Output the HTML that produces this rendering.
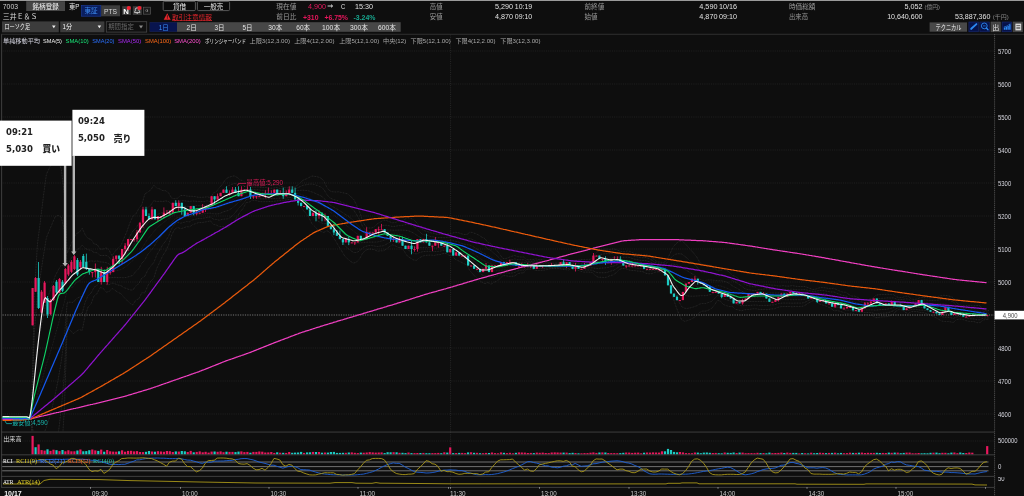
<!DOCTYPE html>
<html lang="ja"><head><meta charset="utf-8"><title>7003 三井E&amp;S チャート</title>
<style>html,body{margin:0;padding:0;background:#0e0e0e;width:1024px;height:496px;overflow:hidden}svg text{white-space:pre}</style>
</head><body>
<svg width="1024" height="496" viewBox="0 0 1024 496" font-family="Liberation Sans, Noto Sans CJK JP, sans-serif" style="display:block;will-change:transform">
<rect width="1024" height="496" fill="#0e0e0e"/>
<rect x="0" y="0" width="1024" height="1" fill="#9a9a9a"/>
<text x="2.8" y="8.7" font-size="7" fill="#cfcfcf" textLength="15.2" lengthAdjust="spacingAndGlyphs" >7003</text>
<rect x="26.2" y="1.2" width="38.8" height="9.8" fill="#454545"/>
<text x="32.5" y="8.6" font-size="6.6" fill="#f0f0f0" textLength="26.3" lengthAdjust="spacingAndGlyphs" >銘柄登録</text>
<text x="69" y="8.5" font-size="6.6" fill="#e8e8e8" textLength="10.4" lengthAdjust="spacingAndGlyphs" >東P</text>
<rect x="81.5" y="5.5" width="19.5" height="10.7" fill="#0a1e5e" stroke="#1c3da0" stroke-width="0.6"/>
<text x="84.5" y="13.4" font-size="6.6" fill="#3d8cf0" textLength="13.2" lengthAdjust="spacingAndGlyphs" >東証</text>
<rect x="101.2" y="5.3" width="18.8" height="11" fill="#3d3d3d"/>
<text x="104" y="13.5" font-size="7" fill="#d8d8d8" textLength="13" lengthAdjust="spacingAndGlyphs" >PTS</text>
<rect x="122.2" y="6.2" width="8.8" height="8.8" fill="#3a3a3a"/>
<text x="123.3" y="14" font-size="8" fill="#ffffff" textLength="5.6" lengthAdjust="spacingAndGlyphs" font-weight="bold" >N</text>
<circle cx="128.8" cy="8" r="2.1" fill="#f02030"/>
<rect x="132.8" y="6.2" width="9" height="8.8" fill="#3a3a3a"/>
<path d="M134.6,12.6 L134.6,11.8 L135.3,10.9 L135.3,9.6 Q135.3,7.8 137.2,7.8 Q139,7.8 139,9.6 L139,10.9 L139.8,11.8 L139.8,12.6 Z M136.5,13.2 L138,13.2" fill="none" stroke="#e8e8e8" stroke-width="0.8"/>
<circle cx="139.4" cy="8" r="2.1" fill="#f02030"/>
<rect x="143.4" y="7.2" width="7" height="7" fill="#1c1c1c" stroke="#555" stroke-width="0.7"/>
<text x="145.4" y="12.3" font-size="3.6" fill="#bbbbbb" >G</text>
<rect x="163.2" y="1.4" width="32.2" height="9.2" rx="1.2" fill="#0a0a0a" stroke="#6a6a6a" stroke-width="0.8"/>
<text x="173" y="8.6" font-size="6.6" fill="#e8e8e8" textLength="13.2" lengthAdjust="spacingAndGlyphs" >貸借</text>
<rect x="197.4" y="1.4" width="32.2" height="9.2" rx="1.2" fill="#0a0a0a" stroke="#6a6a6a" stroke-width="0.8"/>
<text x="203.8" y="8.6" font-size="6.6" fill="#e8e8e8" textLength="19.4" lengthAdjust="spacingAndGlyphs" >一般売</text>
<text x="2.8" y="19.3" font-size="6.9" fill="#d8d8d8" textLength="34.6" lengthAdjust="spacingAndGlyphs" >三井Ｅ＆Ｓ</text>
<path d="M167.2,13.2 L170.7,19.8 L163.7,19.8 Z" fill="#e8262c"/>
<rect x="166.9" y="15.2" width="0.7" height="2.6" fill="#0e0e0e"/><rect x="166.9" y="18.3" width="0.7" height="0.7" fill="#0e0e0e"/>
<text x="172" y="19.6" font-size="6.7" fill="#e8262c" textLength="40" lengthAdjust="spacingAndGlyphs" >取引注意情報</text>
<rect x="172" y="20.4" width="40" height="0.6" fill="#e8262c"/>
<rect x="2" y="21.4" width="56.8" height="10.9" fill="#3c3c3c"/>
<text x="4.4" y="29.4" font-size="6.6" fill="#f4f4f4" textLength="25.8" lengthAdjust="spacingAndGlyphs" >ローソク足</text>
<path d="M52,25.6 L55.6,25.6 L53.8,28.3 Z" fill="#f0f0f0"/>
<rect x="60.2" y="21.4" width="44.2" height="10.9" fill="#3c3c3c"/>
<text x="62.5" y="29.4" font-size="6.8" fill="#f4f4f4" textLength="9.6" lengthAdjust="spacingAndGlyphs" >1分</text>
<path d="M97.6,25.6 L101.2,25.6 L99.4,28.3 Z" fill="#f0f0f0"/>
<rect x="106.3" y="21.7" width="40.4" height="10.4" fill="#101010" stroke="#484848" stroke-width="0.8"/>
<text x="108.2" y="29.4" font-size="6.5" fill="#6a6a6a" textLength="25.6" lengthAdjust="spacingAndGlyphs" >期間指定</text>
<path d="M139,25.6 L143,25.6 L141,28.4 Z" fill="#8a8a8a"/>
<rect x="149.7" y="22.2" width="251" height="9.6" fill="#474747"/>
<rect x="149.7" y="22.2" width="27.3" height="9.6" fill="#08144e"/>
<text x="158.7" y="29.5" font-size="6.8" fill="#3a8df5" textLength="10" lengthAdjust="spacingAndGlyphs" >1日</text>
<text x="186.5" y="29.5" font-size="6.8" fill="#e4e4e4" textLength="10.2" lengthAdjust="spacingAndGlyphs" >2日</text>
<text x="214.5" y="29.5" font-size="6.8" fill="#e4e4e4" textLength="10" lengthAdjust="spacingAndGlyphs" >3日</text>
<text x="242.4" y="29.5" font-size="6.8" fill="#e4e4e4" textLength="10" lengthAdjust="spacingAndGlyphs" >5日</text>
<text x="268.3" y="29.5" font-size="6.8" fill="#e4e4e4" textLength="14" lengthAdjust="spacingAndGlyphs" >30本</text>
<text x="296.3" y="29.5" font-size="6.8" fill="#e4e4e4" textLength="13.8" lengthAdjust="spacingAndGlyphs" >60本</text>
<text x="322.0" y="29.5" font-size="6.8" fill="#e4e4e4" textLength="18.2" lengthAdjust="spacingAndGlyphs" >100本</text>
<text x="350.0" y="29.5" font-size="6.8" fill="#e4e4e4" textLength="18" lengthAdjust="spacingAndGlyphs" >300本</text>
<text x="378.0" y="29.5" font-size="6.8" fill="#e4e4e4" textLength="17.8" lengthAdjust="spacingAndGlyphs" >600本</text>
<text x="276.3" y="8.5" font-size="6.7" fill="#9a9a9a" textLength="20" lengthAdjust="spacingAndGlyphs" >現在値</text>
<text x="308" y="8.6" font-size="7.2" fill="#e8175d" textLength="18" lengthAdjust="spacingAndGlyphs" >4,900</text>
<path d="M327.6,6 L332.4,6 M331,4.6 L332.6,6 L331,7.4" stroke="#e8e8e8" stroke-width="0.9" fill="none"/>
<text x="341" y="8.6" font-size="7" fill="#e2e2e2" textLength="4.2" lengthAdjust="spacingAndGlyphs" >C</text>
<text x="355" y="8.6" font-size="7.2" fill="#e2e2e2" textLength="18" lengthAdjust="spacingAndGlyphs" >15:30</text>
<text x="276.3" y="19.4" font-size="6.7" fill="#9a9a9a" textLength="20" lengthAdjust="spacingAndGlyphs" >前日比</text>
<text x="303" y="19.5" font-size="7.2" fill="#e8175d" textLength="15.5" lengthAdjust="spacingAndGlyphs" font-weight="bold" >+310</text>
<text x="324.4" y="19.5" font-size="7.2" fill="#e8175d" textLength="23.6" lengthAdjust="spacingAndGlyphs" font-weight="bold" >+6.75%</text>
<text x="353.5" y="19.5" font-size="7.2" fill="#18a890" textLength="22" lengthAdjust="spacingAndGlyphs" font-weight="bold" >-3.24%</text>
<text x="429.8" y="8.7" font-size="6.7" fill="#9a9a9a" textLength="12.8" lengthAdjust="spacingAndGlyphs" >高値</text>
<text x="495" y="8.7" font-size="7.2" fill="#e2e2e2" textLength="18" lengthAdjust="spacingAndGlyphs" >5,290</text>
<text x="514.8" y="8.7" font-size="7.2" fill="#e2e2e2" textLength="17.4" lengthAdjust="spacingAndGlyphs" >10:19</text>
<text x="429.8" y="19" font-size="6.7" fill="#9a9a9a" textLength="12.8" lengthAdjust="spacingAndGlyphs" >安値</text>
<text x="495" y="19" font-size="7.2" fill="#e2e2e2" textLength="18" lengthAdjust="spacingAndGlyphs" >4,870</text>
<text x="514.8" y="19" font-size="7.2" fill="#e2e2e2" textLength="17.4" lengthAdjust="spacingAndGlyphs" >09:10</text>
<text x="584.5" y="8.7" font-size="6.7" fill="#9a9a9a" textLength="19.8" lengthAdjust="spacingAndGlyphs" >前終値</text>
<text x="699.3" y="8.7" font-size="7.2" fill="#e2e2e2" textLength="18.2" lengthAdjust="spacingAndGlyphs" >4,590</text>
<text x="719" y="8.7" font-size="7.2" fill="#e2e2e2" textLength="18" lengthAdjust="spacingAndGlyphs" >10/16</text>
<text x="584.5" y="19" font-size="6.7" fill="#9a9a9a" textLength="13" lengthAdjust="spacingAndGlyphs" >始値</text>
<text x="699.3" y="19" font-size="7.2" fill="#e2e2e2" textLength="18.2" lengthAdjust="spacingAndGlyphs" >4,870</text>
<text x="719" y="19" font-size="7.2" fill="#e2e2e2" textLength="18" lengthAdjust="spacingAndGlyphs" >09:10</text>
<text x="789" y="8.5" font-size="6.7" fill="#9a9a9a" textLength="26.3" lengthAdjust="spacingAndGlyphs" >時価総額</text>
<text x="904.4" y="8.5" font-size="7.2" fill="#e2e2e2" textLength="18.1" lengthAdjust="spacingAndGlyphs" >5,052</text>
<text x="924.6" y="8.5" font-size="5.6" fill="#8a8a8a" textLength="15.4" lengthAdjust="spacingAndGlyphs" >(億円)</text>
<text x="789" y="19.2" font-size="6.7" fill="#9a9a9a" textLength="19" lengthAdjust="spacingAndGlyphs" >出来高</text>
<text x="887.2" y="19.2" font-size="7.2" fill="#e2e2e2" textLength="35.3" lengthAdjust="spacingAndGlyphs" >10,640,600</text>
<text x="955" y="19.2" font-size="7.2" fill="#e2e2e2" textLength="35.4" lengthAdjust="spacingAndGlyphs" >53,887,360</text>
<text x="992.8" y="19.2" font-size="5.6" fill="#8a8a8a" textLength="15.9" lengthAdjust="spacingAndGlyphs" >(千円)</text>
<rect x="929.6" y="22.4" width="37.4" height="9.3" fill="#484848"/>
<text x="935.5" y="29.6" font-size="6.6" fill="#f4f4f4" textLength="26" lengthAdjust="spacingAndGlyphs" >テクニカル</text>
<rect x="968.9" y="22" width="9.4" height="9.8" fill="#06124a" stroke="#1a2c74" stroke-width="0.6"/>
<rect x="979.9" y="22" width="9.4" height="9.8" fill="#06124a" stroke="#1a2c74" stroke-width="0.6"/>
<rect x="991" y="22" width="9.4" height="9.8" fill="#424242" stroke="#505050" stroke-width="0.6"/>
<rect x="1002.1" y="22" width="9.4" height="9.8" fill="#06124a" stroke="#1a2c74" stroke-width="0.6"/>
<rect x="1013.1" y="22" width="9.4" height="9.8" fill="#424242" stroke="#505050" stroke-width="0.6"/>
<path d="M971.2,28.8 L976.4,24.1" stroke="#2b88f0" stroke-width="1.9" stroke-linecap="round"/><path d="M970.6,29.8 L971.4,28 L972.4,29 Z" fill="#2b88f0"/>
<circle cx="984.3" cy="25.9" r="2.9" fill="none" stroke="#2b88f0" stroke-width="0.9"/><path d="M986.4,28 L988,29.8" stroke="#2b88f0" stroke-width="1.3" stroke-linecap="round"/><path d="M983,25.9 L985.6,25.9" stroke="#2b88f0" stroke-width="0.7"/>
<text x="992.2" y="29.5" font-size="7" fill="#e4e4e4" textLength="7" lengthAdjust="spacingAndGlyphs" >出</text>
<path d="M1003.8,29.8 V27.4 H1005.2 V29.8 Z M1005.6,29.8 V26.8 H1007 V29.8 Z M1007.4,29.8 V26 H1008.8 V29.8 Z M1009.2,29.8 V24.2 H1010.6 V29.8 Z" fill="#2b88f0"/><path d="M1003.8,27 L1007,26 L1010.4,23.6" stroke="#2b88f0" stroke-width="0.6" fill="none"/>
<rect x="1015.4" y="23.6" width="5.8" height="6.8" fill="#d8d8d8"/><rect x="1016.4" y="25.2" width="3.8" height="0.9" fill="#555"/><rect x="1016.4" y="27.2" width="3.8" height="1.6" fill="#666"/>
<rect x="1.2" y="34" width="0.9" height="453.5" fill="#444444"/>
<rect x="1.2" y="33.8" width="1022.8" height="0.9" fill="#323232"/>
<path d="M2.5,51 H994" stroke="#272727" stroke-width="0.7" stroke-dasharray="1.1,1.1"/>
<path d="M2.5,84 H994" stroke="#272727" stroke-width="0.7" stroke-dasharray="1.1,1.1"/>
<path d="M2.5,117 H994" stroke="#272727" stroke-width="0.7" stroke-dasharray="1.1,1.1"/>
<path d="M2.5,150 H994" stroke="#272727" stroke-width="0.7" stroke-dasharray="1.1,1.1"/>
<path d="M2.5,183 H994" stroke="#272727" stroke-width="0.7" stroke-dasharray="1.1,1.1"/>
<path d="M2.5,216 H994" stroke="#272727" stroke-width="0.7" stroke-dasharray="1.1,1.1"/>
<path d="M2.5,249 H994" stroke="#272727" stroke-width="0.7" stroke-dasharray="1.1,1.1"/>
<path d="M2.5,282 H994" stroke="#272727" stroke-width="0.7" stroke-dasharray="1.1,1.1"/>
<path d="M2.5,348 H994" stroke="#272727" stroke-width="0.7" stroke-dasharray="1.1,1.1"/>
<path d="M2.5,381 H994" stroke="#272727" stroke-width="0.7" stroke-dasharray="1.1,1.1"/>
<path d="M2.5,414 H994" stroke="#272727" stroke-width="0.7" stroke-dasharray="1.1,1.1"/>
<path d="M450.6,34.5 V432" stroke="#303030" stroke-width="0.7" stroke-dasharray="1.1,1.1"/>
<path d="M450.6,432 V487" stroke="#303030" stroke-width="0.7" stroke-dasharray="1.1,1.1"/>
<path d="M994.6,34 V496" stroke="#5a5a5a" stroke-width="0.8" stroke-dasharray="1.2,0.7"/>
<text x="998" y="53.5" font-size="6.7" fill="#d4d4dc" textLength="13.2" lengthAdjust="spacingAndGlyphs" >5700</text>
<text x="998" y="86.5" font-size="6.7" fill="#d4d4dc" textLength="13.2" lengthAdjust="spacingAndGlyphs" >5600</text>
<text x="998" y="119.5" font-size="6.7" fill="#d4d4dc" textLength="13.2" lengthAdjust="spacingAndGlyphs" >5500</text>
<text x="998" y="152.5" font-size="6.7" fill="#d4d4dc" textLength="13.2" lengthAdjust="spacingAndGlyphs" >5400</text>
<text x="998" y="185.5" font-size="6.7" fill="#d4d4dc" textLength="13.2" lengthAdjust="spacingAndGlyphs" >5300</text>
<text x="998" y="218.5" font-size="6.7" fill="#d4d4dc" textLength="13.2" lengthAdjust="spacingAndGlyphs" >5200</text>
<text x="998" y="251.5" font-size="6.7" fill="#d4d4dc" textLength="13.2" lengthAdjust="spacingAndGlyphs" >5100</text>
<text x="998" y="284.5" font-size="6.7" fill="#d4d4dc" textLength="13.2" lengthAdjust="spacingAndGlyphs" >5000</text>
<text x="998" y="350.5" font-size="6.7" fill="#d4d4dc" textLength="13.2" lengthAdjust="spacingAndGlyphs" >4800</text>
<text x="998" y="383.5" font-size="6.7" fill="#d4d4dc" textLength="13.2" lengthAdjust="spacingAndGlyphs" >4700</text>
<text x="998" y="416.5" font-size="6.7" fill="#d4d4dc" textLength="13.2" lengthAdjust="spacingAndGlyphs" >4600</text>
<clipPath id="cm"><rect x="2.2" y="34.6" width="992" height="397"/></clipPath>
<g clip-path="url(#cm)">
<g fill="none" stroke="#3e3e3e" stroke-width="0.55" stroke-dasharray="0.9,0.7">
<path d="M4.6,417.3 L7.6,417.3 L10.6,417.3 L13.5,417.3 L16.5,417.3 L19.5,417.3 L22.5,417.3 L25.5,417.3 L28.5,417.3 L31.4,417.3 L34.4,517.1 L37.4,545.2 L40.4,550.5 L43.4,554.3 L46.4,553.9 L49.3,542.9 L52.3,529.3 L55.3,512.2 L58.3,487.9 L61.3,456.5 L64.3,411.0 L67.2,326.9 L70.2,330.3 L73.2,333.7 L76.2,331.4 L79.2,329.6 L82.2,330.4 L85.1,316.1 L88.1,307.0 L91.1,303.7 L94.1,295.8 L97.1,293.6 L100.1,287.6 L103.0,288.1 L106.0,292.1 L109.0,291.7 L112.0,288.4 L115.0,290.3 L118.0,292.4 L120.9,293.6 L123.9,297.4 L126.9,300.2 L129.9,303.3 L132.9,304.9 L135.9,300.0 L138.8,298.8 L141.8,292.7 L144.8,292.9 L147.8,285.7 L150.8,281.2 L153.8,278.1 L156.7,268.6 L159.7,262.3 L162.7,255.7 L165.7,251.1 L168.7,244.6 L171.6,235.0 L174.6,229.4 L177.6,227.3 L180.6,228.7 L183.6,227.9 L186.6,226.7 L189.5,226.9 L192.5,224.7 L195.5,223.7 L198.5,222.6 L201.5,222.6 L204.5,222.1 L207.4,221.6 L210.4,220.8 L213.4,224.3 L216.4,225.1 L219.4,226.7 L222.4,226.3 L225.3,226.9 L228.3,227.1 L231.3,224.6 L234.3,221.6 L237.3,216.5 L240.3,211.8 L243.2,208.3 L246.2,202.6 L249.2,202.1 L252.2,200.3 L255.2,200.3 L258.2,201.2 L261.1,201.7 L264.1,201.7 L267.1,201.7 L270.1,201.4 L273.1,201.4 L276.1,201.0 L279.0,200.7 L282.0,200.3 L285.0,200.2 L288.0,199.6 L291.0,199.5 L294.0,198.6 L296.9,200.7 L299.9,204.9 L302.9,209.9 L305.9,213.3 L308.9,217.6 L311.8,223.5 L314.8,226.5 L317.8,229.8 L320.8,231.4 L323.8,232.5 L326.8,230.6 L329.7,232.3 L332.7,236.4 L335.7,241.1 L338.7,246.3 L341.7,251.0 L344.7,256.0 L347.6,259.0 L350.6,261.4 L353.6,263.1 L356.6,262.0 L359.6,258.8 L362.6,253.1 L365.5,250.5 L368.5,249.1 L371.5,249.1 L374.5,249.8 L377.5,251.2 L380.5,250.8 L383.4,250.9 L386.4,248.9 L389.4,246.6 L392.4,244.9 L395.4,245.9 L398.4,247.5 L401.3,247.5 L404.3,251.4 L407.3,256.0 L410.3,257.9 L413.3,259.8 L416.3,260.4 L419.2,258.0 L422.2,256.3 L425.2,255.4 L428.2,255.2 L431.2,255.1 L434.2,255.4 L437.1,254.8 L440.1,254.6 L443.1,253.5 L446.1,253.5 L449.1,255.4 L452.1,255.4 L455.0,259.1 L458.0,260.6 L461.0,262.1 L464.0,263.6 L467.0,265.0 L469.9,270.9 L472.9,274.1 L475.9,277.4 L478.9,279.8 L481.9,282.3 L484.9,283.7 L487.8,282.5 L490.8,284.3 L493.8,282.5 L496.8,281.1 L499.8,278.9 L502.8,275.7 L505.7,275.7 L508.7,276.3 L511.7,276.3 L514.7,276.0 L517.7,273.8 L520.7,272.9 L523.6,272.9 L526.6,269.1 L529.6,269.1 L532.6,269.1 L535.6,270.6 L538.6,270.4 L541.5,270.4 L544.5,270.1 L547.5,269.5 L550.5,268.5 L553.5,268.5 L556.5,268.5 L559.4,268.5 L562.4,269.5 L565.4,269.5 L568.4,270.1 L571.4,268.6 L574.4,270.1 L577.3,270.1 L580.3,271.2 L583.3,272.1 L586.3,272.1 L589.3,272.1 L592.3,272.5 L595.2,275.5 L598.2,277.2 L601.2,277.3 L604.2,277.5 L607.2,277.1 L610.1,275.5 L613.1,275.0 L616.1,272.8 L619.1,269.7 L622.1,268.4 L625.1,268.4 L628.0,269.7 L631.0,270.4 L634.0,270.5 L637.0,271.0 L640.0,271.2 L643.0,271.7 L645.9,273.3 L648.9,273.8 L651.9,273.6 L654.9,272.2 L657.9,271.8 L660.9,272.1 L663.8,272.3 L666.8,276.2 L669.8,285.7 L672.8,296.9 L675.8,305.9 L678.8,313.9 L681.7,319.8 L684.7,321.3 L687.7,320.6 L690.7,319.3 L693.7,317.7 L696.7,315.6 L699.6,312.5 L702.6,311.1 L705.6,311.1 L708.6,310.0 L711.6,308.4 L714.6,304.8 L717.5,300.4 L720.5,301.2 L723.5,304.6 L726.5,305.7 L729.5,306.5 L732.5,306.7 L735.4,309.2 L738.4,310.0 L741.4,310.8 L744.4,309.8 L747.4,309.6 L750.4,309.2 L753.3,308.8 L756.3,308.8 L759.3,309.4 L762.3,309.4 L765.3,309.6 L768.2,309.6 L771.2,308.9 L774.2,308.9 L777.2,307.5 L780.2,306.8 L783.2,306.4 L786.1,306.5 L789.1,306.5 L792.1,306.8 L795.1,306.5 L798.1,306.4 L801.1,306.4 L804.0,306.0 L807.0,304.0 L810.0,302.2 L813.0,300.6 L816.0,301.3 L819.0,303.8 L821.9,304.8 L824.9,305.6 L827.9,307.0 L830.9,308.2 L833.9,310.8 L836.9,310.7 L839.8,311.1 L842.8,312.3 L845.8,313.8 L848.8,313.4 L851.8,313.0 L854.8,314.4 L857.7,314.7 L860.7,315.1 L863.7,314.9 L866.7,314.9 L869.7,315.3 L872.7,315.8 L875.6,317.7 L878.6,317.4 L881.6,316.9 L884.6,316.8 L887.6,316.6 L890.6,315.4 L893.5,313.9 L896.5,310.7 L899.5,309.2 L902.5,310.1 L905.5,312.5 L908.4,313.4 L911.4,311.7 L914.4,311.6 L917.4,311.7 L920.4,312.6 L923.4,312.7 L926.3,313.4 L929.3,314.3 L932.3,316.0 L935.3,317.3 L938.3,319.0 L941.3,320.9 L944.2,321.5 L947.2,321.4 L950.2,321.8 L953.2,322.5 L956.2,320.0 L959.2,319.0 L962.1,319.2 L965.1,320.3 L968.1,321.2 L971.1,321.4 L974.1,321.6 L977.1,322.7 L980.0,322.6 L983.0,320.0 L986.0,319.5 L989.0,319.5"/>
<path d="M4.6,417.3 L7.6,417.3 L10.6,417.3 L13.5,417.3 L16.5,417.3 L19.5,417.3 L22.5,417.3 L25.5,417.3 L28.5,417.3 L31.4,417.3 L34.4,479.9 L37.4,495.1 L40.4,495.6 L43.4,494.7 L46.4,490.7 L49.3,480.5 L52.3,468.1 L55.3,453.1 L58.3,433.4 L61.3,408.6 L64.3,374.8 L67.2,314.6 L70.2,316.2 L73.2,318.1 L76.2,315.1 L79.2,313.4 L82.2,313.4 L85.1,302.5 L88.1,295.6 L91.1,293.0 L94.1,287.2 L97.1,285.4 L100.1,281.2 L103.0,281.6 L106.0,284.7 L109.0,284.8 L112.0,283.0 L115.0,283.8 L118.0,285.0 L120.9,285.6 L123.9,287.6 L126.9,288.7 L129.9,289.9 L132.9,290.1 L135.9,285.7 L138.8,283.7 L141.8,278.1 L144.8,276.4 L147.8,270.1 L150.8,265.9 L153.8,262.6 L156.7,255.2 L159.7,250.1 L162.7,244.8 L165.7,241.0 L168.7,236.0 L171.6,228.8 L174.6,224.3 L177.6,222.4 L180.6,223.2 L183.6,222.5 L186.6,221.6 L189.5,221.8 L192.5,220.0 L195.5,219.2 L198.5,218.4 L201.5,218.4 L204.5,218.0 L207.4,217.4 L210.4,217.0 L213.4,219.1 L216.4,219.5 L219.4,220.2 L222.4,219.3 L225.3,219.0 L228.3,218.8 L231.3,216.6 L234.3,213.9 L237.3,210.0 L240.3,206.5 L243.2,203.7 L246.2,199.5 L249.2,198.9 L252.2,197.6 L255.2,197.6 L258.2,198.3 L261.1,198.9 L264.1,198.9 L267.1,198.9 L270.1,198.7 L273.1,198.7 L276.1,198.3 L279.0,198.2 L282.0,198.0 L285.0,198.1 L288.0,197.7 L291.0,197.4 L294.0,196.7 L296.9,198.2 L299.9,201.3 L302.9,204.9 L305.9,207.6 L308.9,210.9 L311.8,215.6 L314.8,218.1 L317.8,221.0 L320.8,222.5 L323.8,223.9 L326.8,223.3 L329.7,225.4 L332.7,228.9 L335.7,232.9 L338.7,237.2 L341.7,241.2 L344.7,245.5 L347.6,248.1 L350.6,250.6 L353.6,252.4 L356.6,252.5 L359.6,250.9 L362.6,247.8 L365.5,246.4 L368.5,245.6 L371.5,245.6 L374.5,246.0 L377.5,246.6 L380.5,246.0 L383.4,245.8 L386.4,244.2 L389.4,242.5 L392.4,241.2 L395.4,242.0 L398.4,243.1 L401.3,243.1 L404.3,246.1 L407.3,249.6 L410.3,251.3 L413.3,253.1 L416.3,254.0 L419.2,252.7 L422.2,251.8 L425.2,251.4 L428.2,251.3 L431.2,251.4 L434.2,251.7 L437.1,251.4 L440.1,251.2 L443.1,250.4 L446.1,250.4 L449.1,251.7 L452.1,251.7 L455.0,254.6 L458.0,255.9 L461.0,257.4 L464.0,258.7 L467.0,260.0 L469.9,264.4 L472.9,267.2 L475.9,270.1 L478.9,272.4 L481.9,274.8 L484.9,276.2 L487.8,275.8 L490.8,277.5 L493.8,276.6 L496.8,276.0 L499.8,274.8 L502.8,272.9 L505.7,272.9 L508.7,273.2 L511.7,273.0 L514.7,272.6 L517.7,270.9 L520.7,270.2 L523.6,270.2 L526.6,267.5 L529.6,267.5 L532.6,267.5 L535.6,268.6 L538.6,268.6 L541.5,268.6 L544.5,268.5 L547.5,268.2 L550.5,267.6 L553.5,267.6 L556.5,267.6 L559.4,267.6 L562.4,268.2 L565.4,268.2 L568.4,268.5 L571.4,267.4 L574.4,268.5 L577.3,268.5 L580.3,269.3 L583.3,270.0 L586.3,270.0 L589.3,270.0 L592.3,270.2 L595.2,271.9 L598.2,272.8 L601.2,272.7 L604.2,272.8 L607.2,272.4 L610.1,271.2 L613.1,270.6 L616.1,268.9 L619.1,266.6 L622.1,265.6 L625.1,265.6 L628.0,266.6 L631.0,267.3 L634.0,267.6 L637.0,268.2 L640.0,268.5 L643.0,268.9 L645.9,270.2 L648.9,270.8 L651.9,270.9 L654.9,270.3 L657.9,270.1 L660.9,270.4 L663.8,270.7 L666.8,273.5 L669.8,280.5 L672.8,288.7 L675.8,295.6 L678.8,301.8 L681.7,306.7 L684.7,308.3 L687.7,308.3 L690.7,307.8 L693.7,306.9 L696.7,305.8 L699.6,304.1 L702.6,303.4 L705.6,303.4 L708.6,302.5 L711.6,301.3 L714.6,298.7 L717.5,295.5 L720.5,296.1 L723.5,298.7 L726.5,299.8 L729.5,300.8 L732.5,301.5 L735.4,303.8 L738.4,304.8 L741.4,305.8 L744.4,305.6 L747.4,305.6 L750.4,305.4 L753.3,305.1 L756.3,305.1 L759.3,305.4 L762.3,305.4 L765.3,305.4 L768.2,305.4 L771.2,304.9 L774.2,304.9 L777.2,303.9 L780.2,303.3 L783.2,303.0 L786.1,303.1 L789.1,303.1 L792.1,303.2 L795.1,303.1 L798.1,303.1 L801.1,303.1 L804.0,302.7 L807.0,301.2 L810.0,299.9 L813.0,298.7 L816.0,299.2 L819.0,301.2 L821.9,302.0 L824.9,302.7 L827.9,303.9 L830.9,305.0 L833.9,307.0 L836.9,307.2 L839.8,307.8 L842.8,309.0 L845.8,310.2 L848.8,310.2 L851.8,310.2 L854.8,311.3 L857.7,311.9 L860.7,312.4 L863.7,312.4 L866.7,312.4 L869.7,312.6 L872.7,312.9 L875.6,314.0 L878.6,313.6 L881.6,313.2 L884.6,313.1 L887.6,312.9 L890.6,311.9 L893.5,310.7 L896.5,308.4 L899.5,307.3 L902.5,307.9 L905.5,309.7 L908.4,310.5 L911.4,309.6 L914.4,309.6 L917.4,309.6 L920.4,310.1 L923.4,310.1 L926.3,310.7 L929.3,311.5 L932.3,312.9 L935.3,313.9 L938.3,315.3 L941.3,316.6 L944.2,317.1 L947.2,317.1 L950.2,317.6 L953.2,318.4 L956.2,317.1 L959.2,316.6 L962.1,316.9 L965.1,317.8 L968.1,318.6 L971.1,318.8 L974.1,319.0 L977.1,319.8 L980.0,319.8 L983.0,318.2 L986.0,318.0 L989.0,318.0"/>
<path d="M4.6,417.3 L7.6,417.3 L10.6,417.3 L13.5,417.3 L16.5,417.3 L19.5,417.3 L22.5,417.3 L25.5,417.3 L28.5,417.3 L31.4,417.3 L34.4,442.7 L37.4,445.0 L40.4,440.7 L43.4,435.0 L46.4,427.4 L49.3,418.0 L52.3,407.0 L55.3,394.0 L58.3,378.9 L61.3,360.8 L64.3,338.6 L67.2,302.3 L70.2,302.2 L73.2,302.4 L76.2,298.8 L79.2,297.2 L82.2,296.3 L85.1,288.9 L88.1,284.2 L91.1,282.3 L94.1,278.5 L97.1,277.2 L100.1,274.7 L103.0,275.1 L106.0,277.3 L109.0,277.8 L112.0,277.6 L115.0,277.3 L118.0,277.7 L120.9,277.6 L123.9,277.8 L126.9,277.2 L129.9,276.4 L132.9,275.3 L135.9,271.3 L138.8,268.7 L141.8,263.4 L144.8,260.0 L147.8,254.4 L150.8,250.7 L153.8,247.2 L156.7,241.8 L159.7,237.9 L162.7,234.0 L165.7,231.0 L168.7,227.4 L171.6,222.7 L174.6,219.2 L177.6,217.6 L180.6,217.7 L183.6,217.0 L186.6,216.4 L189.5,216.7 L192.5,215.2 L195.5,214.7 L198.5,214.2 L201.5,214.2 L204.5,213.8 L207.4,213.3 L210.4,213.2 L213.4,213.8 L216.4,213.9 L219.4,213.7 L222.4,212.3 L225.3,211.2 L228.3,210.5 L231.3,208.6 L234.3,206.3 L237.3,203.5 L240.3,201.2 L243.2,199.1 L246.2,196.3 L249.2,195.8 L252.2,195.0 L255.2,195.0 L258.2,195.5 L261.1,196.0 L264.1,196.0 L267.1,196.0 L270.1,196.1 L273.1,196.1 L276.1,195.6 L279.0,195.7 L282.0,195.7 L285.0,196.1 L288.0,195.7 L291.0,195.3 L294.0,194.8 L296.9,195.7 L299.9,197.6 L302.9,200.0 L305.9,201.9 L308.9,204.2 L311.8,207.7 L314.8,209.8 L317.8,212.2 L320.8,213.6 L323.8,215.3 L326.8,216.1 L329.7,218.5 L332.7,221.5 L335.7,224.7 L338.7,228.1 L341.7,231.5 L344.7,235.0 L347.6,237.3 L350.6,239.7 L353.6,241.8 L356.6,243.1 L359.6,243.1 L362.6,242.5 L365.5,242.3 L368.5,242.1 L371.5,242.1 L374.5,242.1 L377.5,242.0 L380.5,241.2 L383.4,240.6 L386.4,239.4 L389.4,238.3 L392.4,237.6 L395.4,238.1 L398.4,238.8 L401.3,238.8 L404.3,240.8 L407.3,243.3 L410.3,244.6 L413.3,246.4 L416.3,247.7 L419.2,247.4 L422.2,247.4 L425.2,247.3 L428.2,247.4 L431.2,247.7 L434.2,248.0 L437.1,248.0 L440.1,247.7 L443.1,247.2 L446.1,247.2 L449.1,248.0 L452.1,248.0 L455.0,250.2 L458.0,251.2 L461.0,252.6 L464.0,253.9 L467.0,254.9 L469.9,258.0 L472.9,260.3 L475.9,262.9 L478.9,265.0 L481.9,267.2 L484.9,268.6 L487.8,269.1 L490.8,270.7 L493.8,270.8 L496.8,270.9 L499.8,270.7 L502.8,270.0 L505.7,270.0 L508.7,270.0 L511.7,269.7 L514.7,269.2 L517.7,268.1 L520.7,267.6 L523.6,267.6 L526.6,266.0 L529.6,266.0 L532.6,266.0 L535.6,266.6 L538.6,266.8 L541.5,266.8 L544.5,266.9 L547.5,266.8 L550.5,266.7 L553.5,266.7 L556.5,266.7 L559.4,266.7 L562.4,266.8 L565.4,266.8 L568.4,266.9 L571.4,266.2 L574.4,266.9 L577.3,266.9 L580.3,267.4 L583.3,267.9 L586.3,267.9 L589.3,267.9 L592.3,267.8 L595.2,268.3 L598.2,268.5 L601.2,268.1 L604.2,268.0 L607.2,267.7 L610.1,266.8 L613.1,266.3 L616.1,265.0 L619.1,263.4 L622.1,262.8 L625.1,262.8 L628.0,263.4 L631.0,264.2 L634.0,264.8 L637.0,265.3 L640.0,265.8 L643.0,266.1 L645.9,267.0 L648.9,267.7 L651.9,268.2 L654.9,268.3 L657.9,268.5 L660.9,268.8 L663.8,269.1 L666.8,270.9 L669.8,275.2 L672.8,280.4 L675.8,285.2 L678.8,289.8 L681.7,293.5 L684.7,295.3 L687.7,295.9 L690.7,296.2 L693.7,296.2 L696.7,296.0 L699.6,295.8 L702.6,295.7 L705.6,295.7 L708.6,295.0 L711.6,294.2 L714.6,292.5 L717.5,290.6 L720.5,291.0 L723.5,292.8 L726.5,293.8 L729.5,295.1 L732.5,296.3 L735.4,298.3 L738.4,299.6 L741.4,300.9 L744.4,301.3 L747.4,301.5 L750.4,301.5 L753.3,301.5 L756.3,301.5 L759.3,301.4 L762.3,301.4 L765.3,301.3 L768.2,301.3 L771.2,300.9 L774.2,300.9 L777.2,300.3 L780.2,299.9 L783.2,299.5 L786.1,299.7 L789.1,299.7 L792.1,299.7 L795.1,299.7 L798.1,299.7 L801.1,299.7 L804.0,299.4 L807.0,298.4 L810.0,297.6 L813.0,296.9 L816.0,297.2 L819.0,298.5 L821.9,299.1 L824.9,299.7 L827.9,300.8 L830.9,301.7 L833.9,303.2 L836.9,303.8 L839.8,304.4 L842.8,305.6 L845.8,306.6 L848.8,307.0 L851.8,307.4 L854.8,308.3 L857.7,309.0 L860.7,309.7 L863.7,309.9 L866.7,309.9 L869.7,309.9 L872.7,309.9 L875.6,310.2 L878.6,309.8 L881.6,309.5 L884.6,309.4 L887.6,309.1 L890.6,308.4 L893.5,307.5 L896.5,306.0 L899.5,305.4 L902.5,305.8 L905.5,307.0 L908.4,307.7 L911.4,307.5 L914.4,307.5 L917.4,307.5 L920.4,307.5 L923.4,307.6 L926.3,308.1 L929.3,308.8 L932.3,309.7 L935.3,310.5 L938.3,311.5 L941.3,312.4 L944.2,312.8 L947.2,312.8 L950.2,313.3 L953.2,314.2 L956.2,314.1 L959.2,314.2 L962.1,314.7 L965.1,315.4 L968.1,316.0 L971.1,316.2 L974.1,316.4 L977.1,316.9 L980.0,317.0 L983.0,316.5 L986.0,316.5 L989.0,316.5"/>
<path d="M4.6,417.3 L7.6,417.3 L10.6,417.3 L13.5,417.3 L16.5,417.3 L19.5,417.3 L22.5,417.3 L25.5,417.3 L28.5,417.3 L31.4,417.3 L34.4,368.4 L37.4,344.8 L40.4,330.9 L43.4,315.7 L46.4,300.8 L49.3,293.1 L52.3,284.6 L55.3,275.7 L58.3,269.9 L61.3,265.1 L64.3,266.2 L67.2,277.7 L70.2,274.1 L73.2,271.1 L76.2,266.2 L79.2,264.8 L82.2,262.3 L85.1,261.8 L88.1,261.4 L91.1,260.9 L94.1,261.3 L97.1,260.9 L100.1,261.9 L103.0,262.1 L106.0,262.6 L109.0,263.8 L112.0,266.7 L115.0,264.4 L118.0,263.0 L120.9,261.7 L123.9,258.2 L126.9,254.3 L129.9,249.6 L132.9,245.8 L135.9,242.6 L138.8,238.6 L141.8,234.1 L144.8,227.0 L147.8,223.2 L150.8,220.3 L153.8,216.2 L156.7,215.0 L159.7,213.4 L162.7,212.3 L165.7,210.9 L168.7,210.1 L171.6,210.4 L174.6,209.0 L177.6,207.8 L180.6,206.6 L183.6,206.2 L186.6,206.2 L189.5,206.5 L192.5,205.8 L195.5,205.7 L198.5,205.7 L201.5,205.7 L204.5,205.5 L207.4,205.0 L210.4,205.6 L213.4,203.3 L216.4,202.7 L219.4,200.7 L222.4,198.3 L225.3,195.5 L228.3,194.0 L231.3,192.6 L234.3,191.0 L237.3,190.5 L240.3,190.6 L243.2,190.0 L246.2,190.0 L249.2,189.5 L252.2,189.7 L255.2,189.7 L258.2,189.8 L261.1,190.3 L264.1,190.3 L267.1,190.3 L270.1,190.8 L273.1,190.8 L276.1,190.2 L279.0,190.7 L282.0,191.2 L285.0,191.9 L288.0,191.8 L291.0,191.1 L294.0,191.0 L296.9,190.7 L299.9,190.4 L302.9,190.2 L305.9,190.5 L308.9,190.9 L311.8,191.9 L314.8,193.1 L317.8,194.5 L320.8,195.8 L323.8,198.0 L326.8,201.6 L329.7,204.7 L332.7,206.6 L335.7,208.4 L338.7,209.9 L341.7,212.0 L344.7,214.0 L347.6,215.6 L350.6,218.1 L353.6,220.5 L356.6,224.1 L359.6,227.4 L362.6,231.9 L365.5,234.2 L368.5,235.0 L371.5,235.0 L374.5,234.4 L377.5,232.9 L380.5,231.5 L383.4,230.4 L386.4,230.0 L389.4,230.0 L392.4,230.2 L395.4,230.2 L398.4,230.1 L401.3,230.1 L404.3,230.2 L407.3,230.5 L410.3,231.4 L413.3,232.9 L416.3,234.9 L419.2,236.8 L422.2,238.5 L425.2,239.2 L428.2,239.6 L431.2,240.4 L434.2,240.6 L437.1,241.2 L440.1,240.9 L443.1,240.9 L446.1,240.9 L449.1,240.6 L452.1,240.6 L455.0,241.2 L458.0,241.8 L461.0,243.2 L464.0,244.1 L467.0,244.8 L469.9,245.0 L472.9,246.5 L475.9,248.3 L478.9,250.1 L481.9,252.2 L484.9,253.6 L487.8,255.8 L490.8,257.0 L493.8,259.1 L496.8,260.7 L499.8,262.5 L502.8,264.3 L505.7,264.3 L508.7,263.7 L511.7,263.0 L514.7,262.4 L517.7,262.4 L520.7,262.3 L523.6,262.3 L526.6,262.8 L529.6,262.8 L532.6,262.8 L535.6,262.7 L538.6,263.1 L541.5,263.1 L544.5,263.6 L547.5,264.2 L550.5,264.9 L553.5,264.9 L556.5,264.9 L559.4,264.9 L562.4,264.2 L565.4,264.2 L568.4,263.6 L571.4,263.7 L574.4,263.6 L577.3,263.6 L580.3,263.6 L583.3,263.7 L586.3,263.7 L589.3,263.7 L592.3,263.2 L595.2,261.1 L598.2,259.8 L601.2,259.0 L604.2,258.6 L607.2,258.3 L610.1,258.1 L613.1,257.6 L616.1,257.2 L619.1,257.1 L622.1,257.2 L625.1,257.2 L628.0,257.1 L631.0,258.0 L634.0,259.1 L637.0,259.6 L640.0,260.3 L643.0,260.5 L645.9,260.7 L648.9,261.6 L651.9,262.8 L654.9,264.4 L657.9,265.2 L660.9,265.5 L663.8,265.8 L666.8,265.6 L669.8,264.6 L672.8,264.0 L675.8,264.5 L678.8,265.7 L681.7,267.2 L684.7,269.3 L687.7,271.1 L690.7,273.0 L693.7,274.7 L696.7,276.5 L699.6,279.0 L702.6,280.4 L705.6,280.4 L708.6,280.0 L711.6,280.0 L714.6,280.3 L717.5,280.8 L720.5,280.7 L723.5,281.1 L726.5,282.0 L729.5,283.7 L732.5,285.9 L735.4,287.4 L738.4,289.2 L741.4,290.9 L744.4,292.7 L747.4,293.5 L750.4,293.8 L753.3,294.2 L756.3,294.2 L759.3,293.4 L762.3,293.4 L765.3,293.0 L768.2,293.0 L771.2,293.0 L774.2,293.0 L777.2,293.1 L780.2,293.0 L783.2,292.6 L786.1,292.9 L789.1,292.9 L792.1,292.6 L795.1,292.9 L798.1,293.1 L801.1,293.1 L804.0,292.9 L807.0,292.8 L810.0,293.1 L813.0,293.2 L816.0,293.2 L819.0,293.2 L821.9,293.3 L824.9,293.7 L827.9,294.6 L830.9,295.3 L833.9,295.7 L836.9,296.8 L839.8,297.8 L842.8,298.8 L845.8,299.5 L848.8,300.7 L851.8,301.7 L854.8,302.2 L857.7,303.2 L860.7,304.3 L863.7,305.0 L866.7,305.0 L869.7,304.5 L872.7,304.1 L875.6,302.7 L878.6,302.3 L881.6,302.1 L884.6,301.9 L887.6,301.6 L890.6,301.5 L893.5,301.1 L896.5,301.4 L899.5,301.5 L902.5,301.6 L905.5,301.5 L908.4,302.0 L911.4,303.3 L914.4,303.5 L917.4,303.3 L920.4,302.4 L923.4,302.6 L926.3,302.7 L929.3,303.3 L932.3,303.5 L935.3,303.8 L938.3,303.9 L941.3,303.9 L944.2,304.0 L947.2,304.3 L950.2,304.9 L953.2,305.9 L956.2,308.2 L959.2,309.5 L962.1,310.1 L965.1,310.5 L968.1,310.7 L971.1,311.0 L974.1,311.1 L977.1,311.1 L980.0,311.4 L983.0,313.0 L986.0,313.5 L989.0,313.5"/>
<path d="M4.6,417.3 L7.6,417.3 L10.6,417.3 L13.5,417.3 L16.5,417.3 L19.5,417.3 L22.5,417.3 L25.5,417.3 L28.5,417.3 L31.4,417.3 L34.4,331.2 L37.4,294.7 L40.4,276.0 L43.4,256.0 L46.4,237.6 L49.3,230.6 L52.3,223.4 L55.3,216.6 L58.3,215.4 L61.3,217.2 L64.3,229.9 L67.2,265.4 L70.2,260.0 L73.2,255.5 L76.2,249.8 L79.2,248.6 L82.2,245.2 L85.1,248.2 L88.1,249.9 L91.1,250.2 L94.1,252.6 L97.1,252.7 L100.1,255.5 L103.0,255.6 L106.0,255.2 L109.0,256.9 L112.0,261.3 L115.0,257.9 L118.0,255.6 L120.9,253.7 L123.9,248.3 L126.9,242.8 L129.9,236.2 L132.9,231.0 L135.9,228.3 L138.8,223.6 L141.8,219.4 L144.8,210.6 L147.8,207.6 L150.8,205.1 L153.8,200.7 L156.7,201.5 L159.7,201.2 L162.7,201.5 L165.7,200.9 L168.7,201.5 L171.6,204.3 L174.6,203.8 L177.6,203.0 L180.6,201.1 L183.6,200.7 L186.6,201.1 L189.5,201.4 L192.5,201.0 L195.5,201.2 L198.5,201.5 L201.5,201.5 L204.5,201.4 L207.4,200.8 L210.4,201.8 L213.4,198.1 L216.4,197.1 L219.4,194.2 L222.4,191.2 L225.3,187.7 L228.3,185.7 L231.3,184.6 L234.3,183.4 L237.3,184.1 L240.3,185.3 L243.2,185.4 L246.2,186.9 L249.2,186.3 L252.2,187.1 L255.2,187.1 L258.2,186.9 L261.1,187.5 L264.1,187.5 L267.1,187.5 L270.1,188.2 L273.1,188.2 L276.1,187.5 L279.0,188.2 L282.0,188.9 L285.0,189.9 L288.0,189.8 L291.0,189.0 L294.0,189.1 L296.9,188.2 L299.9,186.7 L302.9,185.3 L305.9,184.8 L308.9,184.2 L311.8,184.0 L314.8,184.7 L317.8,185.7 L320.8,187.0 L323.8,189.4 L326.8,194.4 L329.7,197.8 L332.7,199.2 L335.7,200.2 L338.7,200.9 L341.7,202.3 L344.7,203.6 L347.6,204.8 L350.6,207.3 L353.6,209.8 L356.6,214.7 L359.6,219.6 L362.6,226.6 L365.5,230.1 L368.5,231.5 L371.5,231.5 L374.5,230.6 L377.5,228.3 L380.5,226.7 L383.4,225.3 L386.4,225.2 L389.4,225.8 L392.4,226.5 L395.4,226.3 L398.4,225.7 L401.3,225.7 L404.3,224.9 L407.3,224.2 L410.3,224.7 L413.3,226.2 L416.3,228.6 L419.2,231.5 L422.2,234.1 L425.2,235.1 L428.2,235.7 L431.2,236.7 L434.2,237.0 L437.1,237.8 L440.1,237.5 L443.1,237.7 L446.1,237.7 L449.1,237.0 L452.1,237.0 L455.0,236.8 L458.0,237.1 L461.0,238.4 L464.0,239.3 L467.0,239.7 L469.9,238.5 L472.9,239.6 L475.9,241.1 L478.9,242.7 L481.9,244.7 L484.9,246.0 L487.8,249.1 L490.8,250.2 L493.8,253.3 L496.8,255.5 L499.8,258.4 L502.8,261.4 L505.7,261.4 L508.7,260.6 L511.7,259.7 L514.7,258.9 L517.7,259.5 L520.7,259.7 L523.6,259.7 L526.6,261.3 L529.6,261.3 L532.6,261.3 L535.6,260.7 L538.6,261.3 L541.5,261.3 L544.5,262.0 L547.5,262.8 L550.5,264.0 L553.5,264.0 L556.5,264.0 L559.4,264.0 L562.4,262.8 L565.4,262.8 L568.4,262.0 L571.4,262.5 L574.4,262.0 L577.3,262.0 L580.3,261.7 L583.3,261.6 L586.3,261.6 L589.3,261.6 L592.3,260.8 L595.2,257.5 L598.2,255.4 L601.2,254.5 L604.2,253.8 L607.2,253.6 L610.1,253.8 L613.1,253.2 L616.1,253.3 L619.1,254.0 L622.1,254.4 L625.1,254.4 L628.0,254.0 L631.0,254.9 L634.0,256.2 L637.0,256.8 L640.0,257.6 L643.0,257.7 L645.9,257.5 L648.9,258.6 L651.9,260.1 L654.9,262.4 L657.9,263.6 L660.9,263.9 L663.8,264.2 L666.8,263.0 L669.8,259.3 L672.8,255.8 L675.8,254.1 L678.8,253.7 L681.7,254.0 L684.7,256.2 L687.7,258.8 L690.7,261.5 L693.7,263.9 L696.7,266.7 L699.6,270.6 L702.6,272.7 L705.6,272.7 L708.6,272.5 L711.6,272.9 L714.6,274.1 L717.5,275.9 L720.5,275.6 L723.5,275.2 L726.5,276.1 L729.5,278.0 L732.5,280.7 L735.4,282.0 L738.4,284.0 L741.4,285.9 L744.4,288.4 L747.4,289.5 L750.4,290.0 L753.3,290.5 L756.3,290.5 L759.3,289.4 L762.3,289.4 L765.3,288.8 L768.2,288.8 L771.2,289.1 L774.2,289.1 L777.2,289.5 L780.2,289.6 L783.2,289.1 L786.1,289.5 L789.1,289.5 L792.1,289.1 L795.1,289.5 L798.1,289.8 L801.1,289.8 L804.0,289.6 L807.0,290.0 L810.0,290.8 L813.0,291.4 L816.0,291.2 L819.0,290.6 L821.9,290.4 L824.9,290.8 L827.9,291.4 L830.9,292.0 L833.9,291.9 L836.9,293.4 L839.8,294.4 L842.8,295.5 L845.8,295.9 L848.8,297.5 L851.8,298.9 L854.8,299.1 L857.7,300.3 L860.7,301.7 L863.7,302.5 L866.7,302.5 L869.7,301.8 L872.7,301.2 L875.6,299.0 L878.6,298.5 L881.6,298.4 L884.6,298.2 L887.6,297.9 L890.6,298.0 L893.5,297.9 L896.5,299.1 L899.5,299.6 L902.5,299.5 L905.5,298.8 L908.4,299.1 L911.4,301.2 L914.4,301.4 L917.4,301.2 L920.4,299.8 L923.4,300.1 L926.3,300.0 L929.3,300.6 L932.3,300.4 L935.3,300.4 L938.3,300.2 L941.3,299.6 L944.2,299.7 L947.2,300.0 L950.2,300.6 L953.2,301.7 L956.2,305.2 L959.2,307.1 L962.1,307.8 L965.1,308.1 L968.1,308.1 L971.1,308.4 L974.1,308.5 L977.1,308.2 L980.0,308.5 L983.0,311.2 L986.0,312.0 L989.0,312.0"/>
<path d="M4.6,417.3 L7.6,417.3 L10.6,417.3 L13.5,417.3 L16.5,417.3 L19.5,417.3 L22.5,417.3 L25.5,417.3 L28.5,417.3 L31.4,417.3 L34.4,294.0 L37.4,244.6 L40.4,221.1 L43.4,196.3 L46.4,174.3 L49.3,168.2 L52.3,162.2 L55.3,157.4 L58.3,160.9 L61.3,169.3 L64.3,193.7 L67.2,253.2 L70.2,246.0 L73.2,239.8 L76.2,233.5 L79.2,232.5 L82.2,228.2 L85.1,234.6 L88.1,238.5 L91.1,239.5 L94.1,244.0 L97.1,244.5 L100.1,249.1 L103.0,249.1 L106.0,247.8 L109.0,249.9 L112.0,255.8 L115.0,251.4 L118.0,248.2 L120.9,245.7 L123.9,238.5 L126.9,231.4 L129.9,222.8 L132.9,216.2 L135.9,213.9 L138.8,208.6 L141.8,204.7 L144.8,194.1 L147.8,192.0 L150.8,189.9 L153.8,185.2 L156.7,188.1 L159.7,188.9 L162.7,190.6 L165.7,190.8 L168.7,192.9 L171.6,198.1 L174.6,198.7 L177.6,198.1 L180.6,195.6 L183.6,195.3 L186.6,196.0 L189.5,196.3 L192.5,196.3 L195.5,196.7 L198.5,197.3 L201.5,197.3 L204.5,197.2 L207.4,196.7 L210.4,198.0 L213.4,192.9 L216.4,191.5 L219.4,187.7 L222.4,184.2 L225.3,179.8 L228.3,177.4 L231.3,176.6 L234.3,175.8 L237.3,177.6 L240.3,180.0 L243.2,180.8 L246.2,183.7 L249.2,183.2 L252.2,184.4 L255.2,184.4 L258.2,184.1 L261.1,184.6 L264.1,184.6 L267.1,184.6 L270.1,185.5 L273.1,185.5 L276.1,184.8 L279.0,185.7 L282.0,186.6 L285.0,187.8 L288.0,187.8 L291.0,186.8 L294.0,187.2 L296.9,185.7 L299.9,183.1 L302.9,180.3 L305.9,179.1 L308.9,177.6 L311.8,176.0 L314.8,176.4 L317.8,176.9 L320.8,178.1 L323.8,180.8 L326.8,187.1 L329.7,190.9 L332.7,191.8 L335.7,192.0 L338.7,191.8 L341.7,192.6 L344.7,193.1 L347.6,193.9 L350.6,196.5 L353.6,199.2 L356.6,205.2 L359.6,211.7 L362.6,221.3 L365.5,226.1 L368.5,228.0 L371.5,228.0 L374.5,226.8 L377.5,223.7 L380.5,221.9 L383.4,220.2 L386.4,220.5 L389.4,221.7 L392.4,222.8 L395.4,222.4 L398.4,221.4 L401.3,221.4 L404.3,219.6 L407.3,217.8 L410.3,218.1 L413.3,219.5 L416.3,222.2 L419.2,226.2 L422.2,229.6 L425.2,231.0 L428.2,231.8 L431.2,233.0 L434.2,233.3 L437.1,234.4 L440.1,234.1 L443.1,234.6 L446.1,234.6 L449.1,233.3 L452.1,233.3 L455.0,232.3 L458.0,232.5 L461.0,233.7 L464.0,234.4 L467.0,234.6 L469.9,232.0 L472.9,232.7 L475.9,233.8 L478.9,235.2 L481.9,237.2 L484.9,238.5 L487.8,242.5 L490.8,243.4 L493.8,247.4 L496.8,250.4 L499.8,254.3 L502.8,258.6 L505.7,258.6 L508.7,257.4 L511.7,256.3 L514.7,255.5 L517.7,256.7 L520.7,257.0 L523.6,257.0 L526.6,259.7 L529.6,259.7 L532.6,259.7 L535.6,258.8 L538.6,259.5 L541.5,259.5 L544.5,260.3 L547.5,261.5 L550.5,263.0 L553.5,263.0 L556.5,263.0 L559.4,263.0 L562.4,261.5 L565.4,261.5 L568.4,260.3 L571.4,261.3 L574.4,260.3 L577.3,260.3 L580.3,259.8 L583.3,259.4 L586.3,259.4 L589.3,259.4 L592.3,258.5 L595.2,253.9 L598.2,251.1 L601.2,249.9 L604.2,249.1 L607.2,249.0 L610.1,249.4 L613.1,248.9 L616.1,249.4 L619.1,250.8 L622.1,251.6 L625.1,251.6 L628.0,250.8 L631.0,251.8 L634.0,253.4 L637.0,253.9 L640.0,254.8 L643.0,254.9 L645.9,254.4 L648.9,255.5 L651.9,257.4 L654.9,260.4 L657.9,262.0 L660.9,262.2 L663.8,262.5 L666.8,260.3 L669.8,254.1 L672.8,247.6 L675.8,243.8 L678.8,241.6 L681.7,240.9 L684.7,243.2 L687.7,246.4 L690.7,249.9 L693.7,253.2 L696.7,256.9 L699.6,262.2 L702.6,265.0 L705.6,265.0 L708.6,265.0 L711.6,265.8 L714.6,268.0 L717.5,271.0 L720.5,270.5 L723.5,269.3 L726.5,270.1 L729.5,272.3 L732.5,275.5 L735.4,276.5 L738.4,278.8 L741.4,281.0 L744.4,284.1 L747.4,285.5 L750.4,286.2 L753.3,286.8 L756.3,286.8 L759.3,285.4 L762.3,285.4 L765.3,284.7 L768.2,284.7 L771.2,285.1 L774.2,285.1 L777.2,285.9 L780.2,286.1 L783.2,285.6 L786.1,286.1 L789.1,286.1 L792.1,285.6 L795.1,286.1 L798.1,286.5 L801.1,286.5 L804.0,286.4 L807.0,287.2 L810.0,288.5 L813.0,289.5 L816.0,289.1 L819.0,287.9 L821.9,287.5 L824.9,287.8 L827.9,288.3 L830.9,288.8 L833.9,288.1 L836.9,289.9 L839.8,291.1 L842.8,292.1 L845.8,292.3 L848.8,294.4 L851.8,296.1 L854.8,296.1 L857.7,297.4 L860.7,299.0 L863.7,300.0 L866.7,300.0 L869.7,299.0 L872.7,298.3 L875.6,295.3 L878.6,294.7 L881.6,294.6 L884.6,294.5 L887.6,294.2 L890.6,294.6 L893.5,294.7 L896.5,296.8 L899.5,297.7 L902.5,297.4 L905.5,296.1 L908.4,296.3 L911.4,299.0 L914.4,299.4 L917.4,299.0 L920.4,297.3 L923.4,297.5 L926.3,297.3 L929.3,297.9 L932.3,297.3 L935.3,297.0 L938.3,296.4 L941.3,295.4 L944.2,295.3 L947.2,295.7 L950.2,296.4 L953.2,297.6 L956.2,302.3 L959.2,304.7 L962.1,305.5 L965.1,305.6 L968.1,305.5 L971.1,305.8 L974.1,305.9 L977.1,305.4 L980.0,305.7 L983.0,309.4 L986.0,310.5 L989.0,310.5"/>
</g>
<path d="M4.6,417.3 L7.6,417.3 L10.6,417.3 L13.5,417.3 L16.5,417.3 L19.5,417.3 L22.5,417.3 L25.5,417.3 L28.5,417.3 L31.4,417.3 L34.4,405.5 L37.4,394.9 L40.4,385.8 L43.4,375.3 L46.4,364.1 L49.3,355.5 L52.3,345.8 L55.3,334.8 L58.3,324.4 L61.3,312.9 L64.3,302.4 L67.2,290.0 L70.2,288.1 L73.2,286.8 L76.2,282.5 L79.2,281.0 L82.2,279.3 L85.1,275.4 L88.1,272.8 L91.1,271.6 L94.1,269.9 L97.1,269.1 L100.1,268.3 L103.0,268.6 L106.0,270.0 L109.0,270.8 L112.0,272.1 L115.0,270.8 L118.0,270.3 L120.9,269.6 L123.9,268.0 L126.9,265.8 L129.9,263.0 L132.9,260.6 L135.9,257.0 L138.8,253.7 L141.8,248.7 L144.8,243.5 L147.8,238.8 L150.8,235.5 L153.8,231.7 L156.7,228.4 L159.7,225.6 L162.7,223.2 L165.7,220.9 L168.7,218.7 L171.6,216.6 L174.6,214.1 L177.6,212.7 L180.6,212.1 L183.6,211.6 L186.6,211.3 L189.5,211.6 L192.5,210.5 L195.5,210.2 L198.5,210.0 L201.5,210.0 L204.5,209.7 L207.4,209.1 L210.4,209.4 L213.4,208.6 L216.4,208.3 L219.4,207.2 L222.4,205.3 L225.3,203.4 L228.3,202.2 L231.3,200.6 L234.3,198.7 L237.3,197.0 L240.3,195.9 L243.2,194.6 L246.2,193.2 L249.2,192.6 L252.2,192.3 L255.2,192.3 L258.2,192.6 L261.1,193.2 L264.1,193.2 L267.1,193.2 L270.1,193.5 L273.1,193.5 L276.1,192.9 L279.0,193.2 L282.0,193.5 L285.0,194.0 L288.0,193.7 L291.0,193.2 L294.0,192.9 L296.9,193.2 L299.9,194.0 L302.9,195.1 L305.9,196.2 L308.9,197.6 L311.8,199.8 L314.8,201.4 L317.8,203.4 L320.8,204.7 L323.8,206.7 L326.8,208.8 L329.7,211.6 L332.7,214.1 L335.7,216.6 L338.7,219.0 L341.7,221.8 L344.7,224.5 L347.6,226.5 L350.6,228.9 L353.6,231.1 L356.6,233.6 L359.6,235.2 L362.6,237.2 L365.5,238.3 L368.5,238.5 L371.5,238.5 L374.5,238.3 L377.5,237.4 L380.5,236.4 L383.4,235.5 L386.4,234.7 L389.4,234.1 L392.4,233.9 L395.4,234.1 L398.4,234.4 L401.3,234.4 L404.3,235.5 L407.3,236.9 L410.3,238.0 L413.3,239.7 L416.3,241.3 L419.2,242.1 L422.2,243.0 L425.2,243.2 L428.2,243.5 L431.2,244.1 L434.2,244.3 L437.1,244.6 L440.1,244.3 L443.1,244.1 L446.1,244.1 L449.1,244.3 L452.1,244.3 L455.0,245.7 L458.0,246.5 L461.0,247.9 L464.0,249.0 L467.0,249.8 L469.9,251.5 L472.9,253.4 L475.9,255.6 L478.9,257.5 L481.9,259.7 L484.9,261.1 L487.8,262.5 L490.8,263.9 L493.8,264.9 L496.8,265.8 L499.8,266.6 L502.8,267.1 L505.7,267.1 L508.7,266.9 L511.7,266.3 L514.7,265.8 L517.7,265.2 L520.7,264.9 L523.6,264.9 L526.6,264.4 L529.6,264.4 L532.6,264.4 L535.6,264.7 L538.6,264.9 L541.5,264.9 L544.5,265.2 L547.5,265.5 L550.5,265.8 L553.5,265.8 L556.5,265.8 L559.4,265.8 L562.4,265.5 L565.4,265.5 L568.4,265.2 L571.4,264.9 L574.4,265.2 L577.3,265.2 L580.3,265.5 L583.3,265.8 L586.3,265.8 L589.3,265.8 L592.3,265.5 L595.2,264.7 L598.2,264.1 L601.2,263.6 L604.2,263.3 L607.2,263.0 L610.1,262.5 L613.1,261.9 L616.1,261.1 L619.1,260.3 L622.1,260.0 L625.1,260.0 L628.0,260.3 L631.0,261.1 L634.0,261.9 L637.0,262.5 L640.0,263.0 L643.0,263.3 L645.9,263.9 L648.9,264.7 L651.9,265.5 L654.9,266.3 L657.9,266.9 L660.9,267.1 L663.8,267.4 L666.8,268.2 L669.8,269.9 L672.8,272.2 L675.8,274.8 L678.8,277.7 L681.7,280.4 L684.7,282.3 L687.7,283.5 L690.7,284.6 L693.7,285.4 L696.7,286.3 L699.6,287.4 L702.6,288.0 L705.6,288.0 L708.6,287.5 L711.6,287.1 L714.6,286.4 L717.5,285.7 L720.5,285.9 L723.5,286.9 L726.5,287.9 L729.5,289.4 L732.5,291.1 L735.4,292.9 L738.4,294.4 L741.4,295.9 L744.4,297.0 L747.4,297.5 L750.4,297.7 L753.3,297.8 L756.3,297.8 L759.3,297.4 L762.3,297.4 L765.3,297.1 L768.2,297.1 L771.2,297.0 L774.2,297.0 L777.2,296.7 L780.2,296.4 L783.2,296.0 L786.1,296.3 L789.1,296.3 L792.1,296.2 L795.1,296.3 L798.1,296.4 L801.1,296.4 L804.0,296.2 L807.0,295.6 L810.0,295.3 L813.0,295.1 L816.0,295.2 L819.0,295.9 L821.9,296.2 L824.9,296.7 L827.9,297.7 L830.9,298.5 L833.9,299.5 L836.9,300.3 L839.8,301.1 L842.8,302.2 L845.8,303.0 L848.8,303.9 L851.8,304.5 L854.8,305.2 L857.7,306.1 L860.7,307.0 L863.7,307.4 L866.7,307.4 L869.7,307.2 L872.7,307.0 L875.6,306.5 L878.6,306.1 L881.6,305.8 L884.6,305.7 L887.6,305.4 L890.6,305.0 L893.5,304.3 L896.5,303.7 L899.5,303.4 L902.5,303.7 L905.5,304.3 L908.4,304.8 L911.4,305.4 L914.4,305.5 L917.4,305.4 L920.4,305.0 L923.4,305.1 L926.3,305.4 L929.3,306.1 L932.3,306.6 L935.3,307.2 L938.3,307.7 L941.3,308.1 L944.2,308.4 L947.2,308.5 L950.2,309.1 L953.2,310.1 L956.2,311.1 L959.2,311.8 L962.1,312.4 L965.1,312.9 L968.1,313.4 L971.1,313.6 L974.1,313.8 L977.1,314.0 L980.0,314.2 L983.0,314.7 L986.0,315.0 L989.0,315.0" fill="none" stroke="#343434" stroke-width="0.5" stroke-dasharray="0.9,0.7"/>
</g>
<path d="M2.5,315 H994" stroke="#767676" stroke-width="1" stroke-dasharray="1.2,1.2"/>
<g>
<rect x="32.2" y="288.0" width="0.8" height="37.3" fill="#e8175d"/><rect x="31.5" y="288.0" width="2.2" height="37.3" fill="#e8175d"/>
<rect x="35.2" y="277.0" width="0.8" height="15.0" fill="#e8175d"/><rect x="34.5" y="278.0" width="2.2" height="13.7" fill="#e8175d"/>
<rect x="38.2" y="262.0" width="0.8" height="47.0" fill="#1ccbc4"/><rect x="37.5" y="278.0" width="2.2" height="30.0" fill="#1ccbc4"/>
<rect x="41.2" y="290.0" width="0.8" height="23.0" fill="#e8175d"/><rect x="40.5" y="291.7" width="2.2" height="20.9" fill="#e8175d"/>
<rect x="44.2" y="281.0" width="0.8" height="22.0" fill="#e8175d"/><rect x="43.5" y="282.6" width="2.2" height="20.0" fill="#e8175d"/>
<rect x="47.1" y="296.0" width="0.8" height="22.0" fill="#1ccbc4"/><rect x="46.4" y="298.0" width="2.2" height="16.4" fill="#1ccbc4"/>
<rect x="50.1" y="299.0" width="0.8" height="16.0" fill="#e8175d"/><rect x="49.4" y="300.0" width="2.2" height="14.0" fill="#e8175d"/>
<rect x="53.1" y="285.0" width="0.8" height="16.0" fill="#e8175d"/><rect x="52.4" y="286.0" width="2.2" height="14.0" fill="#e8175d"/>
<rect x="56.1" y="280.0" width="0.8" height="14.0" fill="#1ccbc4"/><rect x="55.4" y="281.7" width="2.2" height="10.9" fill="#1ccbc4"/>
<rect x="59.1" y="278.0" width="0.8" height="15.0" fill="#e8175d"/><rect x="58.4" y="279.0" width="2.2" height="13.6" fill="#e8175d"/>
<rect x="62.1" y="280.0" width="0.8" height="12.0" fill="#1ccbc4"/><rect x="61.4" y="281.7" width="2.2" height="9.1" fill="#1ccbc4"/>
<rect x="65.0" y="268.0" width="0.8" height="16.0" fill="#e8175d"/><rect x="64.3" y="269.0" width="2.2" height="14.5" fill="#e8175d"/>
<rect x="68.0" y="264.0" width="0.8" height="12.0" fill="#e8175d"/><rect x="67.3" y="265.4" width="2.2" height="9.1" fill="#e8175d"/>
<rect x="71.0" y="260.0" width="0.8" height="13.0" fill="#e8175d"/><rect x="70.3" y="261.8" width="2.2" height="10.0" fill="#e8175d"/>
<rect x="74.0" y="255.0" width="0.8" height="15.0" fill="#e8175d"/><rect x="73.3" y="256.3" width="2.2" height="12.7" fill="#e8175d"/>
<rect x="77.0" y="258.0" width="0.8" height="18.0" fill="#1ccbc4"/><rect x="76.3" y="260.0" width="2.2" height="14.5" fill="#1ccbc4"/>
<rect x="80.0" y="260.0" width="0.8" height="9.0" fill="#e8175d"/><rect x="79.3" y="261.8" width="2.2" height="5.4" fill="#e8175d"/>
<rect x="82.9" y="254.0" width="0.8" height="14.0" fill="#1ccbc4"/><rect x="82.2" y="256.0" width="2.2" height="11.0" fill="#1ccbc4"/>
<rect x="85.9" y="253.6" width="0.8" height="16.4" fill="#1ccbc4"/><rect x="85.2" y="261.8" width="2.2" height="7.2" fill="#1ccbc4"/>
<rect x="88.9" y="269.0" width="0.8" height="5.7" fill="#1ccbc4"/><rect x="88.2" y="269.0" width="2.2" height="3.1" fill="#1ccbc4"/>
<rect x="91.9" y="272.1" width="0.8" height="5.3" fill="#e8175d"/><rect x="91.2" y="272.1" width="2.2" height="1.0" fill="#e8175d"/>
<rect x="94.9" y="263.5" width="0.8" height="13.9" fill="#e8175d"/><rect x="94.2" y="268.8" width="2.2" height="3.3" fill="#e8175d"/>
<rect x="97.9" y="268.8" width="0.8" height="13.2" fill="#1ccbc4"/><rect x="97.2" y="268.8" width="2.2" height="13.2" fill="#1ccbc4"/>
<rect x="100.8" y="266.8" width="0.8" height="17.8" fill="#e8175d"/><rect x="100.1" y="272.1" width="2.2" height="9.9" fill="#e8175d"/>
<rect x="103.8" y="269.5" width="0.8" height="12.5" fill="#1ccbc4"/><rect x="103.1" y="272.1" width="2.2" height="9.9" fill="#1ccbc4"/>
<rect x="106.8" y="266.8" width="0.8" height="17.8" fill="#e8175d"/><rect x="106.1" y="272.1" width="2.2" height="9.9" fill="#e8175d"/>
<rect x="109.8" y="266.8" width="0.8" height="7.9" fill="#e8175d"/><rect x="109.1" y="272.1" width="2.2" height="1.0" fill="#e8175d"/>
<rect x="112.8" y="256.3" width="0.8" height="15.8" fill="#e8175d"/><rect x="112.1" y="258.9" width="2.2" height="13.2" fill="#e8175d"/>
<rect x="115.8" y="255.6" width="0.8" height="5.9" fill="#e8175d"/><rect x="115.1" y="255.6" width="2.2" height="3.3" fill="#e8175d"/>
<rect x="118.7" y="255.6" width="0.8" height="8.6" fill="#1ccbc4"/><rect x="118.0" y="255.6" width="2.2" height="3.3" fill="#1ccbc4"/>
<rect x="121.7" y="249.0" width="0.8" height="15.2" fill="#e8175d"/><rect x="121.0" y="249.0" width="2.2" height="9.9" fill="#e8175d"/>
<rect x="124.7" y="243.1" width="0.8" height="11.2" fill="#e8175d"/><rect x="124.0" y="245.7" width="2.2" height="3.3" fill="#e8175d"/>
<rect x="127.7" y="239.1" width="0.8" height="11.9" fill="#e8175d"/><rect x="127.0" y="239.1" width="2.2" height="6.6" fill="#e8175d"/>
<rect x="130.7" y="239.1" width="0.8" height="0.5" fill="#e8175d"/><rect x="130.0" y="239.1" width="2.2" height="1.0" fill="#e8175d"/>
<rect x="133.7" y="239.1" width="0.8" height="2.6" fill="#e8175d"/><rect x="133.0" y="239.1" width="2.2" height="1.0" fill="#e8175d"/>
<rect x="136.6" y="229.9" width="0.8" height="11.9" fill="#e8175d"/><rect x="135.9" y="232.5" width="2.2" height="6.6" fill="#e8175d"/>
<rect x="139.6" y="222.6" width="0.8" height="9.9" fill="#e8175d"/><rect x="138.9" y="222.6" width="2.2" height="9.9" fill="#e8175d"/>
<rect x="142.6" y="206.8" width="0.8" height="21.1" fill="#e8175d"/><rect x="141.9" y="209.4" width="2.2" height="13.2" fill="#e8175d"/>
<rect x="145.6" y="206.8" width="0.8" height="9.2" fill="#1ccbc4"/><rect x="144.9" y="209.4" width="2.2" height="6.6" fill="#1ccbc4"/>
<rect x="148.6" y="213.4" width="0.8" height="5.9" fill="#1ccbc4"/><rect x="147.9" y="216.0" width="2.2" height="3.3" fill="#1ccbc4"/>
<rect x="151.6" y="206.8" width="0.8" height="12.5" fill="#e8175d"/><rect x="150.9" y="209.4" width="2.2" height="9.9" fill="#e8175d"/>
<rect x="154.5" y="209.4" width="0.8" height="9.9" fill="#1ccbc4"/><rect x="153.8" y="209.4" width="2.2" height="9.9" fill="#1ccbc4"/>
<rect x="157.5" y="216.0" width="0.8" height="5.9" fill="#e8175d"/><rect x="156.8" y="216.0" width="2.2" height="3.3" fill="#e8175d"/>
<rect x="160.5" y="216.0" width="0.8" height="2.6" fill="#e8175d"/><rect x="159.8" y="216.0" width="2.2" height="1.0" fill="#e8175d"/>
<rect x="163.5" y="207.4" width="0.8" height="11.2" fill="#e8175d"/><rect x="162.8" y="212.7" width="2.2" height="3.3" fill="#e8175d"/>
<rect x="166.5" y="210.1" width="0.8" height="2.6" fill="#e8175d"/><rect x="165.8" y="212.7" width="2.2" height="1.0" fill="#e8175d"/>
<rect x="169.4" y="210.1" width="0.8" height="5.3" fill="#e8175d"/><rect x="168.7" y="212.7" width="2.2" height="1.0" fill="#e8175d"/>
<rect x="172.4" y="202.8" width="0.8" height="9.9" fill="#e8175d"/><rect x="171.7" y="202.8" width="2.2" height="9.9" fill="#e8175d"/>
<rect x="175.4" y="200.2" width="0.8" height="5.9" fill="#1ccbc4"/><rect x="174.7" y="202.8" width="2.2" height="3.3" fill="#1ccbc4"/>
<rect x="178.4" y="200.2" width="0.8" height="11.2" fill="#e8175d"/><rect x="177.7" y="202.8" width="2.2" height="3.3" fill="#e8175d"/>
<rect x="181.4" y="202.8" width="0.8" height="11.9" fill="#1ccbc4"/><rect x="180.7" y="202.8" width="2.2" height="6.6" fill="#1ccbc4"/>
<rect x="184.4" y="206.8" width="0.8" height="9.2" fill="#1ccbc4"/><rect x="183.7" y="209.4" width="2.2" height="6.6" fill="#1ccbc4"/>
<rect x="187.3" y="212.7" width="0.8" height="3.3" fill="#e8175d"/><rect x="186.6" y="212.7" width="2.2" height="3.3" fill="#e8175d"/>
<rect x="190.3" y="206.1" width="0.8" height="6.6" fill="#e8175d"/><rect x="189.6" y="206.1" width="2.2" height="6.6" fill="#e8175d"/>
<rect x="193.3" y="206.1" width="0.8" height="9.2" fill="#1ccbc4"/><rect x="192.6" y="206.1" width="2.2" height="6.6" fill="#1ccbc4"/>
<rect x="196.3" y="210.1" width="0.8" height="5.3" fill="#e8175d"/><rect x="195.6" y="212.7" width="2.2" height="1.0" fill="#e8175d"/>
<rect x="199.3" y="212.7" width="0.8" height="0.5" fill="#e8175d"/><rect x="198.6" y="212.7" width="2.2" height="1.0" fill="#e8175d"/>
<rect x="202.3" y="204.1" width="0.8" height="8.6" fill="#e8175d"/><rect x="201.6" y="209.4" width="2.2" height="3.3" fill="#e8175d"/>
<rect x="205.2" y="206.1" width="0.8" height="5.9" fill="#e8175d"/><rect x="204.5" y="206.1" width="2.2" height="3.3" fill="#e8175d"/>
<rect x="208.2" y="206.1" width="0.8" height="0.5" fill="#e8175d"/><rect x="207.5" y="206.1" width="2.2" height="1.0" fill="#e8175d"/>
<rect x="211.2" y="196.2" width="0.8" height="9.9" fill="#e8175d"/><rect x="210.5" y="196.2" width="2.2" height="9.9" fill="#e8175d"/>
<rect x="214.2" y="196.2" width="0.8" height="8.6" fill="#1ccbc4"/><rect x="213.5" y="196.2" width="2.2" height="3.3" fill="#1ccbc4"/>
<rect x="217.2" y="193.6" width="0.8" height="5.9" fill="#e8175d"/><rect x="216.5" y="196.2" width="2.2" height="3.3" fill="#e8175d"/>
<rect x="220.2" y="192.9" width="0.8" height="3.3" fill="#e8175d"/><rect x="219.5" y="192.9" width="2.2" height="3.3" fill="#e8175d"/>
<rect x="223.1" y="189.6" width="0.8" height="3.3" fill="#e8175d"/><rect x="222.4" y="189.6" width="2.2" height="3.3" fill="#e8175d"/>
<rect x="226.1" y="186.3" width="0.8" height="6.6" fill="#1ccbc4"/><rect x="225.4" y="189.6" width="2.2" height="3.3" fill="#1ccbc4"/>
<rect x="229.1" y="190.3" width="0.8" height="5.3" fill="#e8175d"/><rect x="228.4" y="192.9" width="2.2" height="1.0" fill="#e8175d"/>
<rect x="232.1" y="187.0" width="0.8" height="5.9" fill="#e8175d"/><rect x="231.4" y="189.6" width="2.2" height="3.3" fill="#e8175d"/>
<rect x="235.1" y="187.0" width="0.8" height="5.9" fill="#1ccbc4"/><rect x="234.4" y="189.6" width="2.2" height="3.3" fill="#1ccbc4"/>
<rect x="238.1" y="186.3" width="0.8" height="9.9" fill="#1ccbc4"/><rect x="237.4" y="192.9" width="2.2" height="3.3" fill="#1ccbc4"/>
<rect x="241.0" y="186.3" width="0.8" height="9.9" fill="#e8175d"/><rect x="240.3" y="189.6" width="2.2" height="6.6" fill="#e8175d"/>
<rect x="244.0" y="186.3" width="0.8" height="0.5" fill="#e8175d"/><rect x="243.3" y="189.6" width="2.2" height="1.0" fill="#e8175d"/>
<rect x="247.0" y="186.3" width="0.8" height="3.3" fill="#e8175d"/><rect x="246.3" y="189.6" width="2.2" height="1.0" fill="#e8175d"/>
<rect x="250.0" y="187.0" width="0.8" height="11.9" fill="#1ccbc4"/><rect x="249.3" y="189.6" width="2.2" height="6.6" fill="#1ccbc4"/>
<rect x="253.0" y="196.2" width="0.8" height="2.6" fill="#e8175d"/><rect x="252.3" y="196.2" width="2.2" height="1.0" fill="#e8175d"/>
<rect x="256.0" y="196.2" width="0.8" height="2.6" fill="#e8175d"/><rect x="255.3" y="196.2" width="2.2" height="1.0" fill="#e8175d"/>
<rect x="258.9" y="196.2" width="0.8" height="0.5" fill="#e8175d"/><rect x="258.2" y="196.2" width="2.2" height="1.0" fill="#e8175d"/>
<rect x="261.9" y="192.9" width="0.8" height="3.3" fill="#e8175d"/><rect x="261.2" y="192.9" width="2.2" height="3.3" fill="#e8175d"/>
<rect x="264.9" y="190.3" width="0.8" height="7.9" fill="#e8175d"/><rect x="264.2" y="192.9" width="2.2" height="1.0" fill="#e8175d"/>
<rect x="267.9" y="187.6" width="0.8" height="5.3" fill="#e8175d"/><rect x="267.2" y="192.9" width="2.2" height="1.0" fill="#e8175d"/>
<rect x="270.9" y="190.3" width="0.8" height="5.3" fill="#e8175d"/><rect x="270.2" y="192.9" width="2.2" height="1.0" fill="#e8175d"/>
<rect x="273.9" y="189.6" width="0.8" height="3.3" fill="#e8175d"/><rect x="273.2" y="189.6" width="2.2" height="3.3" fill="#e8175d"/>
<rect x="276.8" y="189.6" width="0.8" height="5.9" fill="#1ccbc4"/><rect x="276.1" y="189.6" width="2.2" height="3.3" fill="#1ccbc4"/>
<rect x="279.8" y="190.3" width="0.8" height="2.6" fill="#e8175d"/><rect x="279.1" y="192.9" width="2.2" height="1.0" fill="#e8175d"/>
<rect x="282.8" y="187.6" width="0.8" height="11.2" fill="#1ccbc4"/><rect x="282.1" y="192.9" width="2.2" height="3.3" fill="#1ccbc4"/>
<rect x="285.8" y="190.3" width="0.8" height="5.9" fill="#e8175d"/><rect x="285.1" y="192.9" width="2.2" height="3.3" fill="#e8175d"/>
<rect x="288.8" y="186.3" width="0.8" height="6.6" fill="#e8175d"/><rect x="288.1" y="189.6" width="2.2" height="3.3" fill="#e8175d"/>
<rect x="291.8" y="186.3" width="0.8" height="6.6" fill="#1ccbc4"/><rect x="291.1" y="189.6" width="2.2" height="3.3" fill="#1ccbc4"/>
<rect x="294.7" y="187.6" width="0.8" height="11.9" fill="#1ccbc4"/><rect x="294.0" y="192.9" width="2.2" height="6.6" fill="#1ccbc4"/>
<rect x="297.7" y="196.9" width="0.8" height="8.6" fill="#1ccbc4"/><rect x="297.0" y="199.5" width="2.2" height="3.3" fill="#1ccbc4"/>
<rect x="300.7" y="202.8" width="0.8" height="3.3" fill="#1ccbc4"/><rect x="300.0" y="202.8" width="2.2" height="3.3" fill="#1ccbc4"/>
<rect x="303.7" y="206.1" width="0.8" height="0.5" fill="#e8175d"/><rect x="303.0" y="206.1" width="2.2" height="1.0" fill="#e8175d"/>
<rect x="306.7" y="206.1" width="0.8" height="3.3" fill="#1ccbc4"/><rect x="306.0" y="206.1" width="2.2" height="3.3" fill="#1ccbc4"/>
<rect x="309.6" y="209.4" width="0.8" height="6.6" fill="#1ccbc4"/><rect x="308.9" y="209.4" width="2.2" height="6.6" fill="#1ccbc4"/>
<rect x="312.6" y="212.7" width="0.8" height="3.3" fill="#e8175d"/><rect x="311.9" y="212.7" width="2.2" height="3.3" fill="#e8175d"/>
<rect x="315.6" y="210.1" width="0.8" height="11.2" fill="#1ccbc4"/><rect x="314.9" y="212.7" width="2.2" height="3.3" fill="#1ccbc4"/>
<rect x="318.6" y="210.1" width="0.8" height="8.6" fill="#e8175d"/><rect x="317.9" y="212.7" width="2.2" height="3.3" fill="#e8175d"/>
<rect x="321.6" y="212.7" width="0.8" height="8.6" fill="#1ccbc4"/><rect x="320.9" y="212.7" width="2.2" height="3.3" fill="#1ccbc4"/>
<rect x="324.6" y="213.4" width="0.8" height="7.9" fill="#e8175d"/><rect x="323.9" y="216.0" width="2.2" height="1.0" fill="#e8175d"/>
<rect x="327.5" y="216.0" width="0.8" height="9.9" fill="#1ccbc4"/><rect x="326.8" y="216.0" width="2.2" height="9.9" fill="#1ccbc4"/>
<rect x="330.5" y="225.9" width="0.8" height="3.3" fill="#1ccbc4"/><rect x="329.8" y="225.9" width="2.2" height="3.3" fill="#1ccbc4"/>
<rect x="333.5" y="223.9" width="0.8" height="11.2" fill="#1ccbc4"/><rect x="332.8" y="229.2" width="2.2" height="3.3" fill="#1ccbc4"/>
<rect x="336.5" y="229.9" width="0.8" height="5.9" fill="#1ccbc4"/><rect x="335.8" y="232.5" width="2.2" height="3.3" fill="#1ccbc4"/>
<rect x="339.5" y="230.5" width="0.8" height="8.6" fill="#1ccbc4"/><rect x="338.8" y="235.8" width="2.2" height="3.3" fill="#1ccbc4"/>
<rect x="342.5" y="239.1" width="0.8" height="5.9" fill="#1ccbc4"/><rect x="341.8" y="239.1" width="2.2" height="3.3" fill="#1ccbc4"/>
<rect x="345.4" y="239.1" width="0.8" height="3.3" fill="#e8175d"/><rect x="344.7" y="239.1" width="2.2" height="3.3" fill="#e8175d"/>
<rect x="348.4" y="236.5" width="0.8" height="8.6" fill="#1ccbc4"/><rect x="347.7" y="239.1" width="2.2" height="3.3" fill="#1ccbc4"/>
<rect x="351.4" y="242.4" width="0.8" height="0.5" fill="#e8175d"/><rect x="350.7" y="242.4" width="2.2" height="1.0" fill="#e8175d"/>
<rect x="354.4" y="242.4" width="0.8" height="2.6" fill="#e8175d"/><rect x="353.7" y="242.4" width="2.2" height="1.0" fill="#e8175d"/>
<rect x="357.4" y="235.8" width="0.8" height="6.6" fill="#e8175d"/><rect x="356.7" y="235.8" width="2.2" height="6.6" fill="#e8175d"/>
<rect x="360.4" y="235.8" width="0.8" height="3.3" fill="#1ccbc4"/><rect x="359.7" y="235.8" width="2.2" height="3.3" fill="#1ccbc4"/>
<rect x="363.3" y="239.1" width="0.8" height="0.5" fill="#e8175d"/><rect x="362.6" y="239.1" width="2.2" height="1.0" fill="#e8175d"/>
<rect x="366.3" y="227.2" width="0.8" height="11.9" fill="#e8175d"/><rect x="365.6" y="232.5" width="2.2" height="6.6" fill="#e8175d"/>
<rect x="369.3" y="232.5" width="0.8" height="2.6" fill="#e8175d"/><rect x="368.6" y="232.5" width="2.2" height="1.0" fill="#e8175d"/>
<rect x="372.3" y="232.5" width="0.8" height="0.5" fill="#e8175d"/><rect x="371.6" y="232.5" width="2.2" height="1.0" fill="#e8175d"/>
<rect x="375.3" y="229.2" width="0.8" height="3.3" fill="#e8175d"/><rect x="374.6" y="229.2" width="2.2" height="3.3" fill="#e8175d"/>
<rect x="378.3" y="226.6" width="0.8" height="7.9" fill="#e8175d"/><rect x="377.6" y="229.2" width="2.2" height="1.0" fill="#e8175d"/>
<rect x="381.2" y="223.9" width="0.8" height="5.3" fill="#e8175d"/><rect x="380.5" y="229.2" width="2.2" height="1.0" fill="#e8175d"/>
<rect x="384.2" y="229.2" width="0.8" height="3.3" fill="#1ccbc4"/><rect x="383.5" y="229.2" width="2.2" height="3.3" fill="#1ccbc4"/>
<rect x="387.2" y="232.5" width="0.8" height="3.3" fill="#1ccbc4"/><rect x="386.5" y="232.5" width="2.2" height="3.3" fill="#1ccbc4"/>
<rect x="390.2" y="235.8" width="0.8" height="5.9" fill="#1ccbc4"/><rect x="389.5" y="235.8" width="2.2" height="3.3" fill="#1ccbc4"/>
<rect x="393.2" y="236.5" width="0.8" height="5.3" fill="#e8175d"/><rect x="392.5" y="239.1" width="2.2" height="1.0" fill="#e8175d"/>
<rect x="396.2" y="239.1" width="0.8" height="3.3" fill="#1ccbc4"/><rect x="395.5" y="239.1" width="2.2" height="3.3" fill="#1ccbc4"/>
<rect x="399.1" y="236.5" width="0.8" height="5.9" fill="#e8175d"/><rect x="398.4" y="239.1" width="2.2" height="3.3" fill="#e8175d"/>
<rect x="402.1" y="236.5" width="0.8" height="9.2" fill="#1ccbc4"/><rect x="401.4" y="239.1" width="2.2" height="6.6" fill="#1ccbc4"/>
<rect x="405.1" y="245.7" width="0.8" height="3.3" fill="#1ccbc4"/><rect x="404.4" y="245.7" width="2.2" height="3.3" fill="#1ccbc4"/>
<rect x="408.1" y="245.7" width="0.8" height="3.3" fill="#e8175d"/><rect x="407.4" y="245.7" width="2.2" height="3.3" fill="#e8175d"/>
<rect x="411.1" y="240.4" width="0.8" height="13.9" fill="#1ccbc4"/><rect x="410.4" y="245.7" width="2.2" height="3.3" fill="#1ccbc4"/>
<rect x="414.1" y="246.4" width="0.8" height="5.3" fill="#e8175d"/><rect x="413.4" y="249.0" width="2.2" height="1.0" fill="#e8175d"/>
<rect x="417.0" y="239.1" width="0.8" height="12.5" fill="#e8175d"/><rect x="416.3" y="239.1" width="2.2" height="9.9" fill="#e8175d"/>
<rect x="420.0" y="239.1" width="0.8" height="3.3" fill="#1ccbc4"/><rect x="419.3" y="239.1" width="2.2" height="3.3" fill="#1ccbc4"/>
<rect x="423.0" y="239.1" width="0.8" height="3.3" fill="#e8175d"/><rect x="422.3" y="239.1" width="2.2" height="3.3" fill="#e8175d"/>
<rect x="426.0" y="233.8" width="0.8" height="8.6" fill="#1ccbc4"/><rect x="425.3" y="239.1" width="2.2" height="3.3" fill="#1ccbc4"/>
<rect x="429.0" y="239.8" width="0.8" height="5.9" fill="#1ccbc4"/><rect x="428.3" y="242.4" width="2.2" height="3.3" fill="#1ccbc4"/>
<rect x="432.0" y="245.7" width="0.8" height="5.3" fill="#e8175d"/><rect x="431.3" y="245.7" width="2.2" height="1.0" fill="#e8175d"/>
<rect x="434.9" y="237.1" width="0.8" height="8.6" fill="#e8175d"/><rect x="434.2" y="242.4" width="2.2" height="3.3" fill="#e8175d"/>
<rect x="437.9" y="242.4" width="0.8" height="5.3" fill="#e8175d"/><rect x="437.2" y="242.4" width="2.2" height="1.0" fill="#e8175d"/>
<rect x="440.9" y="242.4" width="0.8" height="3.3" fill="#1ccbc4"/><rect x="440.2" y="242.4" width="2.2" height="3.3" fill="#1ccbc4"/>
<rect x="443.9" y="245.7" width="0.8" height="0.5" fill="#e8175d"/><rect x="443.2" y="245.7" width="2.2" height="1.0" fill="#e8175d"/>
<rect x="446.9" y="243.1" width="0.8" height="9.2" fill="#1ccbc4"/><rect x="446.2" y="245.7" width="2.2" height="6.6" fill="#1ccbc4"/>
<rect x="449.9" y="249.0" width="0.8" height="3.3" fill="#e8175d"/><rect x="449.1" y="249.0" width="2.2" height="3.3" fill="#e8175d"/>
<rect x="452.8" y="249.0" width="0.8" height="6.6" fill="#1ccbc4"/><rect x="452.1" y="249.0" width="2.2" height="6.6" fill="#1ccbc4"/>
<rect x="455.8" y="252.3" width="0.8" height="3.3" fill="#e8175d"/><rect x="455.1" y="252.3" width="2.2" height="3.3" fill="#e8175d"/>
<rect x="458.8" y="252.3" width="0.8" height="3.3" fill="#1ccbc4"/><rect x="458.1" y="252.3" width="2.2" height="3.3" fill="#1ccbc4"/>
<rect x="461.8" y="255.6" width="0.8" height="0.5" fill="#e8175d"/><rect x="461.1" y="255.6" width="2.2" height="1.0" fill="#e8175d"/>
<rect x="464.8" y="255.6" width="0.8" height="0.5" fill="#e8175d"/><rect x="464.1" y="255.6" width="2.2" height="1.0" fill="#e8175d"/>
<rect x="467.7" y="255.6" width="0.8" height="9.9" fill="#1ccbc4"/><rect x="467.0" y="255.6" width="2.2" height="9.9" fill="#1ccbc4"/>
<rect x="470.7" y="265.5" width="0.8" height="0.5" fill="#e8175d"/><rect x="470.0" y="265.5" width="2.2" height="1.0" fill="#e8175d"/>
<rect x="473.7" y="265.5" width="0.8" height="3.3" fill="#1ccbc4"/><rect x="473.0" y="265.5" width="2.2" height="3.3" fill="#1ccbc4"/>
<rect x="476.7" y="268.8" width="0.8" height="0.5" fill="#e8175d"/><rect x="476.0" y="268.8" width="2.2" height="1.0" fill="#e8175d"/>
<rect x="479.7" y="268.8" width="0.8" height="3.3" fill="#1ccbc4"/><rect x="479.0" y="268.8" width="2.2" height="3.3" fill="#1ccbc4"/>
<rect x="482.7" y="268.8" width="0.8" height="3.3" fill="#e8175d"/><rect x="482.0" y="268.8" width="2.2" height="3.3" fill="#e8175d"/>
<rect x="485.6" y="262.9" width="0.8" height="5.9" fill="#e8175d"/><rect x="484.9" y="265.5" width="2.2" height="3.3" fill="#e8175d"/>
<rect x="488.6" y="265.5" width="0.8" height="6.6" fill="#1ccbc4"/><rect x="487.9" y="265.5" width="2.2" height="6.6" fill="#1ccbc4"/>
<rect x="491.6" y="265.5" width="0.8" height="6.6" fill="#e8175d"/><rect x="490.9" y="265.5" width="2.2" height="6.6" fill="#e8175d"/>
<rect x="494.6" y="265.5" width="0.8" height="0.5" fill="#e8175d"/><rect x="493.9" y="265.5" width="2.2" height="1.0" fill="#e8175d"/>
<rect x="497.6" y="265.5" width="0.8" height="0.5" fill="#e8175d"/><rect x="496.9" y="265.5" width="2.2" height="1.0" fill="#e8175d"/>
<rect x="500.6" y="262.2" width="0.8" height="3.3" fill="#e8175d"/><rect x="499.9" y="262.2" width="2.2" height="3.3" fill="#e8175d"/>
<rect x="503.5" y="262.2" width="0.8" height="3.3" fill="#1ccbc4"/><rect x="502.8" y="262.2" width="2.2" height="3.3" fill="#1ccbc4"/>
<rect x="506.5" y="262.2" width="0.8" height="3.3" fill="#e8175d"/><rect x="505.8" y="262.2" width="2.2" height="3.3" fill="#e8175d"/>
<rect x="509.5" y="259.6" width="0.8" height="2.6" fill="#e8175d"/><rect x="508.8" y="262.2" width="2.2" height="1.0" fill="#e8175d"/>
<rect x="512.5" y="262.2" width="0.8" height="0.5" fill="#e8175d"/><rect x="511.8" y="262.2" width="2.2" height="1.0" fill="#e8175d"/>
<rect x="515.5" y="262.2" width="0.8" height="3.3" fill="#1ccbc4"/><rect x="514.8" y="262.2" width="2.2" height="3.3" fill="#1ccbc4"/>
<rect x="518.5" y="265.5" width="0.8" height="2.6" fill="#e8175d"/><rect x="517.8" y="265.5" width="2.2" height="1.0" fill="#e8175d"/>
<rect x="521.4" y="262.9" width="0.8" height="2.6" fill="#e8175d"/><rect x="520.7" y="265.5" width="2.2" height="1.0" fill="#e8175d"/>
<rect x="524.4" y="265.5" width="0.8" height="2.6" fill="#e8175d"/><rect x="523.7" y="265.5" width="2.2" height="1.0" fill="#e8175d"/>
<rect x="527.4" y="262.9" width="0.8" height="2.6" fill="#e8175d"/><rect x="526.7" y="265.5" width="2.2" height="1.0" fill="#e8175d"/>
<rect x="530.4" y="265.5" width="0.8" height="2.6" fill="#e8175d"/><rect x="529.7" y="265.5" width="2.2" height="1.0" fill="#e8175d"/>
<rect x="533.4" y="265.5" width="0.8" height="3.3" fill="#1ccbc4"/><rect x="532.7" y="265.5" width="2.2" height="3.3" fill="#1ccbc4"/>
<rect x="536.4" y="262.9" width="0.8" height="5.9" fill="#e8175d"/><rect x="535.7" y="265.5" width="2.2" height="3.3" fill="#e8175d"/>
<rect x="539.3" y="265.5" width="0.8" height="0.5" fill="#e8175d"/><rect x="538.6" y="265.5" width="2.2" height="1.0" fill="#e8175d"/>
<rect x="542.3" y="265.5" width="0.8" height="2.6" fill="#e8175d"/><rect x="541.6" y="265.5" width="2.2" height="1.0" fill="#e8175d"/>
<rect x="545.3" y="265.5" width="0.8" height="0.5" fill="#e8175d"/><rect x="544.6" y="265.5" width="2.2" height="1.0" fill="#e8175d"/>
<rect x="548.3" y="265.5" width="0.8" height="0.5" fill="#e8175d"/><rect x="547.6" y="265.5" width="2.2" height="1.0" fill="#e8175d"/>
<rect x="551.3" y="262.9" width="0.8" height="2.6" fill="#e8175d"/><rect x="550.6" y="265.5" width="2.2" height="1.0" fill="#e8175d"/>
<rect x="554.3" y="265.5" width="0.8" height="0.5" fill="#e8175d"/><rect x="553.6" y="265.5" width="2.2" height="1.0" fill="#e8175d"/>
<rect x="557.2" y="265.5" width="0.8" height="0.5" fill="#e8175d"/><rect x="556.5" y="265.5" width="2.2" height="1.0" fill="#e8175d"/>
<rect x="560.2" y="262.2" width="0.8" height="3.3" fill="#e8175d"/><rect x="559.5" y="262.2" width="2.2" height="3.3" fill="#e8175d"/>
<rect x="563.2" y="259.6" width="0.8" height="5.9" fill="#1ccbc4"/><rect x="562.5" y="262.2" width="2.2" height="3.3" fill="#1ccbc4"/>
<rect x="566.2" y="262.2" width="0.8" height="5.9" fill="#e8175d"/><rect x="565.5" y="262.2" width="2.2" height="3.3" fill="#e8175d"/>
<rect x="569.2" y="262.2" width="0.8" height="3.3" fill="#1ccbc4"/><rect x="568.5" y="262.2" width="2.2" height="3.3" fill="#1ccbc4"/>
<rect x="572.2" y="265.5" width="0.8" height="3.3" fill="#1ccbc4"/><rect x="571.5" y="265.5" width="2.2" height="3.3" fill="#1ccbc4"/>
<rect x="575.1" y="262.9" width="0.8" height="8.6" fill="#e8175d"/><rect x="574.4" y="265.5" width="2.2" height="3.3" fill="#e8175d"/>
<rect x="578.1" y="265.5" width="0.8" height="3.3" fill="#1ccbc4"/><rect x="577.4" y="265.5" width="2.2" height="3.3" fill="#1ccbc4"/>
<rect x="581.1" y="268.8" width="0.8" height="0.5" fill="#e8175d"/><rect x="580.4" y="268.8" width="2.2" height="1.0" fill="#e8175d"/>
<rect x="584.1" y="262.9" width="0.8" height="5.9" fill="#e8175d"/><rect x="583.4" y="265.5" width="2.2" height="3.3" fill="#e8175d"/>
<rect x="587.1" y="265.5" width="0.8" height="0.5" fill="#e8175d"/><rect x="586.4" y="265.5" width="2.2" height="1.0" fill="#e8175d"/>
<rect x="590.1" y="262.2" width="0.8" height="3.3" fill="#e8175d"/><rect x="589.4" y="262.2" width="2.2" height="3.3" fill="#e8175d"/>
<rect x="593.0" y="253.0" width="0.8" height="9.2" fill="#e8175d"/><rect x="592.3" y="255.6" width="2.2" height="6.6" fill="#e8175d"/>
<rect x="596.0" y="255.6" width="0.8" height="0.5" fill="#e8175d"/><rect x="595.3" y="255.6" width="2.2" height="1.0" fill="#e8175d"/>
<rect x="599.0" y="255.6" width="0.8" height="3.3" fill="#1ccbc4"/><rect x="598.3" y="255.6" width="2.2" height="3.3" fill="#1ccbc4"/>
<rect x="602.0" y="258.9" width="0.8" height="2.6" fill="#e8175d"/><rect x="601.3" y="258.9" width="2.2" height="1.0" fill="#e8175d"/>
<rect x="605.0" y="256.3" width="0.8" height="8.6" fill="#1ccbc4"/><rect x="604.3" y="258.9" width="2.2" height="3.3" fill="#1ccbc4"/>
<rect x="607.9" y="259.6" width="0.8" height="2.6" fill="#e8175d"/><rect x="607.2" y="262.2" width="2.2" height="1.0" fill="#e8175d"/>
<rect x="610.9" y="258.9" width="0.8" height="5.9" fill="#e8175d"/><rect x="610.2" y="258.9" width="2.2" height="3.3" fill="#e8175d"/>
<rect x="613.9" y="256.3" width="0.8" height="2.6" fill="#e8175d"/><rect x="613.2" y="258.9" width="2.2" height="1.0" fill="#e8175d"/>
<rect x="616.9" y="256.3" width="0.8" height="5.3" fill="#e8175d"/><rect x="616.2" y="258.9" width="2.2" height="1.0" fill="#e8175d"/>
<rect x="619.9" y="256.3" width="0.8" height="5.9" fill="#1ccbc4"/><rect x="619.2" y="258.9" width="2.2" height="3.3" fill="#1ccbc4"/>
<rect x="622.9" y="262.2" width="0.8" height="3.3" fill="#1ccbc4"/><rect x="622.2" y="262.2" width="2.2" height="3.3" fill="#1ccbc4"/>
<rect x="625.8" y="265.5" width="0.8" height="2.6" fill="#e8175d"/><rect x="625.1" y="265.5" width="2.2" height="1.0" fill="#e8175d"/>
<rect x="628.8" y="265.5" width="0.8" height="0.5" fill="#e8175d"/><rect x="628.1" y="265.5" width="2.2" height="1.0" fill="#e8175d"/>
<rect x="631.8" y="262.9" width="0.8" height="2.6" fill="#e8175d"/><rect x="631.1" y="265.5" width="2.2" height="1.0" fill="#e8175d"/>
<rect x="634.8" y="265.5" width="0.8" height="0.5" fill="#e8175d"/><rect x="634.1" y="265.5" width="2.2" height="1.0" fill="#e8175d"/>
<rect x="637.8" y="265.5" width="0.8" height="0.5" fill="#e8175d"/><rect x="637.1" y="265.5" width="2.2" height="1.0" fill="#e8175d"/>
<rect x="640.8" y="262.9" width="0.8" height="2.6" fill="#e8175d"/><rect x="640.1" y="265.5" width="2.2" height="1.0" fill="#e8175d"/>
<rect x="643.7" y="265.5" width="0.8" height="3.3" fill="#1ccbc4"/><rect x="643.0" y="265.5" width="2.2" height="3.3" fill="#1ccbc4"/>
<rect x="646.7" y="268.8" width="0.8" height="0.5" fill="#e8175d"/><rect x="646.0" y="268.8" width="2.2" height="1.0" fill="#e8175d"/>
<rect x="649.7" y="268.8" width="0.8" height="0.5" fill="#e8175d"/><rect x="649.0" y="268.8" width="2.2" height="1.0" fill="#e8175d"/>
<rect x="652.7" y="268.8" width="0.8" height="0.5" fill="#e8175d"/><rect x="652.0" y="268.8" width="2.2" height="1.0" fill="#e8175d"/>
<rect x="655.7" y="268.8" width="0.8" height="0.5" fill="#e8175d"/><rect x="655.0" y="268.8" width="2.2" height="1.0" fill="#e8175d"/>
<rect x="658.7" y="268.8" width="0.8" height="2.6" fill="#e8175d"/><rect x="658.0" y="268.8" width="2.2" height="1.0" fill="#e8175d"/>
<rect x="661.6" y="268.8" width="0.8" height="2.6" fill="#e8175d"/><rect x="660.9" y="268.8" width="2.2" height="1.0" fill="#e8175d"/>
<rect x="664.6" y="268.8" width="0.8" height="6.6" fill="#1ccbc4"/><rect x="663.9" y="268.8" width="2.2" height="6.6" fill="#1ccbc4"/>
<rect x="667.6" y="275.4" width="0.8" height="9.9" fill="#1ccbc4"/><rect x="666.9" y="275.4" width="2.2" height="9.9" fill="#1ccbc4"/>
<rect x="670.6" y="285.3" width="0.8" height="8.2" fill="#1ccbc4"/><rect x="669.9" y="285.3" width="2.2" height="8.2" fill="#1ccbc4"/>
<rect x="673.6" y="293.6" width="0.8" height="3.3" fill="#1ccbc4"/><rect x="672.9" y="293.6" width="2.2" height="3.3" fill="#1ccbc4"/>
<rect x="676.6" y="295.5" width="0.8" height="4.6" fill="#1ccbc4"/><rect x="675.9" y="296.9" width="2.2" height="3.3" fill="#1ccbc4"/>
<rect x="679.5" y="300.1" width="0.8" height="0.5" fill="#e8175d"/><rect x="678.8" y="300.1" width="2.2" height="1.0" fill="#e8175d"/>
<rect x="682.5" y="291.9" width="0.8" height="8.2" fill="#e8175d"/><rect x="681.8" y="291.9" width="2.2" height="8.2" fill="#e8175d"/>
<rect x="685.5" y="283.6" width="0.8" height="8.2" fill="#e8175d"/><rect x="684.8" y="283.6" width="2.2" height="8.2" fill="#e8175d"/>
<rect x="688.5" y="282.0" width="0.8" height="1.6" fill="#e8175d"/><rect x="687.8" y="282.0" width="2.2" height="1.6" fill="#e8175d"/>
<rect x="691.5" y="278.7" width="0.8" height="3.3" fill="#e8175d"/><rect x="690.8" y="278.7" width="2.2" height="3.3" fill="#e8175d"/>
<rect x="694.5" y="276.1" width="0.8" height="5.3" fill="#e8175d"/><rect x="693.8" y="278.7" width="2.2" height="1.0" fill="#e8175d"/>
<rect x="697.4" y="278.7" width="0.8" height="5.9" fill="#1ccbc4"/><rect x="696.7" y="278.7" width="2.2" height="3.3" fill="#1ccbc4"/>
<rect x="700.4" y="282.0" width="0.8" height="1.6" fill="#1ccbc4"/><rect x="699.7" y="282.0" width="2.2" height="1.6" fill="#1ccbc4"/>
<rect x="703.4" y="283.6" width="0.8" height="1.7" fill="#1ccbc4"/><rect x="702.7" y="283.6" width="2.2" height="1.7" fill="#1ccbc4"/>
<rect x="706.4" y="285.3" width="0.8" height="1.6" fill="#1ccbc4"/><rect x="705.7" y="285.3" width="2.2" height="1.6" fill="#1ccbc4"/>
<rect x="709.4" y="285.6" width="0.8" height="6.3" fill="#1ccbc4"/><rect x="708.7" y="286.9" width="2.2" height="4.9" fill="#1ccbc4"/>
<rect x="712.4" y="291.9" width="0.8" height="0.5" fill="#e8175d"/><rect x="711.7" y="291.9" width="2.2" height="1.0" fill="#e8175d"/>
<rect x="715.3" y="291.9" width="0.8" height="0.5" fill="#e8175d"/><rect x="714.6" y="291.9" width="2.2" height="1.0" fill="#e8175d"/>
<rect x="718.3" y="291.9" width="0.8" height="1.7" fill="#1ccbc4"/><rect x="717.6" y="291.9" width="2.2" height="1.7" fill="#1ccbc4"/>
<rect x="721.3" y="293.6" width="0.8" height="4.6" fill="#1ccbc4"/><rect x="720.6" y="293.6" width="2.2" height="3.3" fill="#1ccbc4"/>
<rect x="724.3" y="293.6" width="0.8" height="3.3" fill="#e8175d"/><rect x="723.6" y="293.6" width="2.2" height="3.3" fill="#e8175d"/>
<rect x="727.3" y="293.6" width="0.8" height="3.3" fill="#1ccbc4"/><rect x="726.6" y="293.6" width="2.2" height="3.3" fill="#1ccbc4"/>
<rect x="730.3" y="295.5" width="0.8" height="3.0" fill="#1ccbc4"/><rect x="729.6" y="296.9" width="2.2" height="1.6" fill="#1ccbc4"/>
<rect x="733.2" y="298.5" width="0.8" height="4.9" fill="#1ccbc4"/><rect x="732.5" y="298.5" width="2.2" height="4.9" fill="#1ccbc4"/>
<rect x="736.2" y="301.8" width="0.8" height="1.6" fill="#e8175d"/><rect x="735.5" y="301.8" width="2.2" height="1.6" fill="#e8175d"/>
<rect x="739.2" y="301.8" width="0.8" height="1.6" fill="#1ccbc4"/><rect x="738.5" y="301.8" width="2.2" height="1.6" fill="#1ccbc4"/>
<rect x="742.2" y="298.8" width="0.8" height="5.9" fill="#e8175d"/><rect x="741.5" y="300.1" width="2.2" height="3.3" fill="#e8175d"/>
<rect x="745.2" y="298.5" width="0.8" height="1.6" fill="#e8175d"/><rect x="744.5" y="298.5" width="2.2" height="1.6" fill="#e8175d"/>
<rect x="748.1" y="293.6" width="0.8" height="4.9" fill="#e8175d"/><rect x="747.4" y="293.6" width="2.2" height="4.9" fill="#e8175d"/>
<rect x="751.1" y="293.6" width="0.8" height="0.5" fill="#e8175d"/><rect x="750.4" y="293.6" width="2.2" height="1.0" fill="#e8175d"/>
<rect x="754.1" y="293.6" width="0.8" height="0.5" fill="#e8175d"/><rect x="753.4" y="293.6" width="2.2" height="1.0" fill="#e8175d"/>
<rect x="757.1" y="291.9" width="0.8" height="1.7" fill="#e8175d"/><rect x="756.4" y="291.9" width="2.2" height="1.7" fill="#e8175d"/>
<rect x="760.1" y="291.9" width="0.8" height="1.7" fill="#1ccbc4"/><rect x="759.4" y="291.9" width="2.2" height="1.7" fill="#1ccbc4"/>
<rect x="763.1" y="292.2" width="0.8" height="1.3" fill="#e8175d"/><rect x="762.4" y="293.6" width="2.2" height="1.0" fill="#e8175d"/>
<rect x="766.0" y="293.6" width="0.8" height="4.9" fill="#1ccbc4"/><rect x="765.3" y="293.6" width="2.2" height="4.9" fill="#1ccbc4"/>
<rect x="769.0" y="298.5" width="0.8" height="3.3" fill="#1ccbc4"/><rect x="768.3" y="298.5" width="2.2" height="3.3" fill="#1ccbc4"/>
<rect x="772.0" y="301.8" width="0.8" height="0.5" fill="#e8175d"/><rect x="771.3" y="301.8" width="2.2" height="1.0" fill="#e8175d"/>
<rect x="775.0" y="298.8" width="0.8" height="3.0" fill="#e8175d"/><rect x="774.3" y="300.1" width="2.2" height="1.7" fill="#e8175d"/>
<rect x="778.0" y="296.9" width="0.8" height="4.6" fill="#e8175d"/><rect x="777.3" y="296.9" width="2.2" height="3.3" fill="#e8175d"/>
<rect x="781.0" y="293.6" width="0.8" height="3.3" fill="#e8175d"/><rect x="780.3" y="293.6" width="2.2" height="3.3" fill="#e8175d"/>
<rect x="783.9" y="293.6" width="0.8" height="3.3" fill="#1ccbc4"/><rect x="783.2" y="293.6" width="2.2" height="3.3" fill="#1ccbc4"/>
<rect x="786.9" y="293.6" width="0.8" height="3.3" fill="#e8175d"/><rect x="786.2" y="293.6" width="2.2" height="3.3" fill="#e8175d"/>
<rect x="789.9" y="291.9" width="0.8" height="1.7" fill="#e8175d"/><rect x="789.2" y="291.9" width="2.2" height="1.7" fill="#e8175d"/>
<rect x="792.9" y="291.9" width="0.8" height="1.7" fill="#1ccbc4"/><rect x="792.2" y="291.9" width="2.2" height="1.7" fill="#1ccbc4"/>
<rect x="795.9" y="292.2" width="0.8" height="3.0" fill="#1ccbc4"/><rect x="795.2" y="293.6" width="2.2" height="1.6" fill="#1ccbc4"/>
<rect x="798.9" y="292.2" width="0.8" height="3.0" fill="#e8175d"/><rect x="798.2" y="293.6" width="2.2" height="1.6" fill="#e8175d"/>
<rect x="801.8" y="293.6" width="0.8" height="1.6" fill="#1ccbc4"/><rect x="801.1" y="293.6" width="2.2" height="1.6" fill="#1ccbc4"/>
<rect x="804.8" y="295.2" width="0.8" height="0.5" fill="#e8175d"/><rect x="804.1" y="295.2" width="2.2" height="1.0" fill="#e8175d"/>
<rect x="807.8" y="295.2" width="0.8" height="3.3" fill="#1ccbc4"/><rect x="807.1" y="295.2" width="2.2" height="3.3" fill="#1ccbc4"/>
<rect x="810.8" y="296.9" width="0.8" height="1.6" fill="#e8175d"/><rect x="810.1" y="296.9" width="2.2" height="1.6" fill="#e8175d"/>
<rect x="813.8" y="296.9" width="0.8" height="1.6" fill="#1ccbc4"/><rect x="813.1" y="296.9" width="2.2" height="1.6" fill="#1ccbc4"/>
<rect x="816.8" y="297.2" width="0.8" height="5.9" fill="#1ccbc4"/><rect x="816.1" y="298.5" width="2.2" height="3.3" fill="#1ccbc4"/>
<rect x="819.7" y="300.1" width="0.8" height="1.7" fill="#e8175d"/><rect x="819.0" y="300.1" width="2.2" height="1.7" fill="#e8175d"/>
<rect x="822.7" y="300.1" width="0.8" height="0.5" fill="#e8175d"/><rect x="822.0" y="300.1" width="2.2" height="1.0" fill="#e8175d"/>
<rect x="825.7" y="300.1" width="0.8" height="3.3" fill="#1ccbc4"/><rect x="825.0" y="300.1" width="2.2" height="3.3" fill="#1ccbc4"/>
<rect x="828.7" y="303.4" width="0.8" height="0.5" fill="#e8175d"/><rect x="828.0" y="303.4" width="2.2" height="1.0" fill="#e8175d"/>
<rect x="831.7" y="303.4" width="0.8" height="3.3" fill="#1ccbc4"/><rect x="831.0" y="303.4" width="2.2" height="3.3" fill="#1ccbc4"/>
<rect x="834.7" y="303.4" width="0.8" height="4.6" fill="#e8175d"/><rect x="834.0" y="303.4" width="2.2" height="3.3" fill="#e8175d"/>
<rect x="837.6" y="303.4" width="0.8" height="1.7" fill="#1ccbc4"/><rect x="836.9" y="303.4" width="2.2" height="1.7" fill="#1ccbc4"/>
<rect x="840.6" y="303.8" width="0.8" height="4.6" fill="#1ccbc4"/><rect x="839.9" y="305.1" width="2.2" height="3.3" fill="#1ccbc4"/>
<rect x="843.6" y="307.1" width="0.8" height="1.3" fill="#e8175d"/><rect x="842.9" y="308.4" width="2.2" height="1.0" fill="#e8175d"/>
<rect x="846.6" y="306.8" width="0.8" height="1.6" fill="#e8175d"/><rect x="845.9" y="306.8" width="2.2" height="1.6" fill="#e8175d"/>
<rect x="849.6" y="305.4" width="0.8" height="2.6" fill="#e8175d"/><rect x="848.9" y="306.8" width="2.2" height="1.0" fill="#e8175d"/>
<rect x="852.6" y="306.8" width="0.8" height="4.6" fill="#1ccbc4"/><rect x="851.9" y="306.8" width="2.2" height="3.3" fill="#1ccbc4"/>
<rect x="855.5" y="310.1" width="0.8" height="0.5" fill="#e8175d"/><rect x="854.8" y="310.1" width="2.2" height="1.0" fill="#e8175d"/>
<rect x="858.5" y="310.1" width="0.8" height="1.6" fill="#1ccbc4"/><rect x="857.8" y="310.1" width="2.2" height="1.6" fill="#1ccbc4"/>
<rect x="861.5" y="308.4" width="0.8" height="3.3" fill="#e8175d"/><rect x="860.8" y="308.4" width="2.2" height="3.3" fill="#e8175d"/>
<rect x="864.5" y="302.1" width="0.8" height="6.3" fill="#e8175d"/><rect x="863.8" y="303.4" width="2.2" height="4.9" fill="#e8175d"/>
<rect x="867.5" y="302.1" width="0.8" height="2.6" fill="#e8175d"/><rect x="866.8" y="303.4" width="2.2" height="1.0" fill="#e8175d"/>
<rect x="870.5" y="300.5" width="0.8" height="4.3" fill="#e8175d"/><rect x="869.8" y="301.8" width="2.2" height="1.6" fill="#e8175d"/>
<rect x="873.4" y="298.5" width="0.8" height="3.3" fill="#e8175d"/><rect x="872.7" y="298.5" width="2.2" height="3.3" fill="#e8175d"/>
<rect x="876.4" y="298.5" width="0.8" height="4.9" fill="#1ccbc4"/><rect x="875.7" y="298.5" width="2.2" height="4.9" fill="#1ccbc4"/>
<rect x="879.4" y="303.4" width="0.8" height="1.7" fill="#1ccbc4"/><rect x="878.7" y="303.4" width="2.2" height="1.7" fill="#1ccbc4"/>
<rect x="882.4" y="305.1" width="0.8" height="0.5" fill="#e8175d"/><rect x="881.7" y="305.1" width="2.2" height="1.0" fill="#e8175d"/>
<rect x="885.4" y="303.4" width="0.8" height="1.7" fill="#e8175d"/><rect x="884.7" y="303.4" width="2.2" height="1.7" fill="#e8175d"/>
<rect x="888.4" y="303.4" width="0.8" height="1.7" fill="#1ccbc4"/><rect x="887.7" y="303.4" width="2.2" height="1.7" fill="#1ccbc4"/>
<rect x="891.3" y="300.5" width="0.8" height="4.6" fill="#e8175d"/><rect x="890.6" y="301.8" width="2.2" height="3.3" fill="#e8175d"/>
<rect x="894.3" y="301.8" width="0.8" height="3.3" fill="#1ccbc4"/><rect x="893.6" y="301.8" width="2.2" height="3.3" fill="#1ccbc4"/>
<rect x="897.3" y="305.1" width="0.8" height="0.5" fill="#e8175d"/><rect x="896.6" y="305.1" width="2.2" height="1.0" fill="#e8175d"/>
<rect x="900.3" y="303.8" width="0.8" height="3.0" fill="#1ccbc4"/><rect x="899.6" y="305.1" width="2.2" height="1.6" fill="#1ccbc4"/>
<rect x="903.3" y="306.8" width="0.8" height="3.3" fill="#1ccbc4"/><rect x="902.6" y="306.8" width="2.2" height="3.3" fill="#1ccbc4"/>
<rect x="906.2" y="308.4" width="0.8" height="1.7" fill="#e8175d"/><rect x="905.5" y="308.4" width="2.2" height="1.7" fill="#e8175d"/>
<rect x="909.2" y="305.1" width="0.8" height="3.3" fill="#e8175d"/><rect x="908.5" y="305.1" width="2.2" height="3.3" fill="#e8175d"/>
<rect x="912.2" y="305.1" width="0.8" height="1.3" fill="#e8175d"/><rect x="911.5" y="305.1" width="2.2" height="1.0" fill="#e8175d"/>
<rect x="915.2" y="303.4" width="0.8" height="1.7" fill="#e8175d"/><rect x="914.5" y="303.4" width="2.2" height="1.7" fill="#e8175d"/>
<rect x="918.2" y="300.1" width="0.8" height="4.6" fill="#e8175d"/><rect x="917.5" y="300.1" width="2.2" height="3.3" fill="#e8175d"/>
<rect x="921.2" y="300.1" width="0.8" height="5.0" fill="#1ccbc4"/><rect x="920.5" y="300.1" width="2.2" height="5.0" fill="#1ccbc4"/>
<rect x="924.1" y="305.1" width="0.8" height="3.3" fill="#1ccbc4"/><rect x="923.4" y="305.1" width="2.2" height="3.3" fill="#1ccbc4"/>
<rect x="927.1" y="308.4" width="0.8" height="1.7" fill="#1ccbc4"/><rect x="926.4" y="308.4" width="2.2" height="1.7" fill="#1ccbc4"/>
<rect x="930.1" y="310.1" width="0.8" height="1.6" fill="#1ccbc4"/><rect x="929.4" y="310.1" width="2.2" height="1.6" fill="#1ccbc4"/>
<rect x="933.1" y="311.7" width="0.8" height="1.3" fill="#e8175d"/><rect x="932.4" y="311.7" width="2.2" height="1.0" fill="#e8175d"/>
<rect x="936.1" y="311.7" width="0.8" height="1.7" fill="#1ccbc4"/><rect x="935.4" y="311.7" width="2.2" height="1.7" fill="#1ccbc4"/>
<rect x="939.1" y="313.4" width="0.8" height="1.6" fill="#1ccbc4"/><rect x="938.4" y="313.4" width="2.2" height="1.6" fill="#1ccbc4"/>
<rect x="942.0" y="311.7" width="0.8" height="3.3" fill="#e8175d"/><rect x="941.3" y="311.7" width="2.2" height="3.3" fill="#e8175d"/>
<rect x="945.0" y="306.8" width="0.8" height="4.9" fill="#e8175d"/><rect x="944.3" y="306.8" width="2.2" height="4.9" fill="#e8175d"/>
<rect x="948.0" y="306.8" width="0.8" height="4.9" fill="#1ccbc4"/><rect x="947.3" y="306.8" width="2.2" height="4.9" fill="#1ccbc4"/>
<rect x="951.0" y="311.7" width="0.8" height="3.3" fill="#1ccbc4"/><rect x="950.3" y="311.7" width="2.2" height="3.3" fill="#1ccbc4"/>
<rect x="954.0" y="313.4" width="0.8" height="1.6" fill="#e8175d"/><rect x="953.3" y="313.4" width="2.2" height="1.6" fill="#e8175d"/>
<rect x="957.0" y="313.4" width="0.8" height="0.5" fill="#e8175d"/><rect x="956.3" y="313.4" width="2.2" height="1.0" fill="#e8175d"/>
<rect x="959.9" y="313.4" width="0.8" height="1.6" fill="#1ccbc4"/><rect x="959.2" y="313.4" width="2.2" height="1.6" fill="#1ccbc4"/>
<rect x="962.9" y="313.7" width="0.8" height="3.0" fill="#1ccbc4"/><rect x="962.2" y="315.0" width="2.2" height="1.6" fill="#1ccbc4"/>
<rect x="965.9" y="315.3" width="0.8" height="1.3" fill="#e8175d"/><rect x="965.2" y="316.6" width="2.2" height="1.0" fill="#e8175d"/>
<rect x="968.9" y="315.0" width="0.8" height="1.6" fill="#e8175d"/><rect x="968.2" y="315.0" width="2.2" height="1.6" fill="#e8175d"/>
<rect x="971.9" y="315.0" width="0.8" height="1.3" fill="#e8175d"/><rect x="971.2" y="315.0" width="2.2" height="1.0" fill="#e8175d"/>
<rect x="986.8" y="315.0" width="0.8" height="1.3" fill="#e8175d"/><rect x="986.1" y="315.0" width="2.2" height="1.0" fill="#e8175d"/>
</g>
<rect x="2.4" y="417.4" width="27.4" height="1.2" fill="#1ccbc4"/>
<path d="M2.5,419.4 L3.5,419.4 L4.5,419.4 L5.5,419.4 L6.5,419.3 L7.5,419.3 L8.5,419.3 L9.5,419.3 L10.5,419.3 L11.5,419.3 L12.5,419.3 L13.5,419.2 L14.5,419.2 L15.5,419.2 L16.5,419.2 L17.5,419.2 L18.5,419.2 L19.5,419.2 L20.5,419.1 L21.5,419.1 L22.5,419.1 L23.5,419.1 L24.5,419.1 L25.5,419.1 L26.5,419.0 L27.5,419.0 L28.5,419.0 L29.5,419.0 L30.5,418.8 L31.5,418.6 L32.5,418.4 L33.5,418.1 L34.5,417.9 L35.5,417.7 L36.5,417.4 L37.5,417.2 L38.5,417.0 L39.5,416.7 L40.5,416.5 L41.5,416.2 L42.5,416.0 L43.5,415.8 L44.5,415.5 L45.5,415.3 L46.5,415.1 L47.5,414.8 L48.5,414.6 L49.5,414.4 L50.5,414.1 L51.5,413.9 L52.5,413.7 L53.5,413.4 L54.5,413.2 L55.5,413.0 L56.5,412.7 L57.5,412.5 L58.5,412.3 L59.5,412.0 L60.5,411.8 L61.5,411.5 L62.5,411.3 L63.5,411.1 L64.5,410.8 L65.5,410.6 L66.5,410.4 L67.5,410.1 L68.5,409.9 L69.5,409.7 L70.5,409.4 L71.5,409.2 L72.5,409.0 L73.5,408.7 L74.5,408.5 L75.5,408.3 L76.5,408.0 L77.5,407.8 L78.5,407.6 L79.5,407.3 L80.5,407.1 L81.5,406.8 L82.5,406.6 L83.5,406.4 L84.5,406.1 L85.5,405.9 L86.5,405.7 L87.5,405.4 L88.5,405.2 L89.5,405.0 L90.5,404.7 L91.5,404.5 L92.5,404.3 L93.5,404.0 L94.5,403.8 L95.5,403.6 L96.5,403.3 L97.5,403.1 L98.5,402.9 L99.5,402.6 L100.5,402.4 L101.5,402.1 L102.5,401.9 L103.5,401.6 L104.5,401.4 L105.5,401.1 L106.5,400.9 L107.5,400.6 L108.5,400.4 L109.5,400.1 L110.5,399.9 L111.5,399.6 L112.5,399.4 L113.5,399.1 L114.5,398.9 L115.5,398.6 L116.5,398.4 L117.5,398.1 L118.5,397.9 L119.5,397.6 L120.5,397.4 L121.5,397.1 L122.5,396.9 L123.5,396.6 L124.5,396.4 L125.5,396.1 L126.5,395.8 L127.5,395.5 L128.5,395.2 L129.5,394.9 L130.5,394.6 L131.5,394.3 L132.5,394.0 L133.5,393.7 L134.5,393.4 L135.5,393.1 L136.5,392.8 L137.5,392.5 L138.5,392.2 L139.5,391.9 L140.5,391.6 L141.5,391.3 L142.5,391.0 L143.5,390.7 L144.5,390.4 L145.5,390.1 L146.5,389.8 L147.5,389.5 L148.5,389.2 L149.5,388.9 L150.5,388.6 L151.5,388.2 L152.5,387.9 L153.5,387.5 L154.5,387.2 L155.5,386.8 L156.5,386.5 L157.5,386.1 L158.5,385.8 L159.5,385.4 L160.5,385.1 L161.5,384.7 L162.5,384.4 L163.5,384.0 L164.5,383.7 L165.5,383.3 L166.5,383.0 L167.5,382.6 L168.5,382.3 L169.5,381.9 L170.5,381.6 L171.5,381.2 L172.5,380.9 L173.5,380.5 L174.5,380.2 L175.5,379.8 L176.5,379.5 L177.5,379.1 L178.5,378.8 L179.5,378.4 L180.5,378.1 L181.5,377.7 L182.5,377.4 L183.5,377.0 L184.5,376.7 L185.5,376.3 L186.5,376.0 L187.5,375.6 L188.5,375.3 L189.5,374.9 L190.5,374.6 L191.5,374.2 L192.5,373.9 L193.5,373.5 L194.5,373.2 L195.5,372.8 L196.5,372.5 L197.5,372.1 L198.5,371.8 L199.5,371.4 L200.5,371.0 L201.5,370.6 L202.5,370.2 L203.5,369.9 L204.5,369.5 L205.5,369.1 L206.5,368.7 L207.5,368.3 L208.5,367.9 L209.5,367.5 L210.5,367.1 L211.5,366.7 L212.5,366.2 L213.5,365.9 L214.5,365.5 L215.5,365.1 L216.5,364.7 L217.5,364.3 L218.5,363.9 L219.5,363.5 L220.5,363.1 L221.5,362.7 L222.5,362.2 L223.5,361.9 L224.5,361.5 L225.5,361.1 L226.5,360.7 L227.5,360.4 L228.5,360.0 L229.5,359.7 L230.5,359.3 L231.5,359.0 L232.5,358.6 L233.5,358.3 L234.5,357.9 L235.5,357.6 L236.5,357.2 L237.5,356.9 L238.5,356.5 L239.5,356.2 L240.5,355.8 L241.5,355.5 L242.5,355.1 L243.5,354.8 L244.5,354.4 L245.5,354.1 L246.5,353.7 L247.5,353.4 L248.5,353.0 L249.5,352.7 L250.5,352.3 L251.5,351.9 L252.5,351.5 L253.5,351.1 L254.5,350.7 L255.5,350.3 L256.5,349.9 L257.5,349.5 L258.5,349.1 L259.5,348.7 L260.5,348.3 L261.5,347.9 L262.5,347.5 L263.5,347.1 L264.5,346.7 L265.5,346.3 L266.5,345.9 L267.5,345.5 L268.5,345.1 L269.5,344.7 L270.5,344.3 L271.5,343.9 L272.5,343.5 L273.5,343.1 L274.5,342.7 L275.5,342.3 L276.5,341.9 L277.5,341.6 L278.5,341.2 L279.5,340.8 L280.5,340.4 L281.5,340.0 L282.5,339.7 L283.5,339.3 L284.5,338.9 L285.5,338.5 L286.5,338.1 L287.5,337.8 L288.5,337.4 L289.5,337.0 L290.5,336.6 L291.5,336.2 L292.5,335.9 L293.5,335.5 L294.5,335.1 L295.5,334.7 L296.5,334.3 L297.5,334.0 L298.5,333.6 L299.5,333.2 L300.5,332.9 L301.5,332.5 L302.5,332.2 L303.5,331.9 L304.5,331.6 L305.5,331.2 L306.5,330.9 L307.5,330.6 L308.5,330.3 L309.5,330.0 L310.5,329.6 L311.5,329.3 L312.5,329.0 L313.5,328.7 L314.5,328.4 L315.5,328.0 L316.5,327.7 L317.5,327.4 L318.5,327.1 L319.5,326.8 L320.5,326.4 L321.5,326.1 L322.5,325.8 L323.5,325.5 L324.5,325.2 L325.5,324.9 L326.5,324.6 L327.5,324.3 L328.5,324.0 L329.5,323.7 L330.5,323.4 L331.5,323.1 L332.5,322.8 L333.5,322.4 L334.5,322.1 L335.5,321.9 L336.5,321.6 L337.5,321.2 L338.5,320.9 L339.5,320.6 L340.5,320.3 L341.5,320.0 L342.5,319.8 L343.5,319.5 L344.5,319.2 L345.5,318.9 L346.5,318.6 L347.5,318.2 L348.5,318.0 L349.5,317.7 L350.5,317.4 L351.5,317.1 L352.5,316.8 L353.5,316.4 L354.5,316.2 L355.5,315.9 L356.5,315.6 L357.5,315.2 L358.5,315.0 L359.5,314.6 L360.5,314.4 L361.5,314.1 L362.5,313.8 L363.5,313.4 L364.5,313.1 L365.5,312.8 L366.5,312.6 L367.5,312.2 L368.5,312.0 L369.5,311.7 L370.5,311.4 L371.5,311.1 L372.5,310.8 L373.5,310.5 L374.5,310.2 L375.5,309.9 L376.5,309.6 L377.5,309.2 L378.5,308.9 L379.5,308.7 L380.5,308.4 L381.5,308.1 L382.5,307.8 L383.5,307.5 L384.5,307.1 L385.5,306.9 L386.5,306.6 L387.5,306.2 L388.5,305.9 L389.5,305.6 L390.5,305.3 L391.5,305.1 L392.5,304.8 L393.5,304.5 L394.5,304.2 L395.5,303.9 L396.5,303.6 L397.5,303.2 L398.5,302.9 L399.5,302.6 L400.5,302.3 L401.5,302.0 L402.5,301.7 L403.5,301.4 L404.5,301.1 L405.5,300.7 L406.5,300.4 L407.5,300.1 L408.5,299.8 L409.5,299.5 L410.5,299.1 L411.5,298.8 L412.5,298.5 L413.5,298.2 L414.5,297.9 L415.5,297.5 L416.5,297.2 L417.5,296.9 L418.5,296.6 L419.5,296.3 L420.5,295.9 L421.5,295.6 L422.5,295.3 L423.5,295.0 L424.5,294.7 L425.5,294.4 L426.5,294.1 L427.5,293.8 L428.5,293.5 L429.5,293.2 L430.5,293.0 L431.5,292.7 L432.5,292.4 L433.5,292.1 L434.5,291.8 L435.5,291.6 L436.5,291.3 L437.5,291.0 L438.5,290.7 L439.5,290.4 L440.5,290.2 L441.5,289.9 L442.5,289.6 L443.5,289.3 L444.5,289.0 L445.5,288.8 L446.5,288.5 L447.5,288.2 L448.5,287.9 L449.5,287.6 L450.5,287.3 L451.5,287.0 L452.5,286.8 L453.5,286.4 L454.5,286.2 L455.5,285.9 L456.5,285.6 L457.5,285.2 L458.5,285.0 L459.5,284.6 L460.5,284.4 L461.5,284.1 L462.5,283.8 L463.5,283.4 L464.5,283.1 L465.5,282.8 L466.5,282.6 L467.5,282.2 L468.5,282.0 L469.5,281.7 L470.5,281.4 L471.5,281.1 L472.5,280.8 L473.5,280.5 L474.5,280.2 L475.5,279.9 L476.5,279.6 L477.5,279.3 L478.5,279.0 L479.5,278.7 L480.5,278.5 L481.5,278.2 L482.5,277.9 L483.5,277.6 L484.5,277.3 L485.5,277.1 L486.5,276.8 L487.5,276.5 L488.5,276.2 L489.5,275.9 L490.5,275.7 L491.5,275.4 L492.5,275.1 L493.5,274.8 L494.5,274.5 L495.5,274.3 L496.5,274.0 L497.5,273.7 L498.5,273.4 L499.5,273.1 L500.5,272.9 L501.5,272.6 L502.5,272.3 L503.5,272.1 L504.5,271.8 L505.5,271.5 L506.5,271.2 L507.5,271.0 L508.5,270.7 L509.5,270.4 L510.5,270.2 L511.5,269.9 L512.5,269.6 L513.5,269.4 L514.5,269.1 L515.5,268.8 L516.5,268.5 L517.5,268.3 L518.5,268.0 L519.5,267.7 L520.5,267.5 L521.5,267.2 L522.5,266.9 L523.5,266.7 L524.5,266.4 L525.5,266.1 L526.5,265.9 L527.5,265.6 L528.5,265.4 L529.5,265.1 L530.5,264.9 L531.5,264.6 L532.5,264.3 L533.5,264.1 L534.5,263.8 L535.5,263.6 L536.5,263.3 L537.5,263.1 L538.5,262.8 L539.5,262.6 L540.5,262.3 L541.5,262.1 L542.5,261.8 L543.5,261.5 L544.5,261.3 L545.5,261.0 L546.5,260.8 L547.5,260.5 L548.5,260.3 L549.5,260.0 L550.5,259.7 L551.5,259.4 L552.5,259.2 L553.5,258.9 L554.5,258.6 L555.5,258.3 L556.5,258.1 L557.5,257.8 L558.5,257.5 L559.5,257.2 L560.5,256.9 L561.5,256.7 L562.5,256.4 L563.5,256.1 L564.5,255.8 L565.5,255.6 L566.5,255.3 L567.5,255.0 L568.5,254.7 L569.5,254.5 L570.5,254.2 L571.5,253.9 L572.5,253.6 L573.5,253.4 L574.5,253.1 L575.5,252.9 L576.5,252.6 L577.5,252.4 L578.5,252.1 L579.5,251.8 L580.5,251.6 L581.5,251.3 L582.5,251.1 L583.5,250.8 L584.5,250.6 L585.5,250.3 L586.5,250.1 L587.5,249.8 L588.5,249.5 L589.5,249.3 L590.5,249.0 L591.5,248.7 L592.5,248.5 L593.5,248.2 L594.5,247.9 L595.5,247.7 L596.5,247.4 L597.5,247.1 L598.5,246.9 L599.5,246.6 L600.5,246.4 L601.5,246.1 L602.5,245.9 L603.5,245.6 L604.5,245.4 L605.5,245.1 L606.5,244.9 L607.5,244.6 L608.5,244.4 L609.5,244.1 L610.5,243.9 L611.5,243.7 L612.5,243.4 L613.5,243.2 L614.5,242.9 L615.5,242.7 L616.5,242.4 L617.5,242.2 L618.5,241.9 L619.5,241.7 L620.5,241.4 L621.5,241.2 L622.5,241.0 L623.5,240.8 L624.5,240.7 L625.5,240.6 L626.5,240.6 L627.5,240.5 L628.5,240.4 L629.5,240.4 L630.5,240.3 L631.5,240.2 L632.5,240.2 L633.5,240.1 L634.5,240.1 L635.5,240.0 L636.5,239.9 L637.5,239.9 L638.5,239.8 L639.5,239.7 L640.5,239.7 L641.5,239.6 L642.5,239.6 L643.5,239.5 L644.5,239.5 L645.5,239.5 L646.5,239.5 L647.5,239.5 L648.5,239.5 L649.5,239.5 L650.5,239.5 L651.5,239.5 L652.5,239.5 L653.5,239.5 L654.5,239.5 L655.5,239.5 L656.5,239.5 L657.5,239.5 L658.5,239.5 L659.5,239.5 L660.5,239.5 L661.5,239.5 L662.5,239.5 L663.5,239.5 L664.5,239.5 L665.5,239.5 L666.5,239.5 L667.5,239.5 L668.5,239.5 L669.5,239.5 L670.5,239.5 L671.5,239.5 L672.5,239.5 L673.5,239.5 L674.5,239.6 L675.5,239.6 L676.5,239.6 L677.5,239.7 L678.5,239.7 L679.5,239.8 L680.5,239.8 L681.5,239.9 L682.5,239.9 L683.5,239.9 L684.5,240.0 L685.5,240.0 L686.5,240.1 L687.5,240.1 L688.5,240.1 L689.5,240.2 L690.5,240.2 L691.5,240.3 L692.5,240.3 L693.5,240.4 L694.5,240.4 L695.5,240.4 L696.5,240.5 L697.5,240.5 L698.5,240.6 L699.5,240.6 L700.5,240.6 L701.5,240.7 L702.5,240.7 L703.5,240.8 L704.5,240.9 L705.5,240.9 L706.5,241.0 L707.5,241.1 L708.5,241.2 L709.5,241.3 L710.5,241.3 L711.5,241.4 L712.5,241.5 L713.5,241.6 L714.5,241.7 L715.5,241.7 L716.5,241.8 L717.5,241.9 L718.5,242.0 L719.5,242.1 L720.5,242.1 L721.5,242.2 L722.5,242.3 L723.5,242.4 L724.5,242.5 L725.5,242.6 L726.5,242.7 L727.5,242.9 L728.5,243.0 L729.5,243.1 L730.5,243.3 L731.5,243.4 L732.5,243.6 L733.5,243.7 L734.5,243.8 L735.5,244.0 L736.5,244.1 L737.5,244.2 L738.5,244.4 L739.5,244.5 L740.5,244.7 L741.5,244.8 L742.5,244.9 L743.5,245.1 L744.5,245.2 L745.5,245.4 L746.5,245.5 L747.5,245.7 L748.5,245.8 L749.5,245.9 L750.5,246.1 L751.5,246.2 L752.5,246.4 L753.5,246.6 L754.5,246.7 L755.5,246.9 L756.5,247.0 L757.5,247.2 L758.5,247.4 L759.5,247.5 L760.5,247.7 L761.5,247.8 L762.5,248.0 L763.5,248.2 L764.5,248.3 L765.5,248.5 L766.5,248.6 L767.5,248.8 L768.5,249.0 L769.5,249.1 L770.5,249.3 L771.5,249.4 L772.5,249.6 L773.5,249.8 L774.5,249.9 L775.5,250.1 L776.5,250.2 L777.5,250.4 L778.5,250.5 L779.5,250.7 L780.5,250.8 L781.5,251.0 L782.5,251.1 L783.5,251.3 L784.5,251.4 L785.5,251.6 L786.5,251.7 L787.5,251.9 L788.5,252.0 L789.5,252.2 L790.5,252.3 L791.5,252.5 L792.5,252.6 L793.5,252.8 L794.5,252.9 L795.5,253.1 L796.5,253.2 L797.5,253.4 L798.5,253.5 L799.5,253.7 L800.5,253.8 L801.5,254.0 L802.5,254.2 L803.5,254.3 L804.5,254.5 L805.5,254.7 L806.5,254.9 L807.5,255.0 L808.5,255.2 L809.5,255.4 L810.5,255.5 L811.5,255.7 L812.5,255.9 L813.5,256.0 L814.5,256.2 L815.5,256.4 L816.5,256.6 L817.5,256.7 L818.5,256.9 L819.5,257.1 L820.5,257.2 L821.5,257.4 L822.5,257.6 L823.5,257.7 L824.5,257.9 L825.5,258.1 L826.5,258.3 L827.5,258.4 L828.5,258.6 L829.5,258.8 L830.5,259.0 L831.5,259.2 L832.5,259.4 L833.5,259.5 L834.5,259.7 L835.5,259.9 L836.5,260.1 L837.5,260.2 L838.5,260.4 L839.5,260.6 L840.5,260.8 L841.5,261.0 L842.5,261.2 L843.5,261.3 L844.5,261.5 L845.5,261.7 L846.5,261.9 L847.5,262.1 L848.5,262.2 L849.5,262.4 L850.5,262.6 L851.5,262.8 L852.5,263.0 L853.5,263.1 L854.5,263.3 L855.5,263.5 L856.5,263.7 L857.5,263.9 L858.5,264.0 L859.5,264.2 L860.5,264.4 L861.5,264.6 L862.5,264.8 L863.5,264.9 L864.5,265.1 L865.5,265.3 L866.5,265.5 L867.5,265.6 L868.5,265.8 L869.5,266.0 L870.5,266.2 L871.5,266.4 L872.5,266.6 L873.5,266.7 L874.5,266.9 L875.5,267.1 L876.5,267.2 L877.5,267.4 L878.5,267.6 L879.5,267.7 L880.5,267.9 L881.5,268.0 L882.5,268.2 L883.5,268.4 L884.5,268.5 L885.5,268.7 L886.5,268.8 L887.5,269.0 L888.5,269.2 L889.5,269.3 L890.5,269.5 L891.5,269.6 L892.5,269.8 L893.5,270.0 L894.5,270.1 L895.5,270.3 L896.5,270.4 L897.5,270.6 L898.5,270.8 L899.5,270.9 L900.5,271.1 L901.5,271.2 L902.5,271.4 L903.5,271.6 L904.5,271.7 L905.5,271.9 L906.5,272.0 L907.5,272.2 L908.5,272.4 L909.5,272.5 L910.5,272.7 L911.5,272.8 L912.5,273.0 L913.5,273.2 L914.5,273.3 L915.5,273.5 L916.5,273.6 L917.5,273.8 L918.5,274.0 L919.5,274.1 L920.5,274.3 L921.5,274.4 L922.5,274.6 L923.5,274.8 L924.5,274.9 L925.5,275.1 L926.5,275.2 L927.5,275.4 L928.5,275.5 L929.5,275.7 L930.5,275.8 L931.5,276.0 L932.5,276.1 L933.5,276.3 L934.5,276.4 L935.5,276.6 L936.5,276.7 L937.5,276.9 L938.5,277.0 L939.5,277.2 L940.5,277.3 L941.5,277.5 L942.5,277.6 L943.5,277.8 L944.5,277.9 L945.5,278.1 L946.5,278.2 L947.5,278.4 L948.5,278.5 L949.5,278.7 L950.5,278.8 L951.5,279.0 L952.5,279.1 L953.5,279.3 L954.5,279.4 L955.5,279.5 L956.5,279.6 L957.5,279.8 L958.5,279.9 L959.5,280.0 L960.5,280.1 L961.5,280.2 L962.5,280.3 L963.5,280.4 L964.5,280.5 L965.5,280.6 L966.5,280.7 L967.5,280.8 L968.5,280.9 L969.5,281.0 L970.5,281.1 L971.5,281.2 L972.5,281.3 L973.5,281.4 L974.5,281.5 L975.5,281.6 L976.5,281.7 L977.5,281.8 L978.5,281.9 L979.5,282.0 L980.5,282.1 L981.5,282.2 L982.5,282.3 L983.5,282.4 L984.5,282.5 L985.5,282.6 L986.5,282.6" fill="none" stroke="#ee3fc0" stroke-width="1.25" stroke-linejoin="round"/>
<path d="M2.5,420.3 L3.5,420.3 L4.5,420.3 L5.5,420.3 L6.5,420.3 L7.5,420.3 L8.5,420.3 L9.5,420.3 L10.5,420.3 L11.5,420.2 L12.5,420.2 L13.5,420.2 L14.5,420.2 L15.5,420.2 L16.5,420.2 L17.5,420.2 L18.5,420.2 L19.5,420.2 L20.5,420.2 L21.5,420.1 L22.5,420.0 L23.5,419.9 L24.5,419.8 L25.5,419.7 L26.5,419.6 L27.5,419.5 L28.5,419.4 L29.5,419.3 L30.5,419.0 L31.5,418.6 L32.5,418.2 L33.5,417.7 L34.5,417.3 L35.5,416.9 L36.5,416.5 L37.5,416.0 L38.5,415.6 L39.5,415.2 L40.5,414.8 L41.5,414.3 L42.5,413.9 L43.5,413.5 L44.5,413.1 L45.5,412.6 L46.5,412.2 L47.5,411.8 L48.5,411.4 L49.5,410.9 L50.5,410.5 L51.5,410.1 L52.5,409.7 L53.5,409.2 L54.5,408.8 L55.5,408.4 L56.5,408.0 L57.5,407.5 L58.5,407.1 L59.5,406.7 L60.5,406.3 L61.5,405.8 L62.5,405.4 L63.5,405.0 L64.5,404.6 L65.5,404.2 L66.5,403.7 L67.5,403.3 L68.5,402.9 L69.5,402.5 L70.5,402.0 L71.5,401.6 L72.5,401.2 L73.5,400.8 L74.5,400.3 L75.5,399.9 L76.5,399.5 L77.5,399.1 L78.5,398.6 L79.5,398.2 L80.5,397.7 L81.5,397.2 L82.5,396.6 L83.5,396.1 L84.5,395.5 L85.5,395.0 L86.5,394.4 L87.5,393.9 L88.5,393.3 L89.5,392.8 L90.5,392.2 L91.5,391.7 L92.5,391.1 L93.5,390.6 L94.5,390.0 L95.5,389.5 L96.5,388.9 L97.5,388.4 L98.5,387.8 L99.5,387.3 L100.5,386.7 L101.5,386.1 L102.5,385.6 L103.5,385.0 L104.5,384.4 L105.5,383.8 L106.5,383.2 L107.5,382.7 L108.5,382.1 L109.5,381.5 L110.5,380.9 L111.5,380.3 L112.5,379.8 L113.5,379.2 L114.5,378.6 L115.5,378.0 L116.5,377.4 L117.5,376.9 L118.5,376.3 L119.5,375.7 L120.5,375.1 L121.5,374.5 L122.5,374.0 L123.5,373.4 L124.5,372.8 L125.5,372.1 L126.5,371.5 L127.5,370.9 L128.5,370.2 L129.5,369.6 L130.5,368.9 L131.5,368.3 L132.5,367.6 L133.5,367.0 L134.5,366.3 L135.5,365.7 L136.5,365.0 L137.5,364.4 L138.5,363.7 L139.5,363.1 L140.5,362.4 L141.5,361.8 L142.5,361.1 L143.5,360.5 L144.5,359.8 L145.5,359.2 L146.5,358.5 L147.5,357.9 L148.5,357.2 L149.5,356.6 L150.5,355.9 L151.5,355.2 L152.5,354.5 L153.5,353.8 L154.5,353.1 L155.5,352.4 L156.5,351.7 L157.5,351.0 L158.5,350.3 L159.5,349.6 L160.5,348.9 L161.5,348.2 L162.5,347.5 L163.5,346.8 L164.5,346.1 L165.5,345.4 L166.5,344.7 L167.5,344.0 L168.5,343.3 L169.5,342.6 L170.5,341.9 L171.5,341.2 L172.5,340.5 L173.5,339.8 L174.5,339.1 L175.5,338.4 L176.5,337.7 L177.5,337.0 L178.5,336.3 L179.5,335.6 L180.5,334.9 L181.5,334.2 L182.5,333.5 L183.5,332.8 L184.5,332.1 L185.5,331.4 L186.5,330.7 L187.5,330.0 L188.5,329.3 L189.5,328.6 L190.5,327.9 L191.5,327.2 L192.5,326.5 L193.5,325.8 L194.5,325.1 L195.5,324.4 L196.5,323.7 L197.5,323.0 L198.5,322.3 L199.5,321.6 L200.5,320.9 L201.5,320.1 L202.5,319.4 L203.5,318.6 L204.5,317.9 L205.5,317.1 L206.5,316.4 L207.5,315.6 L208.5,314.9 L209.5,314.1 L210.5,313.4 L211.5,312.6 L212.5,311.9 L213.5,311.1 L214.5,310.4 L215.5,309.6 L216.5,308.9 L217.5,308.1 L218.5,307.4 L219.5,306.6 L220.5,305.9 L221.5,305.1 L222.5,304.4 L223.5,303.6 L224.5,302.9 L225.5,302.1 L226.5,301.3 L227.5,300.5 L228.5,299.8 L229.5,299.0 L230.5,298.2 L231.5,297.4 L232.5,296.6 L233.5,295.8 L234.5,295.1 L235.5,294.3 L236.5,293.5 L237.5,292.7 L238.5,291.9 L239.5,291.1 L240.5,290.4 L241.5,289.6 L242.5,288.8 L243.5,288.0 L244.5,287.2 L245.5,286.4 L246.5,285.7 L247.5,284.9 L248.5,284.1 L249.5,283.3 L250.5,282.5 L251.5,281.7 L252.5,281.0 L253.5,280.2 L254.5,279.4 L255.5,278.5 L256.5,277.7 L257.5,276.8 L258.5,276.0 L259.5,275.1 L260.5,274.2 L261.5,273.4 L262.5,272.5 L263.5,271.6 L264.5,270.8 L265.5,269.9 L266.5,269.0 L267.5,268.1 L268.5,267.3 L269.5,266.4 L270.5,265.5 L271.5,264.7 L272.5,263.8 L273.5,263.0 L274.5,262.1 L275.5,261.3 L276.5,260.5 L277.5,259.7 L278.5,258.9 L279.5,258.1 L280.5,257.3 L281.5,256.5 L282.5,255.7 L283.5,254.9 L284.5,254.1 L285.5,253.3 L286.5,252.5 L287.5,251.7 L288.5,250.9 L289.5,250.1 L290.5,249.3 L291.5,248.5 L292.5,247.7 L293.5,246.9 L294.5,246.1 L295.5,245.3 L296.5,244.5 L297.5,243.7 L298.5,243.0 L299.5,242.2 L300.5,241.5 L301.5,240.8 L302.5,240.2 L303.5,239.5 L304.5,238.8 L305.5,238.2 L306.5,237.5 L307.5,236.8 L308.5,236.2 L309.5,235.5 L310.5,234.8 L311.5,234.2 L312.5,233.5 L313.5,232.9 L314.5,232.4 L315.5,231.9 L316.5,231.4 L317.5,231.0 L318.5,230.6 L319.5,230.1 L320.5,229.7 L321.5,229.2 L322.5,228.8 L323.5,228.4 L324.5,227.9 L325.5,227.5 L326.5,227.1 L327.5,226.7 L328.5,226.3 L329.5,226.0 L330.5,225.8 L331.5,225.6 L332.5,225.4 L333.5,225.2 L334.5,225.0 L335.5,224.9 L336.5,224.7 L337.5,224.5 L338.5,224.3 L339.5,224.2 L340.5,224.0 L341.5,223.8 L342.5,223.6 L343.5,223.5 L344.5,223.3 L345.5,223.1 L346.5,222.9 L347.5,222.8 L348.5,222.6 L349.5,222.4 L350.5,222.3 L351.5,222.1 L352.5,222.0 L353.5,221.8 L354.5,221.7 L355.5,221.5 L356.5,221.4 L357.5,221.2 L358.5,221.1 L359.5,220.9 L360.5,220.8 L361.5,220.6 L362.5,220.5 L363.5,220.3 L364.5,220.2 L365.5,220.0 L366.5,219.9 L367.5,219.7 L368.5,219.6 L369.5,219.4 L370.5,219.3 L371.5,219.1 L372.5,219.0 L373.5,218.9 L374.5,218.7 L375.5,218.7 L376.5,218.6 L377.5,218.5 L378.5,218.4 L379.5,218.4 L380.5,218.3 L381.5,218.2 L382.5,218.2 L383.5,218.1 L384.5,218.0 L385.5,217.9 L386.5,217.9 L387.5,217.8 L388.5,217.7 L389.5,217.7 L390.5,217.6 L391.5,217.5 L392.5,217.5 L393.5,217.4 L394.5,217.3 L395.5,217.2 L396.5,217.2 L397.5,217.1 L398.5,217.0 L399.5,217.0 L400.5,216.9 L401.5,216.9 L402.5,216.8 L403.5,216.8 L404.5,216.7 L405.5,216.7 L406.5,216.6 L407.5,216.6 L408.5,216.5 L409.5,216.5 L410.5,216.4 L411.5,216.4 L412.5,216.3 L413.5,216.3 L414.5,216.2 L415.5,216.2 L416.5,216.1 L417.5,216.1 L418.5,216.1 L419.5,216.1 L420.5,216.1 L421.5,216.1 L422.5,216.2 L423.5,216.2 L424.5,216.3 L425.5,216.3 L426.5,216.4 L427.5,216.4 L428.5,216.5 L429.5,216.5 L430.5,216.6 L431.5,216.6 L432.5,216.7 L433.5,216.7 L434.5,216.8 L435.5,216.8 L436.5,216.9 L437.5,216.9 L438.5,217.0 L439.5,217.0 L440.5,217.1 L441.5,217.1 L442.5,217.2 L443.5,217.2 L444.5,217.3 L445.5,217.4 L446.5,217.4 L447.5,217.5 L448.5,217.7 L449.5,217.8 L450.5,218.0 L451.5,218.2 L452.5,218.4 L453.5,218.6 L454.5,218.8 L455.5,219.0 L456.5,219.2 L457.5,219.4 L458.5,219.6 L459.5,219.8 L460.5,220.0 L461.5,220.2 L462.5,220.4 L463.5,220.6 L464.5,220.8 L465.5,221.0 L466.5,221.2 L467.5,221.4 L468.5,221.6 L469.5,221.8 L470.5,222.0 L471.5,222.2 L472.5,222.4 L473.5,222.6 L474.5,222.8 L475.5,223.1 L476.5,223.3 L477.5,223.5 L478.5,223.7 L479.5,223.9 L480.5,224.2 L481.5,224.4 L482.5,224.6 L483.5,224.8 L484.5,225.0 L485.5,225.2 L486.5,225.5 L487.5,225.7 L488.5,225.9 L489.5,226.1 L490.5,226.3 L491.5,226.6 L492.5,226.8 L493.5,227.0 L494.5,227.2 L495.5,227.4 L496.5,227.7 L497.5,227.9 L498.5,228.1 L499.5,228.3 L500.5,228.6 L501.5,228.8 L502.5,229.0 L503.5,229.3 L504.5,229.5 L505.5,229.7 L506.5,229.9 L507.5,230.2 L508.5,230.4 L509.5,230.6 L510.5,230.8 L511.5,231.1 L512.5,231.3 L513.5,231.5 L514.5,231.8 L515.5,232.0 L516.5,232.2 L517.5,232.4 L518.5,232.7 L519.5,232.9 L520.5,233.1 L521.5,233.4 L522.5,233.6 L523.5,233.8 L524.5,234.0 L525.5,234.3 L526.5,234.5 L527.5,234.7 L528.5,235.0 L529.5,235.2 L530.5,235.4 L531.5,235.6 L532.5,235.9 L533.5,236.1 L534.5,236.3 L535.5,236.6 L536.5,236.8 L537.5,237.0 L538.5,237.2 L539.5,237.5 L540.5,237.7 L541.5,237.9 L542.5,238.1 L543.5,238.4 L544.5,238.6 L545.5,238.8 L546.5,239.1 L547.5,239.3 L548.5,239.5 L549.5,239.7 L550.5,240.0 L551.5,240.2 L552.5,240.4 L553.5,240.6 L554.5,240.9 L555.5,241.1 L556.5,241.3 L557.5,241.5 L558.5,241.8 L559.5,242.0 L560.5,242.2 L561.5,242.4 L562.5,242.6 L563.5,242.9 L564.5,243.1 L565.5,243.3 L566.5,243.5 L567.5,243.8 L568.5,244.0 L569.5,244.2 L570.5,244.4 L571.5,244.7 L572.5,244.9 L573.5,245.1 L574.5,245.3 L575.5,245.5 L576.5,245.7 L577.5,245.9 L578.5,246.1 L579.5,246.3 L580.5,246.5 L581.5,246.7 L582.5,246.9 L583.5,247.1 L584.5,247.3 L585.5,247.5 L586.5,247.7 L587.5,247.9 L588.5,248.1 L589.5,248.3 L590.5,248.5 L591.5,248.7 L592.5,248.9 L593.5,249.1 L594.5,249.3 L595.5,249.5 L596.5,249.7 L597.5,249.9 L598.5,250.1 L599.5,250.2 L600.5,250.4 L601.5,250.5 L602.5,250.7 L603.5,250.8 L604.5,251.0 L605.5,251.1 L606.5,251.3 L607.5,251.4 L608.5,251.6 L609.5,251.7 L610.5,251.9 L611.5,252.0 L612.5,252.2 L613.5,252.3 L614.5,252.5 L615.5,252.6 L616.5,252.8 L617.5,252.9 L618.5,253.1 L619.5,253.2 L620.5,253.4 L621.5,253.5 L622.5,253.7 L623.5,253.8 L624.5,253.9 L625.5,254.0 L626.5,254.1 L627.5,254.2 L628.5,254.2 L629.5,254.3 L630.5,254.4 L631.5,254.5 L632.5,254.6 L633.5,254.7 L634.5,254.8 L635.5,254.9 L636.5,255.0 L637.5,255.1 L638.5,255.1 L639.5,255.2 L640.5,255.3 L641.5,255.4 L642.5,255.5 L643.5,255.6 L644.5,255.7 L645.5,255.8 L646.5,255.9 L647.5,256.0 L648.5,256.1 L649.5,256.2 L650.5,256.4 L651.5,256.6 L652.5,256.7 L653.5,256.9 L654.5,257.0 L655.5,257.2 L656.5,257.4 L657.5,257.5 L658.5,257.7 L659.5,257.8 L660.5,258.0 L661.5,258.2 L662.5,258.3 L663.5,258.5 L664.5,258.6 L665.5,258.8 L666.5,259.0 L667.5,259.1 L668.5,259.3 L669.5,259.4 L670.5,259.6 L671.5,259.8 L672.5,259.9 L673.5,260.1 L674.5,260.3 L675.5,260.4 L676.5,260.6 L677.5,260.8 L678.5,260.9 L679.5,261.1 L680.5,261.2 L681.5,261.4 L682.5,261.6 L683.5,261.8 L684.5,261.9 L685.5,262.1 L686.5,262.2 L687.5,262.4 L688.5,262.6 L689.5,262.8 L690.5,262.9 L691.5,263.1 L692.5,263.2 L693.5,263.4 L694.5,263.6 L695.5,263.8 L696.5,263.9 L697.5,264.1 L698.5,264.2 L699.5,264.4 L700.5,264.6 L701.5,264.8 L702.5,264.9 L703.5,265.1 L704.5,265.3 L705.5,265.4 L706.5,265.6 L707.5,265.8 L708.5,265.9 L709.5,266.1 L710.5,266.3 L711.5,266.4 L712.5,266.6 L713.5,266.8 L714.5,267.0 L715.5,267.1 L716.5,267.3 L717.5,267.5 L718.5,267.6 L719.5,267.8 L720.5,268.0 L721.5,268.2 L722.5,268.3 L723.5,268.5 L724.5,268.7 L725.5,268.8 L726.5,269.0 L727.5,269.2 L728.5,269.3 L729.5,269.5 L730.5,269.7 L731.5,269.9 L732.5,270.0 L733.5,270.2 L734.5,270.4 L735.5,270.5 L736.5,270.7 L737.5,270.9 L738.5,271.0 L739.5,271.2 L740.5,271.4 L741.5,271.6 L742.5,271.7 L743.5,271.9 L744.5,272.1 L745.5,272.2 L746.5,272.4 L747.5,272.6 L748.5,272.7 L749.5,272.9 L750.5,273.0 L751.5,273.2 L752.5,273.3 L753.5,273.4 L754.5,273.5 L755.5,273.7 L756.5,273.8 L757.5,273.9 L758.5,274.0 L759.5,274.1 L760.5,274.3 L761.5,274.4 L762.5,274.5 L763.5,274.6 L764.5,274.7 L765.5,274.9 L766.5,275.0 L767.5,275.1 L768.5,275.2 L769.5,275.3 L770.5,275.5 L771.5,275.6 L772.5,275.7 L773.5,275.8 L774.5,275.9 L775.5,276.1 L776.5,276.2 L777.5,276.4 L778.5,276.5 L779.5,276.6 L780.5,276.8 L781.5,276.9 L782.5,277.1 L783.5,277.2 L784.5,277.3 L785.5,277.5 L786.5,277.6 L787.5,277.8 L788.5,277.9 L789.5,278.0 L790.5,278.2 L791.5,278.3 L792.5,278.5 L793.5,278.6 L794.5,278.7 L795.5,278.9 L796.5,279.0 L797.5,279.2 L798.5,279.3 L799.5,279.4 L800.5,279.6 L801.5,279.7 L802.5,279.8 L803.5,279.9 L804.5,280.0 L805.5,280.2 L806.5,280.3 L807.5,280.4 L808.5,280.5 L809.5,280.6 L810.5,280.8 L811.5,280.9 L812.5,281.0 L813.5,281.1 L814.5,281.2 L815.5,281.4 L816.5,281.5 L817.5,281.6 L818.5,281.7 L819.5,281.8 L820.5,282.0 L821.5,282.1 L822.5,282.2 L823.5,282.3 L824.5,282.4 L825.5,282.6 L826.5,282.7 L827.5,282.9 L828.5,283.0 L829.5,283.1 L830.5,283.3 L831.5,283.4 L832.5,283.6 L833.5,283.7 L834.5,283.8 L835.5,284.0 L836.5,284.1 L837.5,284.2 L838.5,284.4 L839.5,284.5 L840.5,284.7 L841.5,284.8 L842.5,285.0 L843.5,285.1 L844.5,285.2 L845.5,285.4 L846.5,285.5 L847.5,285.7 L848.5,285.8 L849.5,285.9 L850.5,286.0 L851.5,286.2 L852.5,286.3 L853.5,286.4 L854.5,286.5 L855.5,286.6 L856.5,286.7 L857.5,286.8 L858.5,286.9 L859.5,287.0 L860.5,287.2 L861.5,287.3 L862.5,287.4 L863.5,287.5 L864.5,287.6 L865.5,287.7 L866.5,287.8 L867.5,287.9 L868.5,288.0 L869.5,288.1 L870.5,288.3 L871.5,288.4 L872.5,288.5 L873.5,288.6 L874.5,288.7 L875.5,288.8 L876.5,289.0 L877.5,289.1 L878.5,289.3 L879.5,289.4 L880.5,289.6 L881.5,289.7 L882.5,289.9 L883.5,290.0 L884.5,290.2 L885.5,290.3 L886.5,290.5 L887.5,290.6 L888.5,290.8 L889.5,290.9 L890.5,291.1 L891.5,291.2 L892.5,291.4 L893.5,291.5 L894.5,291.7 L895.5,291.8 L896.5,292.0 L897.5,292.1 L898.5,292.3 L899.5,292.4 L900.5,292.6 L901.5,292.7 L902.5,292.9 L903.5,293.0 L904.5,293.1 L905.5,293.3 L906.5,293.4 L907.5,293.6 L908.5,293.7 L909.5,293.8 L910.5,294.0 L911.5,294.1 L912.5,294.2 L913.5,294.4 L914.5,294.5 L915.5,294.7 L916.5,294.8 L917.5,295.0 L918.5,295.1 L919.5,295.2 L920.5,295.4 L921.5,295.5 L922.5,295.7 L923.5,295.8 L924.5,295.9 L925.5,296.1 L926.5,296.2 L927.5,296.3 L928.5,296.5 L929.5,296.6 L930.5,296.7 L931.5,296.9 L932.5,297.0 L933.5,297.1 L934.5,297.3 L935.5,297.4 L936.5,297.5 L937.5,297.7 L938.5,297.8 L939.5,297.9 L940.5,298.1 L941.5,298.2 L942.5,298.3 L943.5,298.5 L944.5,298.6 L945.5,298.7 L946.5,298.9 L947.5,299.0 L948.5,299.1 L949.5,299.3 L950.5,299.4 L951.5,299.5 L952.5,299.7 L953.5,299.8 L954.5,299.9 L955.5,300.0 L956.5,300.1 L957.5,300.2 L958.5,300.3 L959.5,300.4 L960.5,300.5 L961.5,300.6 L962.5,300.7 L963.5,300.8 L964.5,300.9 L965.5,301.0 L966.5,301.1 L967.5,301.2 L968.5,301.3 L969.5,301.4 L970.5,301.5 L971.5,301.5 L972.5,301.6 L973.5,301.7 L974.5,301.8 L975.5,301.9 L976.5,302.0 L977.5,302.1 L978.5,302.2 L979.5,302.3 L980.5,302.4 L981.5,302.5 L982.5,302.6 L983.5,302.7 L984.5,302.8 L985.5,302.8 L986.5,302.9" fill="none" stroke="#ea5a0c" stroke-width="1.25" stroke-linejoin="round"/>
<path d="M2.5,418.7 L3.5,418.7 L4.5,418.7 L5.5,418.7 L6.5,418.7 L7.5,418.7 L8.5,418.7 L9.5,418.7 L10.5,418.7 L11.5,418.7 L12.5,418.7 L13.5,418.7 L14.5,418.7 L15.5,418.7 L16.5,418.7 L17.5,418.7 L18.5,418.7 L19.5,418.7 L20.5,418.7 L21.5,418.7 L22.5,418.7 L23.5,418.7 L24.5,418.7 L25.5,418.7 L26.5,418.7 L27.5,418.7 L28.5,418.7 L29.5,418.7 L30.5,418.1 L31.5,417.3 L32.5,416.5 L33.5,415.7 L34.5,414.8 L35.5,414.0 L36.5,413.2 L37.5,412.4 L38.5,411.6 L39.5,410.7 L40.5,409.9 L41.5,409.1 L42.5,408.3 L43.5,407.4 L44.5,406.6 L45.5,405.8 L46.5,405.0 L47.5,404.2 L48.5,403.3 L49.5,402.5 L50.5,401.7 L51.5,400.9 L52.5,400.1 L53.5,399.2 L54.5,398.4 L55.5,397.5 L56.5,396.7 L57.5,395.8 L58.5,394.9 L59.5,394.1 L60.5,393.2 L61.5,392.3 L62.5,391.5 L63.5,390.6 L64.5,389.7 L65.5,388.8 L66.5,388.0 L67.5,387.1 L68.5,386.2 L69.5,385.3 L70.5,384.5 L71.5,383.6 L72.5,382.7 L73.5,381.9 L74.5,381.0 L75.5,380.1 L76.5,379.2 L77.5,378.4 L78.5,377.5 L79.5,376.6 L80.5,375.7 L81.5,374.8 L82.5,373.8 L83.5,372.8 L84.5,371.6 L85.5,370.4 L86.5,369.3 L87.5,368.1 L88.5,366.9 L89.5,365.7 L90.5,364.5 L91.5,363.3 L92.5,362.1 L93.5,361.0 L94.5,359.8 L95.5,358.6 L96.5,357.4 L97.5,356.2 L98.5,355.0 L99.5,353.9 L100.5,352.7 L101.5,351.6 L102.5,350.4 L103.5,349.3 L104.5,348.2 L105.5,347.0 L106.5,345.9 L107.5,344.8 L108.5,343.6 L109.5,342.5 L110.5,341.4 L111.5,340.3 L112.5,339.1 L113.5,338.0 L114.5,336.9 L115.5,335.7 L116.5,334.6 L117.5,333.5 L118.5,332.3 L119.5,331.2 L120.5,330.1 L121.5,329.0 L122.5,327.8 L123.5,326.7 L124.5,325.5 L125.5,324.3 L126.5,323.1 L127.5,321.9 L128.5,320.6 L129.5,319.4 L130.5,318.1 L131.5,316.9 L132.5,315.6 L133.5,314.4 L134.5,313.1 L135.5,311.9 L136.5,310.6 L137.5,309.4 L138.5,308.1 L139.5,306.9 L140.5,305.6 L141.5,304.4 L142.5,303.1 L143.5,301.9 L144.5,300.6 L145.5,299.3 L146.5,297.9 L147.5,296.6 L148.5,295.2 L149.5,293.8 L150.5,292.5 L151.5,291.1 L152.5,289.7 L153.5,288.4 L154.5,287.0 L155.5,285.6 L156.5,284.2 L157.5,282.9 L158.5,281.5 L159.5,280.1 L160.5,278.8 L161.5,277.4 L162.5,276.0 L163.5,274.6 L164.5,273.3 L165.5,271.9 L166.5,270.4 L167.5,269.0 L168.5,267.6 L169.5,266.2 L170.5,264.7 L171.5,263.3 L172.5,261.9 L173.5,260.4 L174.5,259.0 L175.5,257.6 L176.5,256.3 L177.5,255.3 L178.5,254.4 L179.5,253.8 L180.5,253.4 L181.5,253.1 L182.5,252.6 L183.5,252.1 L184.5,251.5 L185.5,250.9 L186.5,250.2 L187.5,249.5 L188.5,248.8 L189.5,248.1 L190.5,247.4 L191.5,246.7 L192.5,246.0 L193.5,245.3 L194.5,244.7 L195.5,244.0 L196.5,243.4 L197.5,242.8 L198.5,242.3 L199.5,241.7 L200.5,241.2 L201.5,240.6 L202.5,240.1 L203.5,239.6 L204.5,239.0 L205.5,238.5 L206.5,237.9 L207.5,237.3 L208.5,236.8 L209.5,236.2 L210.5,235.7 L211.5,235.1 L212.5,234.5 L213.5,234.0 L214.5,233.4 L215.5,232.8 L216.5,232.3 L217.5,231.7 L218.5,231.2 L219.5,230.6 L220.5,230.0 L221.5,229.5 L222.5,228.9 L223.5,228.3 L224.5,227.8 L225.5,227.2 L226.5,226.6 L227.5,225.9 L228.5,225.3 L229.5,224.7 L230.5,224.1 L231.5,223.4 L232.5,222.8 L233.5,222.2 L234.5,221.6 L235.5,220.9 L236.5,220.3 L237.5,219.7 L238.5,219.1 L239.5,218.5 L240.5,218.0 L241.5,217.5 L242.5,216.9 L243.5,216.4 L244.5,215.9 L245.5,215.4 L246.5,214.9 L247.5,214.4 L248.5,213.8 L249.5,213.3 L250.5,212.8 L251.5,212.3 L252.5,211.8 L253.5,211.3 L254.5,210.9 L255.5,210.5 L256.5,210.2 L257.5,209.8 L258.5,209.5 L259.5,209.2 L260.5,208.8 L261.5,208.5 L262.5,208.2 L263.5,207.8 L264.5,207.5 L265.5,207.2 L266.5,206.8 L267.5,206.5 L268.5,206.2 L269.5,205.9 L270.5,205.7 L271.5,205.4 L272.5,205.2 L273.5,205.0 L274.5,204.7 L275.5,204.5 L276.5,204.2 L277.5,204.0 L278.5,203.8 L279.5,203.6 L280.5,203.3 L281.5,203.1 L282.5,202.9 L283.5,202.6 L284.5,202.4 L285.5,202.3 L286.5,202.1 L287.5,201.9 L288.5,201.8 L289.5,201.6 L290.5,201.4 L291.5,201.2 L292.5,201.1 L293.5,200.9 L294.5,200.8 L295.5,200.6 L296.5,200.4 L297.5,200.3 L298.5,200.2 L299.5,200.1 L300.5,200.1 L301.5,200.1 L302.5,200.1 L303.5,200.2 L304.5,200.2 L305.5,200.2 L306.5,200.3 L307.5,200.3 L308.5,200.4 L309.5,200.4 L310.5,200.4 L311.5,200.5 L312.5,200.5 L313.5,200.5 L314.5,200.6 L315.5,200.6 L316.5,200.7 L317.5,200.7 L318.5,200.8 L319.5,200.8 L320.5,200.9 L321.5,201.0 L322.5,201.2 L323.5,201.3 L324.5,201.4 L325.5,201.5 L326.5,201.6 L327.5,201.7 L328.5,201.9 L329.5,202.0 L330.5,202.1 L331.5,202.2 L332.5,202.3 L333.5,202.5 L334.5,202.7 L335.5,202.9 L336.5,203.1 L337.5,203.4 L338.5,203.6 L339.5,203.9 L340.5,204.1 L341.5,204.4 L342.5,204.6 L343.5,204.9 L344.5,205.1 L345.5,205.4 L346.5,205.6 L347.5,205.9 L348.5,206.1 L349.5,206.4 L350.5,206.6 L351.5,206.9 L352.5,207.1 L353.5,207.4 L354.5,207.6 L355.5,207.9 L356.5,208.1 L357.5,208.4 L358.5,208.6 L359.5,208.9 L360.5,209.1 L361.5,209.4 L362.5,209.6 L363.5,209.9 L364.5,210.1 L365.5,210.4 L366.5,210.6 L367.5,210.9 L368.5,211.1 L369.5,211.4 L370.5,211.6 L371.5,211.9 L372.5,212.1 L373.5,212.4 L374.5,212.7 L375.5,213.0 L376.5,213.3 L377.5,213.6 L378.5,213.9 L379.5,214.2 L380.5,214.5 L381.5,214.8 L382.5,215.2 L383.5,215.5 L384.5,215.8 L385.5,216.1 L386.5,216.4 L387.5,216.7 L388.5,217.0 L389.5,217.3 L390.5,217.7 L391.5,218.0 L392.5,218.3 L393.5,218.6 L394.5,218.9 L395.5,219.2 L396.5,219.5 L397.5,219.8 L398.5,220.2 L399.5,220.5 L400.5,220.8 L401.5,221.1 L402.5,221.4 L403.5,221.7 L404.5,222.0 L405.5,222.3 L406.5,222.7 L407.5,223.0 L408.5,223.3 L409.5,223.6 L410.5,223.9 L411.5,224.2 L412.5,224.5 L413.5,224.8 L414.5,225.1 L415.5,225.4 L416.5,225.8 L417.5,226.1 L418.5,226.4 L419.5,226.7 L420.5,226.9 L421.5,227.2 L422.5,227.6 L423.5,227.8 L424.5,228.2 L425.5,228.4 L426.5,228.8 L427.5,229.1 L428.5,229.4 L429.5,229.7 L430.5,230.0 L431.5,230.3 L432.5,230.5 L433.5,230.8 L434.5,231.1 L435.5,231.4 L436.5,231.7 L437.5,232.0 L438.5,232.3 L439.5,232.6 L440.5,232.9 L441.5,233.2 L442.5,233.5 L443.5,233.8 L444.5,234.0 L445.5,234.3 L446.5,234.6 L447.5,234.9 L448.5,235.2 L449.5,235.5 L450.5,235.8 L451.5,236.1 L452.5,236.4 L453.5,236.6 L454.5,236.9 L455.5,237.2 L456.5,237.5 L457.5,237.8 L458.5,238.0 L459.5,238.3 L460.5,238.6 L461.5,238.9 L462.5,239.1 L463.5,239.4 L464.5,239.7 L465.5,239.9 L466.5,240.2 L467.5,240.5 L468.5,240.8 L469.5,241.0 L470.5,241.3 L471.5,241.6 L472.5,241.8 L473.5,242.1 L474.5,242.3 L475.5,242.6 L476.5,242.8 L477.5,243.0 L478.5,243.2 L479.5,243.4 L480.5,243.7 L481.5,243.9 L482.5,244.1 L483.5,244.3 L484.5,244.5 L485.5,244.8 L486.5,245.0 L487.5,245.2 L488.5,245.4 L489.5,245.6 L490.5,245.8 L491.5,246.1 L492.5,246.3 L493.5,246.5 L494.5,246.7 L495.5,247.0 L496.5,247.2 L497.5,247.4 L498.5,247.6 L499.5,247.8 L500.5,248.0 L501.5,248.2 L502.5,248.4 L503.5,248.6 L504.5,248.8 L505.5,249.0 L506.5,249.2 L507.5,249.4 L508.5,249.6 L509.5,249.8 L510.5,250.0 L511.5,250.2 L512.5,250.4 L513.5,250.6 L514.5,250.8 L515.5,251.0 L516.5,251.2 L517.5,251.4 L518.5,251.6 L519.5,251.8 L520.5,252.0 L521.5,252.2 L522.5,252.4 L523.5,252.6 L524.5,252.8 L525.5,253.0 L526.5,253.2 L527.5,253.4 L528.5,253.6 L529.5,253.8 L530.5,254.0 L531.5,254.2 L532.5,254.4 L533.5,254.6 L534.5,254.8 L535.5,255.0 L536.5,255.2 L537.5,255.4 L538.5,255.6 L539.5,255.8 L540.5,256.0 L541.5,256.2 L542.5,256.4 L543.5,256.6 L544.5,256.8 L545.5,257.0 L546.5,257.2 L547.5,257.4 L548.5,257.5 L549.5,257.7 L550.5,257.9 L551.5,258.0 L552.5,258.1 L553.5,258.3 L554.5,258.4 L555.5,258.6 L556.5,258.7 L557.5,258.8 L558.5,259.0 L559.5,259.1 L560.5,259.2 L561.5,259.4 L562.5,259.5 L563.5,259.7 L564.5,259.8 L565.5,260.0 L566.5,260.1 L567.5,260.2 L568.5,260.4 L569.5,260.5 L570.5,260.7 L571.5,260.8 L572.5,260.9 L573.5,261.0 L574.5,261.1 L575.5,261.1 L576.5,261.2 L577.5,261.3 L578.5,261.3 L579.5,261.4 L580.5,261.4 L581.5,261.5 L582.5,261.6 L583.5,261.6 L584.5,261.7 L585.5,261.8 L586.5,261.8 L587.5,261.9 L588.5,261.9 L589.5,262.0 L590.5,262.1 L591.5,262.1 L592.5,262.2 L593.5,262.2 L594.5,262.3 L595.5,262.4 L596.5,262.4 L597.5,262.4 L598.5,262.5 L599.5,262.5 L600.5,262.5 L601.5,262.5 L602.5,262.5 L603.5,262.5 L604.5,262.5 L605.5,262.5 L606.5,262.5 L607.5,262.5 L608.5,262.5 L609.5,262.5 L610.5,262.5 L611.5,262.5 L612.5,262.5 L613.5,262.5 L614.5,262.5 L615.5,262.5 L616.5,262.5 L617.5,262.5 L618.5,262.5 L619.5,262.5 L620.5,262.5 L621.5,262.5 L622.5,262.5 L623.5,262.5 L624.5,262.6 L625.5,262.6 L626.5,262.7 L627.5,262.7 L628.5,262.8 L629.5,262.8 L630.5,262.9 L631.5,262.9 L632.5,263.0 L633.5,263.0 L634.5,263.1 L635.5,263.1 L636.5,263.2 L637.5,263.2 L638.5,263.3 L639.5,263.3 L640.5,263.4 L641.5,263.4 L642.5,263.5 L643.5,263.5 L644.5,263.6 L645.5,263.6 L646.5,263.7 L647.5,263.7 L648.5,263.8 L649.5,263.9 L650.5,264.0 L651.5,264.1 L652.5,264.2 L653.5,264.2 L654.5,264.3 L655.5,264.4 L656.5,264.5 L657.5,264.6 L658.5,264.7 L659.5,264.8 L660.5,264.9 L661.5,265.0 L662.5,265.1 L663.5,265.1 L664.5,265.2 L665.5,265.3 L666.5,265.4 L667.5,265.5 L668.5,265.6 L669.5,265.7 L670.5,265.8 L671.5,265.9 L672.5,266.0 L673.5,266.1 L674.5,266.3 L675.5,266.4 L676.5,266.6 L677.5,266.8 L678.5,266.9 L679.5,267.1 L680.5,267.2 L681.5,267.4 L682.5,267.6 L683.5,267.8 L684.5,267.9 L685.5,268.1 L686.5,268.2 L687.5,268.4 L688.5,268.6 L689.5,268.8 L690.5,268.9 L691.5,269.1 L692.5,269.2 L693.5,269.4 L694.5,269.6 L695.5,269.8 L696.5,269.9 L697.5,270.1 L698.5,270.2 L699.5,270.4 L700.5,270.6 L701.5,270.8 L702.5,270.9 L703.5,271.1 L704.5,271.3 L705.5,271.6 L706.5,271.8 L707.5,272.0 L708.5,272.3 L709.5,272.5 L710.5,272.7 L711.5,272.9 L712.5,273.2 L713.5,273.4 L714.5,273.6 L715.5,273.8 L716.5,274.1 L717.5,274.3 L718.5,274.5 L719.5,274.8 L720.5,275.0 L721.5,275.2 L722.5,275.4 L723.5,275.7 L724.5,275.9 L725.5,276.2 L726.5,276.5 L727.5,276.8 L728.5,277.1 L729.5,277.4 L730.5,277.7 L731.5,278.0 L732.5,278.3 L733.5,278.6 L734.5,278.9 L735.5,279.3 L736.5,279.6 L737.5,279.9 L738.5,280.2 L739.5,280.5 L740.5,280.8 L741.5,281.1 L742.5,281.4 L743.5,281.7 L744.5,282.0 L745.5,282.4 L746.5,282.7 L747.5,283.0 L748.5,283.3 L749.5,283.6 L750.5,283.8 L751.5,284.0 L752.5,284.2 L753.5,284.5 L754.5,284.7 L755.5,284.9 L756.5,285.1 L757.5,285.2 L758.5,285.4 L759.5,285.7 L760.5,285.9 L761.5,286.1 L762.5,286.2 L763.5,286.4 L764.5,286.7 L765.5,286.9 L766.5,287.1 L767.5,287.2 L768.5,287.5 L769.5,287.7 L770.5,287.9 L771.5,288.1 L772.5,288.2 L773.5,288.4 L774.5,288.6 L775.5,288.8 L776.5,289.0 L777.5,289.1 L778.5,289.3 L779.5,289.4 L780.5,289.6 L781.5,289.7 L782.5,289.9 L783.5,290.0 L784.5,290.2 L785.5,290.3 L786.5,290.5 L787.5,290.6 L788.5,290.8 L789.5,290.9 L790.5,291.1 L791.5,291.2 L792.5,291.4 L793.5,291.5 L794.5,291.7 L795.5,291.8 L796.5,292.0 L797.5,292.1 L798.5,292.3 L799.5,292.4 L800.5,292.5 L801.5,292.6 L802.5,292.8 L803.5,292.9 L804.5,293.0 L805.5,293.1 L806.5,293.2 L807.5,293.2 L808.5,293.4 L809.5,293.5 L810.5,293.6 L811.5,293.6 L812.5,293.8 L813.5,293.9 L814.5,293.9 L815.5,294.1 L816.5,294.1 L817.5,294.2 L818.5,294.4 L819.5,294.4 L820.5,294.6 L821.5,294.7 L822.5,294.8 L823.5,294.9 L824.5,295.0 L825.5,295.1 L826.5,295.2 L827.5,295.4 L828.5,295.5 L829.5,295.7 L830.5,295.8 L831.5,296.0 L832.5,296.1 L833.5,296.3 L834.5,296.4 L835.5,296.6 L836.5,296.7 L837.5,296.9 L838.5,297.0 L839.5,297.2 L840.5,297.3 L841.5,297.5 L842.5,297.6 L843.5,297.8 L844.5,297.9 L845.5,298.1 L846.5,298.2 L847.5,298.4 L848.5,298.5 L849.5,298.6 L850.5,298.8 L851.5,298.8 L852.5,298.9 L853.5,299.0 L854.5,299.1 L855.5,299.1 L856.5,299.2 L857.5,299.3 L858.5,299.3 L859.5,299.4 L860.5,299.5 L861.5,299.6 L862.5,299.6 L863.5,299.7 L864.5,299.8 L865.5,299.8 L866.5,299.9 L867.5,300.0 L868.5,300.0 L869.5,300.1 L870.5,300.2 L871.5,300.3 L872.5,300.3 L873.5,300.4 L874.5,300.5 L875.5,300.5 L876.5,300.6 L877.5,300.6 L878.5,300.7 L879.5,300.8 L880.5,300.8 L881.5,300.9 L882.5,300.9 L883.5,301.0 L884.5,301.1 L885.5,301.1 L886.5,301.2 L887.5,301.2 L888.5,301.3 L889.5,301.4 L890.5,301.4 L891.5,301.5 L892.5,301.6 L893.5,301.6 L894.5,301.7 L895.5,301.7 L896.5,301.8 L897.5,301.9 L898.5,301.9 L899.5,302.0 L900.5,302.0 L901.5,302.1 L902.5,302.2 L903.5,302.2 L904.5,302.3 L905.5,302.4 L906.5,302.5 L907.5,302.5 L908.5,302.6 L909.5,302.7 L910.5,302.7 L911.5,302.8 L912.5,302.9 L913.5,302.9 L914.5,303.0 L915.5,303.1 L916.5,303.2 L917.5,303.2 L918.5,303.3 L919.5,303.4 L920.5,303.4 L921.5,303.5 L922.5,303.6 L923.5,303.6 L924.5,303.7 L925.5,303.8 L926.5,303.9 L927.5,303.9 L928.5,304.0 L929.5,304.1 L930.5,304.2 L931.5,304.2 L932.5,304.3 L933.5,304.4 L934.5,304.5 L935.5,304.5 L936.5,304.6 L937.5,304.7 L938.5,304.8 L939.5,304.8 L940.5,304.9 L941.5,305.0 L942.5,305.1 L943.5,305.1 L944.5,305.2 L945.5,305.3 L946.5,305.4 L947.5,305.4 L948.5,305.5 L949.5,305.6 L950.5,305.7 L951.5,305.7 L952.5,305.8 L953.5,305.9 L954.5,306.0 L955.5,306.1 L956.5,306.1 L957.5,306.2 L958.5,306.3 L959.5,306.4 L960.5,306.5 L961.5,306.6 L962.5,306.7 L963.5,306.8 L964.5,306.9 L965.5,307.0 L966.5,307.1 L967.5,307.2 L968.5,307.3 L969.5,307.4 L970.5,307.5 L971.5,307.5 L972.5,307.6 L973.5,307.7 L974.5,307.8 L975.5,307.9 L976.5,308.0 L977.5,308.1 L978.5,308.2 L979.5,308.3 L980.5,308.4 L981.5,308.5 L982.5,308.6 L983.5,308.7 L984.5,308.8 L985.5,308.8 L986.5,308.9" fill="none" stroke="#8f12cf" stroke-width="1.25" stroke-linejoin="round"/>
<path d="M2.5,418.1 L3.5,418.1 L4.5,418.1 L5.5,418.1 L6.5,418.2 L7.5,418.2 L8.5,418.2 L9.5,418.2 L10.5,418.2 L11.5,418.2 L12.5,418.2 L13.5,418.3 L14.5,418.3 L15.5,418.3 L16.5,418.3 L17.5,418.3 L18.5,418.3 L19.5,418.3 L20.5,418.4 L21.5,418.4 L22.5,418.4 L23.5,418.4 L24.5,418.4 L25.5,418.4 L26.5,418.5 L27.5,418.5 L28.5,418.5 L29.5,418.5 L30.5,416.9 L31.5,414.6 L32.5,412.3 L33.5,410.0 L34.5,407.7 L35.5,405.4 L36.5,403.2 L37.5,400.9 L38.5,398.5 L39.5,396.2 L40.5,393.9 L41.5,391.6 L42.5,389.2 L43.5,386.9 L44.5,384.5 L45.5,382.2 L46.5,379.8 L47.5,377.5 L48.5,375.2 L49.5,372.8 L50.5,370.5 L51.5,368.1 L52.5,365.8 L53.5,363.4 L54.5,361.1 L55.5,358.8 L56.5,356.4 L57.5,354.1 L58.5,351.7 L59.5,349.4 L60.5,347.0 L61.5,344.7 L62.5,342.4 L63.5,340.0 L64.5,337.6 L65.5,335.3 L66.5,332.9 L67.5,330.5 L68.5,328.1 L69.5,325.7 L70.5,323.3 L71.5,320.9 L72.5,318.5 L73.5,316.1 L74.5,313.7 L75.5,311.3 L76.5,309.0 L77.5,306.7 L78.5,304.4 L79.5,302.3 L80.5,300.2 L81.5,298.1 L82.5,295.9 L83.5,293.8 L84.5,291.7 L85.5,289.6 L86.5,287.5 L87.5,285.6 L88.5,284.1 L89.5,283.0 L90.5,282.2 L91.5,281.7 L92.5,281.3 L93.5,280.9 L94.5,280.5 L95.5,280.1 L96.5,279.6 L97.5,279.1 L98.5,278.5 L99.5,277.9 L100.5,277.3 L101.5,276.6 L102.5,276.0 L103.5,275.4 L104.5,274.8 L105.5,274.2 L106.5,273.6 L107.5,273.0 L108.5,272.4 L109.5,271.8 L110.5,271.1 L111.5,270.5 L112.5,269.9 L113.5,269.3 L114.5,268.7 L115.5,268.1 L116.5,267.5 L117.5,266.9 L118.5,266.2 L119.5,265.6 L120.5,265.0 L121.5,264.4 L122.5,263.8 L123.5,263.2 L124.5,262.6 L125.5,262.0 L126.5,261.4 L127.5,260.8 L128.5,260.1 L129.5,259.5 L130.5,258.9 L131.5,258.3 L132.5,257.6 L133.5,257.0 L134.5,256.3 L135.5,255.7 L136.5,255.0 L137.5,254.3 L138.5,253.6 L139.5,253.0 L140.5,252.3 L141.5,251.5 L142.5,250.8 L143.5,250.0 L144.5,249.2 L145.5,248.4 L146.5,247.6 L147.5,246.8 L148.5,246.0 L149.5,245.2 L150.5,244.4 L151.5,243.5 L152.5,242.6 L153.5,241.7 L154.5,240.8 L155.5,239.9 L156.5,239.0 L157.5,238.1 L158.5,237.2 L159.5,236.2 L160.5,235.3 L161.5,234.3 L162.5,233.3 L163.5,232.3 L164.5,231.3 L165.5,230.3 L166.5,229.3 L167.5,228.3 L168.5,227.4 L169.5,226.5 L170.5,225.7 L171.5,224.9 L172.5,224.1 L173.5,223.3 L174.5,222.5 L175.5,221.7 L176.5,221.0 L177.5,220.3 L178.5,219.7 L179.5,219.1 L180.5,218.6 L181.5,218.1 L182.5,217.5 L183.5,217.0 L184.5,216.5 L185.5,216.0 L186.5,215.6 L187.5,215.2 L188.5,214.9 L189.5,214.6 L190.5,214.3 L191.5,214.0 L192.5,213.7 L193.5,213.4 L194.5,213.1 L195.5,212.8 L196.5,212.4 L197.5,212.0 L198.5,211.6 L199.5,211.1 L200.5,210.6 L201.5,210.2 L202.5,209.8 L203.5,209.5 L204.5,209.3 L205.5,209.1 L206.5,208.9 L207.5,208.8 L208.5,208.6 L209.5,208.4 L210.5,208.3 L211.5,208.1 L212.5,207.9 L213.5,207.7 L214.5,207.5 L215.5,207.3 L216.5,207.0 L217.5,206.7 L218.5,206.3 L219.5,206.0 L220.5,205.7 L221.5,205.3 L222.5,205.0 L223.5,204.7 L224.5,204.3 L225.5,204.0 L226.5,203.7 L227.5,203.3 L228.5,203.0 L229.5,202.7 L230.5,202.4 L231.5,202.1 L232.5,201.8 L233.5,201.5 L234.5,201.2 L235.5,201.0 L236.5,200.7 L237.5,200.4 L238.5,200.1 L239.5,199.8 L240.5,199.5 L241.5,199.2 L242.5,198.8 L243.5,198.5 L244.5,198.2 L245.5,197.8 L246.5,197.5 L247.5,197.2 L248.5,196.8 L249.5,196.5 L250.5,196.2 L251.5,195.8 L252.5,195.5 L253.5,195.3 L254.5,195.1 L255.5,194.9 L256.5,194.8 L257.5,194.7 L258.5,194.6 L259.5,194.5 L260.5,194.5 L261.5,194.4 L262.5,194.3 L263.5,194.2 L264.5,194.1 L265.5,194.0 L266.5,194.0 L267.5,193.9 L268.5,193.8 L269.5,193.8 L270.5,193.8 L271.5,193.8 L272.5,193.8 L273.5,193.8 L274.5,193.8 L275.5,193.8 L276.5,193.8 L277.5,193.8 L278.5,193.8 L279.5,193.8 L280.5,193.8 L281.5,193.8 L282.5,193.8 L283.5,193.8 L284.5,193.8 L285.5,193.8 L286.5,193.8 L287.5,193.8 L288.5,193.9 L289.5,194.0 L290.5,194.2 L291.5,194.4 L292.5,194.6 L293.5,194.9 L294.5,195.1 L295.5,195.4 L296.5,195.6 L297.5,195.9 L298.5,196.1 L299.5,196.4 L300.5,196.6 L301.5,196.9 L302.5,197.1 L303.5,197.4 L304.5,197.7 L305.5,198.0 L306.5,198.3 L307.5,198.7 L308.5,199.0 L309.5,199.3 L310.5,199.7 L311.5,200.0 L312.5,200.3 L313.5,200.7 L314.5,201.0 L315.5,201.3 L316.5,201.7 L317.5,202.0 L318.5,202.4 L319.5,202.9 L320.5,203.4 L321.5,203.9 L322.5,204.5 L323.5,205.1 L324.5,205.6 L325.5,206.2 L326.5,206.8 L327.5,207.3 L328.5,207.9 L329.5,208.5 L330.5,209.0 L331.5,209.6 L332.5,210.2 L333.5,210.8 L334.5,211.5 L335.5,212.2 L336.5,212.9 L337.5,213.7 L338.5,214.4 L339.5,215.2 L340.5,216.0 L341.5,216.8 L342.5,217.5 L343.5,218.3 L344.5,219.1 L345.5,219.8 L346.5,220.6 L347.5,221.3 L348.5,222.1 L349.5,222.8 L350.5,223.5 L351.5,224.2 L352.5,224.9 L353.5,225.6 L354.5,226.2 L355.5,226.9 L356.5,227.6 L357.5,228.3 L358.5,229.0 L359.5,229.6 L360.5,230.3 L361.5,230.8 L362.5,231.3 L363.5,231.7 L364.5,232.0 L365.5,232.3 L366.5,232.7 L367.5,233.0 L368.5,233.3 L369.5,233.7 L370.5,234.0 L371.5,234.3 L372.5,234.7 L373.5,235.0 L374.5,235.3 L375.5,235.6 L376.5,235.9 L377.5,236.2 L378.5,236.4 L379.5,236.7 L380.5,236.9 L381.5,237.1 L382.5,237.3 L383.5,237.5 L384.5,237.8 L385.5,238.0 L386.5,238.2 L387.5,238.4 L388.5,238.6 L389.5,238.7 L390.5,238.9 L391.5,239.0 L392.5,239.0 L393.5,239.1 L394.5,239.2 L395.5,239.3 L396.5,239.4 L397.5,239.5 L398.5,239.5 L399.5,239.6 L400.5,239.7 L401.5,239.8 L402.5,239.9 L403.5,240.0 L404.5,240.0 L405.5,240.1 L406.5,240.2 L407.5,240.2 L408.5,240.3 L409.5,240.4 L410.5,240.4 L411.5,240.5 L412.5,240.6 L413.5,240.6 L414.5,240.7 L415.5,240.8 L416.5,240.8 L417.5,240.9 L418.5,240.9 L419.5,240.9 L420.5,240.9 L421.5,240.8 L422.5,240.8 L423.5,240.7 L424.5,240.6 L425.5,240.6 L426.5,240.5 L427.5,240.4 L428.5,240.4 L429.5,240.3 L430.5,240.2 L431.5,240.2 L432.5,240.1 L433.5,240.1 L434.5,240.2 L435.5,240.3 L436.5,240.4 L437.5,240.6 L438.5,240.8 L439.5,240.9 L440.5,241.1 L441.5,241.2 L442.5,241.4 L443.5,241.6 L444.5,241.8 L445.5,241.9 L446.5,242.1 L447.5,242.3 L448.5,242.5 L449.5,242.7 L450.5,242.9 L451.5,243.1 L452.5,243.4 L453.5,243.6 L454.5,243.9 L455.5,244.1 L456.5,244.4 L457.5,244.6 L458.5,244.9 L459.5,245.1 L460.5,245.4 L461.5,245.6 L462.5,245.9 L463.5,246.3 L464.5,246.7 L465.5,247.1 L466.5,247.5 L467.5,248.0 L468.5,248.4 L469.5,248.8 L470.5,249.2 L471.5,249.7 L472.5,250.1 L473.5,250.6 L474.5,251.0 L475.5,251.4 L476.5,251.9 L477.5,252.3 L478.5,252.8 L479.5,253.3 L480.5,253.8 L481.5,254.2 L482.5,254.8 L483.5,255.3 L484.5,255.8 L485.5,256.2 L486.5,256.8 L487.5,257.2 L488.5,257.8 L489.5,258.2 L490.5,258.8 L491.5,259.2 L492.5,259.7 L493.5,260.1 L494.5,260.4 L495.5,260.8 L496.5,261.1 L497.5,261.4 L498.5,261.6 L499.5,261.9 L500.5,262.2 L501.5,262.6 L502.5,262.9 L503.5,263.1 L504.5,263.4 L505.5,263.8 L506.5,264.0 L507.5,264.3 L508.5,264.4 L509.5,264.6 L510.5,264.7 L511.5,264.7 L512.5,264.8 L513.5,264.9 L514.5,264.9 L515.5,265.0 L516.5,265.1 L517.5,265.1 L518.5,265.2 L519.5,265.3 L520.5,265.3 L521.5,265.4 L522.5,265.4 L523.5,265.5 L524.5,265.5 L525.5,265.6 L526.5,265.6 L527.5,265.6 L528.5,265.6 L529.5,265.6 L530.5,265.7 L531.5,265.7 L532.5,265.7 L533.5,265.7 L534.5,265.7 L535.5,265.8 L536.5,265.8 L537.5,265.8 L538.5,265.8 L539.5,265.8 L540.5,265.9 L541.5,265.9 L542.5,265.9 L543.5,265.9 L544.5,265.9 L545.5,266.0 L546.5,266.0 L547.5,266.0 L548.5,266.0 L549.5,266.0 L550.5,266.0 L551.5,266.0 L552.5,266.0 L553.5,266.0 L554.5,266.0 L555.5,266.0 L556.5,266.0 L557.5,266.0 L558.5,266.0 L559.5,266.0 L560.5,266.0 L561.5,266.0 L562.5,266.0 L563.5,266.0 L564.5,266.0 L565.5,266.0 L566.5,266.0 L567.5,266.0 L568.5,266.0 L569.5,266.0 L570.5,266.0 L571.5,266.0 L572.5,266.0 L573.5,265.9 L574.5,265.9 L575.5,265.8 L576.5,265.8 L577.5,265.7 L578.5,265.6 L579.5,265.6 L580.5,265.5 L581.5,265.4 L582.5,265.4 L583.5,265.3 L584.5,265.2 L585.5,265.2 L586.5,265.1 L587.5,265.0 L588.5,264.9 L589.5,264.7 L590.5,264.6 L591.5,264.4 L592.5,264.2 L593.5,264.1 L594.5,263.9 L595.5,263.8 L596.5,263.6 L597.5,263.4 L598.5,263.2 L599.5,263.1 L600.5,262.9 L601.5,262.8 L602.5,262.6 L603.5,262.5 L604.5,262.4 L605.5,262.3 L606.5,262.2 L607.5,262.1 L608.5,262.0 L609.5,261.9 L610.5,261.8 L611.5,261.7 L612.5,261.6 L613.5,261.5 L614.5,261.4 L615.5,261.2 L616.5,261.2 L617.5,261.1 L618.5,261.1 L619.5,261.2 L620.5,261.2 L621.5,261.4 L622.5,261.4 L623.5,261.6 L624.5,261.6 L625.5,261.8 L626.5,261.9 L627.5,261.9 L628.5,262.1 L629.5,262.2 L630.5,262.2 L631.5,262.4 L632.5,262.5 L633.5,262.6 L634.5,262.8 L635.5,263.0 L636.5,263.2 L637.5,263.4 L638.5,263.6 L639.5,263.8 L640.5,264.0 L641.5,264.2 L642.5,264.4 L643.5,264.6 L644.5,264.8 L645.5,265.0 L646.5,265.2 L647.5,265.4 L648.5,265.6 L649.5,265.7 L650.5,265.9 L651.5,266.1 L652.5,266.2 L653.5,266.4 L654.5,266.6 L655.5,266.8 L656.5,266.9 L657.5,267.1 L658.5,267.2 L659.5,267.4 L660.5,267.6 L661.5,267.8 L662.5,268.0 L663.5,268.3 L664.5,268.7 L665.5,269.1 L666.5,269.6 L667.5,270.0 L668.5,270.5 L669.5,270.9 L670.5,271.4 L671.5,271.8 L672.5,272.3 L673.5,272.8 L674.5,273.3 L675.5,273.8 L676.5,274.2 L677.5,274.8 L678.5,275.2 L679.5,275.8 L680.5,276.2 L681.5,276.7 L682.5,277.2 L683.5,277.5 L684.5,277.9 L685.5,278.1 L686.5,278.4 L687.5,278.6 L688.5,278.9 L689.5,279.1 L690.5,279.4 L691.5,279.6 L692.5,279.9 L693.5,280.1 L694.5,280.4 L695.5,280.6 L696.5,280.9 L697.5,281.1 L698.5,281.4 L699.5,281.6 L700.5,281.9 L701.5,282.2 L702.5,282.5 L703.5,282.9 L704.5,283.3 L705.5,283.8 L706.5,284.3 L707.5,284.8 L708.5,285.4 L709.5,285.9 L710.5,286.4 L711.5,286.9 L712.5,287.4 L713.5,287.9 L714.5,288.4 L715.5,288.8 L716.5,289.1 L717.5,289.4 L718.5,289.6 L719.5,289.9 L720.5,290.1 L721.5,290.4 L722.5,290.6 L723.5,290.9 L724.5,291.1 L725.5,291.4 L726.5,291.6 L727.5,291.9 L728.5,292.1 L729.5,292.3 L730.5,292.5 L731.5,292.6 L732.5,292.7 L733.5,292.7 L734.5,292.8 L735.5,292.8 L736.5,292.9 L737.5,293.0 L738.5,293.0 L739.5,293.1 L740.5,293.2 L741.5,293.2 L742.5,293.3 L743.5,293.3 L744.5,293.4 L745.5,293.5 L746.5,293.5 L747.5,293.6 L748.5,293.7 L749.5,293.7 L750.5,293.8 L751.5,293.8 L752.5,293.9 L753.5,293.9 L754.5,294.0 L755.5,294.0 L756.5,294.1 L757.5,294.1 L758.5,294.2 L759.5,294.2 L760.5,294.3 L761.5,294.3 L762.5,294.4 L763.5,294.4 L764.5,294.5 L765.5,294.5 L766.5,294.6 L767.5,294.6 L768.5,294.7 L769.5,294.7 L770.5,294.8 L771.5,294.8 L772.5,294.9 L773.5,294.9 L774.5,295.0 L775.5,295.0 L776.5,295.0 L777.5,295.0 L778.5,295.0 L779.5,295.0 L780.5,295.0 L781.5,295.0 L782.5,295.0 L783.5,295.0 L784.5,295.0 L785.5,295.0 L786.5,295.0 L787.5,295.0 L788.5,295.0 L789.5,295.0 L790.5,295.0 L791.5,295.0 L792.5,295.0 L793.5,295.0 L794.5,295.0 L795.5,295.0 L796.5,295.0 L797.5,295.0 L798.5,295.0 L799.5,295.0 L800.5,295.0 L801.5,295.0 L802.5,295.0 L803.5,295.0 L804.5,295.1 L805.5,295.1 L806.5,295.3 L807.5,295.4 L808.5,295.6 L809.5,295.8 L810.5,295.9 L811.5,296.1 L812.5,296.2 L813.5,296.4 L814.5,296.6 L815.5,296.8 L816.5,296.9 L817.5,297.1 L818.5,297.2 L819.5,297.4 L820.5,297.5 L821.5,297.7 L822.5,297.8 L823.5,297.9 L824.5,298.1 L825.5,298.2 L826.5,298.3 L827.5,298.4 L828.5,298.6 L829.5,298.7 L830.5,298.8 L831.5,298.9 L832.5,299.1 L833.5,299.2 L834.5,299.3 L835.5,299.4 L836.5,299.6 L837.5,299.7 L838.5,299.8 L839.5,300.0 L840.5,300.2 L841.5,300.4 L842.5,300.6 L843.5,300.9 L844.5,301.1 L845.5,301.4 L846.5,301.6 L847.5,301.9 L848.5,302.1 L849.5,302.4 L850.5,302.6 L851.5,302.9 L852.5,303.1 L853.5,303.4 L854.5,303.6 L855.5,303.8 L856.5,304.0 L857.5,304.1 L858.5,304.3 L859.5,304.4 L860.5,304.6 L861.5,304.7 L862.5,304.9 L863.5,305.0 L864.5,305.2 L865.5,305.3 L866.5,305.5 L867.5,305.6 L868.5,305.8 L869.5,305.8 L870.5,305.9 L871.5,305.9 L872.5,305.8 L873.5,305.8 L874.5,305.7 L875.5,305.6 L876.5,305.6 L877.5,305.5 L878.5,305.4 L879.5,305.4 L880.5,305.3 L881.5,305.2 L882.5,305.2 L883.5,305.1 L884.5,305.1 L885.5,305.1 L886.5,305.1 L887.5,305.2 L888.5,305.2 L889.5,305.3 L890.5,305.4 L891.5,305.4 L892.5,305.5 L893.5,305.6 L894.5,305.6 L895.5,305.7 L896.5,305.8 L897.5,305.8 L898.5,305.9 L899.5,305.9 L900.5,305.9 L901.5,305.9 L902.5,305.9 L903.5,305.9 L904.5,305.8 L905.5,305.8 L906.5,305.7 L907.5,305.7 L908.5,305.7 L909.5,305.6 L910.5,305.6 L911.5,305.5 L912.5,305.5 L913.5,305.5 L914.5,305.4 L915.5,305.4 L916.5,305.3 L917.5,305.3 L918.5,305.3 L919.5,305.2 L920.5,305.2 L921.5,305.1 L922.5,305.1 L923.5,305.1 L924.5,305.1 L925.5,305.1 L926.5,305.1 L927.5,305.2 L928.5,305.2 L929.5,305.3 L930.5,305.4 L931.5,305.4 L932.5,305.5 L933.5,305.6 L934.5,305.6 L935.5,305.7 L936.5,305.8 L937.5,305.8 L938.5,305.9 L939.5,306.0 L940.5,306.1 L941.5,306.3 L942.5,306.5 L943.5,306.6 L944.5,306.8 L945.5,307.0 L946.5,307.2 L947.5,307.4 L948.5,307.6 L949.5,307.7 L950.5,307.9 L951.5,308.1 L952.5,308.3 L953.5,308.5 L954.5,308.6 L955.5,308.8 L956.5,309.0 L957.5,309.1 L958.5,309.3 L959.5,309.5 L960.5,309.6 L961.5,309.8 L962.5,309.9 L963.5,310.1 L964.5,310.2 L965.5,310.4 L966.5,310.5 L967.5,310.7 L968.5,310.9 L969.5,311.0 L970.5,311.2 L971.5,311.3 L972.5,311.5 L973.5,311.6 L974.5,311.8 L975.5,312.0 L976.5,312.1 L977.5,312.3 L978.5,312.4 L979.5,312.6 L980.5,312.7 L981.5,312.9 L982.5,313.0 L983.5,313.2 L984.5,313.4 L985.5,313.5 L986.5,313.6" fill="none" stroke="#1458ee" stroke-width="1.25" stroke-linejoin="round"/>
<path d="M2.5,417.3 L3.5,417.3 L4.5,417.3 L5.5,417.3 L6.5,417.3 L7.5,417.3 L8.5,417.3 L9.5,417.3 L10.5,417.3 L11.5,417.3 L12.5,417.3 L13.5,417.3 L14.5,417.3 L15.5,417.4 L16.5,417.4 L17.5,417.4 L18.5,417.4 L19.5,417.4 L20.5,417.4 L21.5,417.4 L22.5,417.4 L23.5,417.4 L24.5,417.4 L25.5,417.4 L26.5,417.4 L27.5,417.6 L28.5,417.9 L29.5,418.2 L30.5,414.7 L31.5,409.6 L32.5,404.4 L33.5,399.3 L34.5,395.1 L35.5,391.2 L36.5,387.2 L37.5,383.3 L38.5,379.4 L39.5,375.5 L40.5,371.6 L41.5,367.7 L42.5,363.8 L43.5,359.9 L44.5,355.8 L45.5,351.6 L46.5,347.1 L47.5,342.6 L48.5,338.0 L49.5,333.4 L50.5,328.9 L51.5,324.3 L52.5,319.7 L53.5,315.3 L54.5,311.0 L55.5,307.0 L56.5,303.0 L57.5,299.0 L58.5,295.9 L59.5,294.2 L60.5,293.6 L61.5,293.4 L62.5,293.2 L63.5,293.1 L64.5,292.7 L65.5,291.9 L66.5,290.8 L67.5,289.6 L68.5,288.3 L69.5,287.0 L70.5,285.7 L71.5,284.5 L72.5,283.2 L73.5,281.9 L74.5,280.7 L75.5,279.7 L76.5,278.8 L77.5,278.0 L78.5,277.2 L79.5,276.4 L80.5,275.6 L81.5,274.8 L82.5,274.1 L83.5,273.6 L84.5,273.3 L85.5,272.9 L86.5,272.5 L87.5,272.1 L88.5,271.8 L89.5,271.4 L90.5,271.0 L91.5,270.7 L92.5,270.3 L93.5,269.9 L94.5,269.6 L95.5,269.3 L96.5,269.2 L97.5,269.3 L98.5,269.5 L99.5,269.7 L100.5,269.9 L101.5,270.1 L102.5,270.3 L103.5,270.5 L104.5,270.6 L105.5,270.4 L106.5,269.9 L107.5,269.3 L108.5,268.7 L109.5,268.0 L110.5,267.4 L111.5,266.8 L112.5,266.2 L113.5,265.6 L114.5,265.0 L115.5,264.4 L116.5,263.8 L117.5,263.2 L118.5,262.7 L119.5,262.1 L120.5,261.5 L121.5,260.9 L122.5,260.3 L123.5,259.5 L124.5,258.6 L125.5,257.6 L126.5,256.6 L127.5,255.6 L128.5,254.6 L129.5,253.6 L130.5,252.6 L131.5,251.6 L132.5,250.4 L133.5,249.1 L134.5,247.7 L135.5,246.3 L136.5,244.9 L137.5,243.5 L138.5,242.1 L139.5,240.8 L140.5,239.4 L141.5,237.9 L142.5,236.4 L143.5,234.9 L144.5,233.4 L145.5,231.9 L146.5,230.4 L147.5,228.9 L148.5,227.6 L149.5,226.7 L150.5,226.0 L151.5,225.4 L152.5,224.8 L153.5,224.2 L154.5,223.6 L155.5,222.9 L156.5,222.3 L157.5,221.7 L158.5,221.1 L159.5,220.5 L160.5,219.9 L161.5,219.3 L162.5,218.7 L163.5,218.1 L164.5,217.5 L165.5,217.0 L166.5,216.4 L167.5,215.9 L168.5,215.4 L169.5,214.9 L170.5,214.4 L171.5,213.9 L172.5,213.4 L173.5,213.0 L174.5,212.6 L175.5,212.4 L176.5,212.2 L177.5,212.0 L178.5,211.8 L179.5,211.6 L180.5,211.4 L181.5,211.2 L182.5,211.0 L183.5,210.8 L184.5,210.7 L185.5,210.5 L186.5,210.4 L187.5,210.2 L188.5,210.1 L189.5,209.9 L190.5,209.8 L191.5,209.7 L192.5,209.5 L193.5,209.4 L194.5,209.2 L195.5,209.1 L196.5,208.9 L197.5,208.8 L198.5,208.7 L199.5,208.5 L200.5,208.4 L201.5,208.3 L202.5,208.2 L203.5,208.0 L204.5,207.9 L205.5,207.8 L206.5,207.6 L207.5,207.4 L208.5,207.1 L209.5,206.6 L210.5,206.2 L211.5,205.8 L212.5,205.4 L213.5,204.9 L214.5,204.5 L215.5,204.1 L216.5,203.6 L217.5,203.2 L218.5,202.8 L219.5,202.4 L220.5,201.9 L221.5,201.5 L222.5,201.1 L223.5,200.6 L224.5,200.2 L225.5,199.8 L226.5,199.3 L227.5,198.9 L228.5,198.5 L229.5,198.0 L230.5,197.6 L231.5,197.2 L232.5,196.7 L233.5,196.3 L234.5,195.9 L235.5,195.4 L236.5,195.0 L237.5,194.7 L238.5,194.4 L239.5,194.0 L240.5,193.7 L241.5,193.4 L242.5,193.1 L243.5,192.8 L244.5,192.4 L245.5,192.1 L246.5,191.8 L247.5,191.5 L248.5,191.2 L249.5,191.2 L250.5,191.3 L251.5,191.6 L252.5,191.8 L253.5,192.0 L254.5,192.2 L255.5,192.4 L256.5,192.7 L257.5,192.9 L258.5,193.1 L259.5,193.3 L260.5,193.5 L261.5,193.7 L262.5,193.8 L263.5,193.9 L264.5,194.0 L265.5,194.2 L266.5,194.2 L267.5,194.3 L268.5,194.4 L269.5,194.5 L270.5,194.6 L271.5,194.7 L272.5,194.8 L273.5,194.9 L274.5,194.9 L275.5,194.9 L276.5,194.8 L277.5,194.7 L278.5,194.6 L279.5,194.5 L280.5,194.5 L281.5,194.4 L282.5,194.3 L283.5,194.2 L284.5,194.1 L285.5,194.0 L286.5,194.0 L287.5,193.9 L288.5,193.9 L289.5,194.0 L290.5,194.3 L291.5,194.8 L292.5,195.1 L293.5,195.6 L294.5,195.9 L295.5,196.3 L296.5,196.7 L297.5,197.2 L298.5,197.5 L299.5,197.9 L300.5,198.3 L301.5,198.9 L302.5,199.5 L303.5,200.2 L304.5,200.9 L305.5,201.6 L306.5,202.4 L307.5,203.1 L308.5,203.8 L309.5,204.6 L310.5,205.3 L311.5,206.0 L312.5,206.7 L313.5,207.4 L314.5,208.2 L315.5,208.9 L316.5,209.6 L317.5,210.3 L318.5,211.0 L319.5,211.8 L320.5,212.5 L321.5,213.2 L322.5,213.9 L323.5,214.6 L324.5,215.4 L325.5,216.1 L326.5,216.9 L327.5,217.6 L328.5,218.4 L329.5,219.1 L330.5,219.9 L331.5,220.6 L332.5,221.4 L333.5,222.2 L334.5,223.0 L335.5,224.0 L336.5,225.0 L337.5,226.0 L338.5,227.0 L339.5,228.0 L340.5,229.0 L341.5,230.0 L342.5,231.0 L343.5,232.0 L344.5,233.0 L345.5,234.0 L346.5,234.8 L347.5,235.5 L348.5,236.0 L349.5,236.4 L350.5,236.9 L351.5,237.4 L352.5,237.9 L353.5,238.4 L354.5,238.8 L355.5,239.3 L356.5,239.8 L357.5,240.3 L358.5,240.6 L359.5,240.7 L360.5,240.6 L361.5,240.3 L362.5,240.0 L363.5,239.7 L364.5,239.5 L365.5,239.2 L366.5,238.9 L367.5,238.6 L368.5,238.3 L369.5,238.1 L370.5,237.8 L371.5,237.5 L372.5,237.2 L373.5,236.9 L374.5,236.6 L375.5,236.3 L376.5,236.0 L377.5,235.7 L378.5,235.4 L379.5,235.1 L380.5,234.8 L381.5,234.5 L382.5,234.2 L383.5,234.0 L384.5,233.9 L385.5,234.0 L386.5,234.1 L387.5,234.3 L388.5,234.4 L389.5,234.6 L390.5,234.7 L391.5,234.9 L392.5,235.0 L393.5,235.2 L394.5,235.3 L395.5,235.5 L396.5,235.6 L397.5,235.8 L398.5,236.0 L399.5,236.2 L400.5,236.5 L401.5,236.8 L402.5,237.2 L403.5,237.5 L404.5,237.8 L405.5,238.2 L406.5,238.5 L407.5,238.8 L408.5,239.2 L409.5,239.5 L410.5,239.8 L411.5,240.2 L412.5,240.5 L413.5,240.8 L414.5,240.9 L415.5,241.0 L416.5,241.0 L417.5,241.0 L418.5,241.0 L419.5,241.0 L420.5,241.0 L421.5,241.0 L422.5,241.0 L423.5,241.0 L424.5,241.0 L425.5,241.0 L426.5,241.0 L427.5,241.0 L428.5,241.0 L429.5,241.1 L430.5,241.1 L431.5,241.2 L432.5,241.3 L433.5,241.4 L434.5,241.6 L435.5,241.6 L436.5,241.8 L437.5,241.8 L438.5,241.9 L439.5,242.0 L440.5,242.2 L441.5,242.2 L442.5,242.3 L443.5,242.5 L444.5,242.7 L445.5,242.9 L446.5,243.2 L447.5,243.5 L448.5,243.8 L449.5,244.0 L450.5,244.3 L451.5,244.6 L452.5,244.9 L453.5,245.2 L454.5,245.4 L455.5,245.7 L456.5,246.2 L457.5,246.8 L458.5,247.5 L459.5,248.3 L460.5,249.1 L461.5,249.8 L462.5,250.6 L463.5,251.3 L464.5,252.0 L465.5,252.6 L466.5,253.3 L467.5,253.9 L468.5,254.6 L469.5,255.2 L470.5,255.9 L471.5,256.5 L472.5,257.2 L473.5,257.8 L474.5,258.5 L475.5,259.2 L476.5,259.9 L477.5,260.6 L478.5,261.2 L479.5,261.9 L480.5,262.6 L481.5,263.3 L482.5,264.0 L483.5,264.6 L484.5,265.3 L485.5,265.8 L486.5,266.1 L487.5,266.2 L488.5,266.2 L489.5,266.3 L490.5,266.4 L491.5,266.5 L492.5,266.6 L493.5,266.6 L494.5,266.7 L495.5,266.8 L496.5,266.9 L497.5,266.9 L498.5,266.8 L499.5,266.7 L500.5,266.5 L501.5,266.2 L502.5,266.0 L503.5,265.8 L504.5,265.6 L505.5,265.4 L506.5,265.2 L507.5,264.9 L508.5,264.7 L509.5,264.5 L510.5,264.3 L511.5,264.1 L512.5,263.9 L513.5,263.8 L514.5,263.9 L515.5,264.0 L516.5,264.0 L517.5,264.1 L518.5,264.2 L519.5,264.3 L520.5,264.4 L521.5,264.5 L522.5,264.5 L523.5,264.6 L524.5,264.7 L525.5,264.8 L526.5,264.9 L527.5,265.0 L528.5,265.0 L529.5,265.1 L530.5,265.1 L531.5,265.2 L532.5,265.2 L533.5,265.3 L534.5,265.3 L535.5,265.4 L536.5,265.4 L537.5,265.5 L538.5,265.5 L539.5,265.6 L540.5,265.6 L541.5,265.7 L542.5,265.7 L543.5,265.8 L544.5,265.8 L545.5,265.9 L546.5,265.9 L547.5,266.0 L548.5,266.0 L549.5,266.0 L550.5,265.9 L551.5,265.9 L552.5,265.9 L553.5,265.9 L554.5,265.8 L555.5,265.8 L556.5,265.8 L557.5,265.8 L558.5,265.7 L559.5,265.7 L560.5,265.7 L561.5,265.7 L562.5,265.6 L563.5,265.6 L564.5,265.6 L565.5,265.6 L566.5,265.5 L567.5,265.5 L568.5,265.5 L569.5,265.5 L570.5,265.6 L571.5,265.6 L572.5,265.6 L573.5,265.7 L574.5,265.7 L575.5,265.8 L576.5,265.8 L577.5,265.8 L578.5,265.9 L579.5,265.9 L580.5,265.9 L581.5,265.9 L582.5,265.9 L583.5,265.8 L584.5,265.6 L585.5,265.4 L586.5,265.2 L587.5,264.9 L588.5,264.7 L589.5,264.5 L590.5,264.2 L591.5,264.0 L592.5,263.8 L593.5,263.5 L594.5,263.3 L595.5,263.1 L596.5,262.9 L597.5,262.6 L598.5,262.4 L599.5,262.2 L600.5,262.0 L601.5,261.8 L602.5,261.6 L603.5,261.4 L604.5,261.2 L605.5,261.0 L606.5,260.8 L607.5,260.6 L608.5,260.4 L609.5,260.2 L610.5,260.0 L611.5,259.8 L612.5,259.6 L613.5,259.6 L614.5,259.6 L615.5,259.8 L616.5,259.8 L617.5,259.9 L618.5,260.0 L619.5,260.1 L620.5,260.2 L621.5,260.4 L622.5,260.4 L623.5,260.5 L624.5,260.6 L625.5,260.8 L626.5,260.9 L627.5,261.0 L628.5,261.2 L629.5,261.4 L630.5,261.7 L631.5,261.9 L632.5,262.2 L633.5,262.5 L634.5,262.7 L635.5,263.0 L636.5,263.3 L637.5,263.5 L638.5,263.8 L639.5,264.1 L640.5,264.3 L641.5,264.6 L642.5,264.8 L643.5,265.1 L644.5,265.2 L645.5,265.4 L646.5,265.6 L647.5,265.8 L648.5,265.9 L649.5,266.1 L650.5,266.2 L651.5,266.4 L652.5,266.6 L653.5,266.8 L654.5,266.9 L655.5,267.1 L656.5,267.2 L657.5,267.4 L658.5,267.7 L659.5,268.0 L660.5,268.4 L661.5,268.7 L662.5,269.1 L663.5,269.4 L664.5,269.8 L665.5,270.1 L666.5,270.5 L667.5,271.0 L668.5,271.7 L669.5,272.8 L670.5,274.0 L671.5,275.2 L672.5,276.4 L673.5,277.6 L674.5,278.8 L675.5,279.8 L676.5,280.6 L677.5,281.2 L678.5,281.8 L679.5,282.4 L680.5,283.0 L681.5,283.6 L682.5,284.2 L683.5,284.8 L684.5,285.4 L685.5,285.9 L686.5,286.3 L687.5,286.5 L688.5,286.8 L689.5,287.1 L690.5,287.4 L691.5,287.6 L692.5,287.9 L693.5,288.2 L694.5,288.5 L695.5,288.6 L696.5,288.6 L697.5,288.4 L698.5,288.2 L699.5,288.1 L700.5,287.9 L701.5,287.8 L702.5,287.7 L703.5,287.7 L704.5,287.9 L705.5,288.2 L706.5,288.4 L707.5,288.7 L708.5,288.9 L709.5,289.2 L710.5,289.5 L711.5,289.7 L712.5,290.0 L713.5,290.2 L714.5,290.4 L715.5,290.6 L716.5,290.8 L717.5,291.0 L718.5,291.2 L719.5,291.4 L720.5,291.6 L721.5,291.8 L722.5,292.0 L723.5,292.2 L724.5,292.4 L725.5,292.7 L726.5,293.0 L727.5,293.3 L728.5,293.7 L729.5,294.0 L730.5,294.3 L731.5,294.7 L732.5,295.0 L733.5,295.3 L734.5,295.7 L735.5,296.0 L736.5,296.3 L737.5,296.7 L738.5,297.0 L739.5,297.3 L740.5,297.4 L741.5,297.3 L742.5,297.2 L743.5,297.1 L744.5,297.0 L745.5,296.9 L746.5,296.9 L747.5,296.8 L748.5,296.6 L749.5,296.5 L750.5,296.4 L751.5,296.4 L752.5,296.2 L753.5,296.1 L754.5,296.1 L755.5,296.0 L756.5,296.0 L757.5,296.0 L758.5,296.0 L759.5,296.0 L760.5,296.0 L761.5,296.0 L762.5,296.0 L763.5,296.0 L764.5,296.0 L765.5,296.0 L766.5,296.0 L767.5,296.0 L768.5,296.0 L769.5,296.0 L770.5,296.0 L771.5,296.0 L772.5,296.0 L773.5,296.0 L774.5,296.0 L775.5,296.0 L776.5,296.0 L777.5,296.0 L778.5,296.0 L779.5,296.0 L780.5,296.0 L781.5,296.0 L782.5,296.0 L783.5,296.0 L784.5,296.0 L785.5,295.9 L786.5,295.8 L787.5,295.8 L788.5,295.6 L789.5,295.5 L790.5,295.4 L791.5,295.4 L792.5,295.2 L793.5,295.1 L794.5,295.0 L795.5,294.9 L796.5,294.9 L797.5,294.8 L798.5,294.6 L799.5,294.6 L800.5,294.6 L801.5,294.8 L802.5,295.0 L803.5,295.2 L804.5,295.4 L805.5,295.6 L806.5,295.8 L807.5,296.0 L808.5,296.2 L809.5,296.4 L810.5,296.6 L811.5,296.8 L812.5,297.0 L813.5,297.2 L814.5,297.4 L815.5,297.6 L816.5,297.8 L817.5,298.1 L818.5,298.3 L819.5,298.6 L820.5,298.8 L821.5,299.0 L822.5,299.2 L823.5,299.5 L824.5,299.7 L825.5,299.9 L826.5,300.2 L827.5,300.4 L828.5,300.6 L829.5,300.9 L830.5,301.1 L831.5,301.3 L832.5,301.5 L833.5,301.6 L834.5,301.8 L835.5,302.0 L836.5,302.2 L837.5,302.4 L838.5,302.6 L839.5,302.7 L840.5,302.9 L841.5,303.1 L842.5,303.3 L843.5,303.5 L844.5,303.7 L845.5,303.9 L846.5,304.3 L847.5,304.6 L848.5,304.9 L849.5,305.3 L850.5,305.6 L851.5,306.0 L852.5,306.3 L853.5,306.6 L854.5,307.0 L855.5,307.3 L856.5,307.7 L857.5,307.8 L858.5,307.8 L859.5,307.7 L860.5,307.5 L861.5,307.4 L862.5,307.2 L863.5,307.0 L864.5,306.9 L865.5,306.7 L866.5,306.6 L867.5,306.4 L868.5,306.2 L869.5,306.1 L870.5,306.0 L871.5,305.9 L872.5,305.8 L873.5,305.8 L874.5,305.7 L875.5,305.6 L876.5,305.6 L877.5,305.5 L878.5,305.4 L879.5,305.4 L880.5,305.3 L881.5,305.2 L882.5,305.2 L883.5,305.1 L884.5,305.1 L885.5,305.1 L886.5,305.1 L887.5,305.2 L888.5,305.2 L889.5,305.3 L890.5,305.4 L891.5,305.4 L892.5,305.5 L893.5,305.6 L894.5,305.6 L895.5,305.7 L896.5,305.8 L897.5,305.8 L898.5,305.9 L899.5,306.0 L900.5,306.0 L901.5,306.0 L902.5,306.0 L903.5,306.0 L904.5,306.0 L905.5,306.0 L906.5,306.0 L907.5,306.0 L908.5,306.0 L909.5,306.0 L910.5,306.0 L911.5,306.0 L912.5,306.0 L913.5,306.0 L914.5,306.0 L915.5,305.9 L916.5,305.9 L917.5,305.8 L918.5,305.6 L919.5,305.5 L920.5,305.4 L921.5,305.4 L922.5,305.2 L923.5,305.1 L924.5,305.1 L925.5,305.2 L926.5,305.5 L927.5,305.8 L928.5,306.2 L929.5,306.5 L930.5,306.8 L931.5,307.2 L932.5,307.5 L933.5,307.8 L934.5,308.2 L935.5,308.5 L936.5,308.8 L937.5,309.2 L938.5,309.5 L939.5,309.8 L940.5,310.1 L941.5,310.2 L942.5,310.4 L943.5,310.6 L944.5,310.8 L945.5,310.9 L946.5,311.1 L947.5,311.2 L948.5,311.4 L949.5,311.6 L950.5,311.8 L951.5,311.9 L952.5,312.1 L953.5,312.2 L954.5,312.4 L955.5,312.5 L956.5,312.6 L957.5,312.7 L958.5,312.8 L959.5,312.9 L960.5,312.9 L961.5,313.0 L962.5,313.1 L963.5,313.2 L964.5,313.2 L965.5,313.3 L966.5,313.4 L967.5,313.5 L968.5,313.6 L969.5,313.6 L970.5,313.7 L971.5,313.8 L972.5,313.9 L973.5,313.9 L974.5,314.0 L975.5,314.1 L976.5,314.2 L977.5,314.3 L978.5,314.3 L979.5,314.4 L980.5,314.5 L981.5,314.6 L982.5,314.6 L983.5,314.7 L984.5,314.8 L985.5,314.9 L986.5,314.9" fill="none" stroke="#0fd266" stroke-width="1.15" stroke-linejoin="round"/>
<path d="M2.5,416.6 L3.5,416.6 L4.5,416.6 L5.5,416.6 L6.5,416.6 L7.5,416.6 L8.5,416.6 L9.5,416.7 L10.5,416.7 L11.5,416.7 L12.5,416.7 L13.5,416.7 L14.5,416.7 L15.5,416.7 L16.5,416.7 L17.5,416.7 L18.5,416.7 L19.5,416.7 L20.5,416.7 L21.5,416.8 L22.5,416.8 L23.5,416.8 L24.5,416.8 L25.5,416.8 L26.5,416.8 L27.5,417.1 L28.5,417.6 L29.5,418.1 L30.5,413.0 L31.5,405.5 L32.5,398.0 L33.5,388.2 L34.5,378.4 L35.5,368.6 L36.5,358.8 L37.5,349.4 L38.5,340.4 L39.5,331.9 L40.5,323.6 L41.5,316.1 L42.5,309.4 L43.5,302.9 L44.5,299.0 L45.5,297.6 L46.5,298.8 L47.5,299.9 L48.5,301.0 L49.5,301.8 L50.5,301.7 L51.5,300.8 L52.5,299.4 L53.5,298.1 L54.5,296.8 L55.5,295.4 L56.5,294.1 L57.5,292.8 L58.5,291.6 L59.5,290.4 L60.5,289.2 L61.5,288.1 L62.5,286.9 L63.5,285.8 L64.5,284.6 L65.5,283.4 L66.5,282.2 L67.5,281.0 L68.5,279.8 L69.5,278.6 L70.5,277.4 L71.5,276.2 L72.5,275.1 L73.5,274.2 L74.5,273.5 L75.5,272.8 L76.5,272.0 L77.5,271.2 L78.5,270.5 L79.5,269.8 L80.5,269.0 L81.5,268.2 L82.5,267.8 L83.5,267.7 L84.5,267.9 L85.5,268.0 L86.5,268.2 L87.5,268.4 L88.5,268.6 L89.5,268.7 L90.5,268.9 L91.5,269.1 L92.5,269.3 L93.5,269.5 L94.5,269.6 L95.5,269.8 L96.5,270.1 L97.5,270.5 L98.5,270.9 L99.5,271.3 L100.5,271.7 L101.5,272.1 L102.5,272.5 L103.5,272.9 L104.5,273.1 L105.5,272.9 L106.5,272.3 L107.5,271.5 L108.5,270.7 L109.5,269.9 L110.5,269.0 L111.5,268.2 L112.5,267.4 L113.5,266.6 L114.5,265.6 L115.5,264.6 L116.5,263.5 L117.5,262.4 L118.5,261.4 L119.5,260.3 L120.5,259.2 L121.5,258.1 L122.5,257.0 L123.5,255.6 L124.5,254.1 L125.5,252.4 L126.5,250.7 L127.5,249.0 L128.5,247.3 L129.5,245.6 L130.5,243.9 L131.5,242.2 L132.5,240.6 L133.5,239.0 L134.5,237.5 L135.5,236.0 L136.5,234.5 L137.5,233.0 L138.5,231.5 L139.5,230.0 L140.5,228.6 L141.5,227.2 L142.5,225.9 L143.5,224.8 L144.5,223.7 L145.5,222.5 L146.5,221.4 L147.5,220.3 L148.5,219.4 L149.5,218.7 L150.5,218.4 L151.5,218.0 L152.5,217.7 L153.5,217.4 L154.5,217.3 L155.5,217.4 L156.5,217.5 L157.5,217.6 L158.5,217.7 L159.5,217.6 L160.5,217.2 L161.5,216.7 L162.5,216.1 L163.5,215.6 L164.5,215.0 L165.5,214.4 L166.5,213.9 L167.5,213.3 L168.5,212.7 L169.5,212.0 L170.5,211.3 L171.5,210.6 L172.5,209.8 L173.5,209.1 L174.5,208.3 L175.5,207.7 L176.5,207.4 L177.5,207.3 L178.5,207.3 L179.5,207.3 L180.5,207.3 L181.5,207.3 L182.5,207.4 L183.5,207.6 L184.5,208.0 L185.5,208.5 L186.5,209.0 L187.5,209.5 L188.5,210.0 L189.5,210.4 L190.5,210.8 L191.5,210.9 L192.5,210.9 L193.5,210.9 L194.5,210.9 L195.5,210.8 L196.5,210.6 L197.5,210.2 L198.5,209.8 L199.5,209.4 L200.5,209.0 L201.5,208.5 L202.5,208.1 L203.5,207.7 L204.5,207.2 L205.5,206.8 L206.5,206.3 L207.5,205.9 L208.5,205.5 L209.5,205.0 L210.5,204.6 L211.5,204.2 L212.5,203.7 L213.5,203.1 L214.5,202.5 L215.5,201.9 L216.5,201.3 L217.5,200.6 L218.5,200.0 L219.5,199.4 L220.5,198.8 L221.5,198.2 L222.5,197.5 L223.5,196.9 L224.5,196.3 L225.5,195.8 L226.5,195.4 L227.5,195.0 L228.5,194.6 L229.5,194.2 L230.5,193.9 L231.5,193.5 L232.5,193.1 L233.5,192.7 L234.5,192.4 L235.5,192.2 L236.5,192.0 L237.5,191.8 L238.5,191.6 L239.5,191.4 L240.5,191.2 L241.5,191.0 L242.5,190.8 L243.5,190.6 L244.5,190.4 L245.5,190.2 L246.5,190.2 L247.5,190.4 L248.5,190.8 L249.5,191.1 L250.5,191.5 L251.5,191.9 L252.5,192.2 L253.5,192.6 L254.5,193.0 L255.5,193.4 L256.5,193.7 L257.5,194.0 L258.5,194.3 L259.5,194.6 L260.5,194.9 L261.5,195.2 L262.5,195.5 L263.5,195.8 L264.5,196.1 L265.5,196.4 L266.5,196.8 L267.5,197.0 L268.5,197.2 L269.5,197.1 L270.5,196.7 L271.5,196.2 L272.5,195.8 L273.5,195.2 L274.5,194.8 L275.5,194.2 L276.5,193.9 L277.5,193.8 L278.5,193.8 L279.5,193.8 L280.5,193.8 L281.5,193.8 L282.5,193.8 L283.5,193.8 L284.5,193.8 L285.5,193.8 L286.5,193.8 L287.5,193.8 L288.5,193.8 L289.5,194.0 L290.5,194.4 L291.5,194.8 L292.5,195.2 L293.5,195.6 L294.5,196.0 L295.5,196.4 L296.5,196.9 L297.5,197.5 L298.5,198.2 L299.5,199.0 L300.5,199.8 L301.5,200.5 L302.5,201.3 L303.5,202.1 L304.5,203.0 L305.5,204.0 L306.5,205.0 L307.5,206.0 L308.5,207.0 L309.5,208.0 L310.5,209.0 L311.5,209.9 L312.5,210.6 L313.5,211.2 L314.5,211.8 L315.5,212.5 L316.5,213.1 L317.5,213.7 L318.5,214.2 L319.5,214.6 L320.5,215.0 L321.5,215.5 L322.5,215.9 L323.5,216.4 L324.5,217.2 L325.5,218.2 L326.5,219.3 L327.5,220.5 L328.5,221.6 L329.5,222.7 L330.5,223.9 L331.5,225.0 L332.5,226.2 L333.5,227.5 L334.5,228.7 L335.5,230.0 L336.5,231.2 L337.5,232.5 L338.5,233.8 L339.5,235.0 L340.5,236.2 L341.5,237.2 L342.5,237.8 L343.5,238.1 L344.5,238.3 L345.5,238.6 L346.5,238.9 L347.5,239.2 L348.5,239.5 L349.5,239.7 L350.5,240.0 L351.5,240.3 L352.5,240.6 L353.5,240.8 L354.5,240.8 L355.5,240.7 L356.5,240.4 L357.5,240.2 L358.5,240.0 L359.5,239.8 L360.5,239.5 L361.5,239.3 L362.5,239.1 L363.5,238.8 L364.5,238.5 L365.5,238.0 L366.5,237.5 L367.5,237.0 L368.5,236.5 L369.5,236.0 L370.5,235.5 L371.5,235.0 L372.5,234.5 L373.5,234.0 L374.5,233.7 L375.5,233.3 L376.5,233.1 L377.5,232.8 L378.5,232.5 L379.5,232.2 L380.5,232.0 L381.5,231.7 L382.5,231.4 L383.5,231.3 L384.5,231.5 L385.5,232.0 L386.5,232.6 L387.5,233.3 L388.5,233.9 L389.5,234.6 L390.5,235.2 L391.5,235.9 L392.5,236.5 L393.5,237.1 L394.5,237.6 L395.5,238.0 L396.5,238.4 L397.5,238.7 L398.5,239.1 L399.5,239.4 L400.5,239.8 L401.5,240.1 L402.5,240.5 L403.5,240.8 L404.5,241.1 L405.5,241.4 L406.5,241.7 L407.5,242.0 L408.5,242.2 L409.5,242.5 L410.5,242.8 L411.5,243.1 L412.5,243.3 L413.5,243.5 L414.5,243.5 L415.5,243.2 L416.5,242.8 L417.5,242.4 L418.5,242.1 L419.5,241.7 L420.5,241.3 L421.5,240.9 L422.5,240.6 L423.5,240.3 L424.5,240.2 L425.5,240.2 L426.5,240.4 L427.5,240.5 L428.5,240.7 L429.5,240.8 L430.5,241.0 L431.5,241.1 L432.5,241.3 L433.5,241.4 L434.5,241.6 L435.5,241.7 L436.5,241.9 L437.5,242.1 L438.5,242.2 L439.5,242.5 L440.5,242.7 L441.5,243.1 L442.5,243.4 L443.5,243.8 L444.5,244.2 L445.5,244.6 L446.5,244.9 L447.5,245.3 L448.5,245.7 L449.5,246.1 L450.5,246.6 L451.5,247.2 L452.5,247.9 L453.5,248.5 L454.5,249.2 L455.5,249.9 L456.5,250.5 L457.5,251.2 L458.5,251.9 L459.5,252.7 L460.5,253.5 L461.5,254.3 L462.5,255.1 L463.5,255.9 L464.5,256.7 L465.5,257.5 L466.5,258.3 L467.5,259.1 L468.5,259.9 L469.5,260.8 L470.5,261.6 L471.5,262.4 L472.5,263.3 L473.5,264.1 L474.5,265.0 L475.5,265.8 L476.5,266.6 L477.5,267.5 L478.5,268.3 L479.5,269.2 L480.5,269.7 L481.5,270.0 L482.5,270.0 L483.5,270.0 L484.5,270.0 L485.5,270.0 L486.5,270.0 L487.5,269.9 L488.5,269.7 L489.5,269.4 L490.5,269.0 L491.5,268.6 L492.5,268.2 L493.5,267.8 L494.5,267.4 L495.5,267.0 L496.5,266.6 L497.5,266.2 L498.5,265.9 L499.5,265.6 L500.5,265.4 L501.5,265.2 L502.5,264.9 L503.5,264.7 L504.5,264.5 L505.5,264.2 L506.5,264.0 L507.5,263.8 L508.5,263.5 L509.5,263.3 L510.5,263.1 L511.5,262.9 L512.5,262.7 L513.5,262.7 L514.5,262.9 L515.5,263.2 L516.5,263.6 L517.5,263.9 L518.5,264.1 L519.5,264.4 L520.5,264.8 L521.5,265.1 L522.5,265.3 L523.5,265.5 L524.5,265.5 L525.5,265.6 L526.5,265.6 L527.5,265.6 L528.5,265.7 L529.5,265.7 L530.5,265.8 L531.5,265.8 L532.5,265.8 L533.5,265.9 L534.5,265.9 L535.5,265.9 L536.5,265.9 L537.5,266.0 L538.5,266.0 L539.5,265.9 L540.5,265.9 L541.5,265.9 L542.5,265.9 L543.5,265.8 L544.5,265.8 L545.5,265.8 L546.5,265.7 L547.5,265.7 L548.5,265.6 L549.5,265.6 L550.5,265.6 L551.5,265.5 L552.5,265.5 L553.5,265.5 L554.5,265.4 L555.5,265.3 L556.5,265.3 L557.5,265.2 L558.5,265.1 L559.5,265.1 L560.5,265.0 L561.5,264.9 L562.5,264.9 L563.5,264.8 L564.5,264.7 L565.5,264.7 L566.5,264.6 L567.5,264.6 L568.5,264.6 L569.5,264.8 L570.5,265.0 L571.5,265.2 L572.5,265.4 L573.5,265.6 L574.5,265.8 L575.5,266.0 L576.5,266.2 L577.5,266.4 L578.5,266.6 L579.5,266.8 L580.5,267.0 L581.5,267.2 L582.5,267.3 L583.5,267.2 L584.5,266.9 L585.5,266.5 L586.5,266.1 L587.5,265.7 L588.5,265.3 L589.5,264.9 L590.5,264.4 L591.5,263.8 L592.5,263.1 L593.5,262.4 L594.5,261.7 L595.5,261.0 L596.5,260.3 L597.5,259.6 L598.5,258.9 L599.5,258.2 L600.5,257.8 L601.5,257.8 L602.5,258.0 L603.5,258.2 L604.5,258.5 L605.5,258.8 L606.5,259.0 L607.5,259.2 L608.5,259.5 L609.5,259.8 L610.5,259.9 L611.5,259.9 L612.5,259.9 L613.5,259.8 L614.5,259.7 L615.5,259.7 L616.5,259.6 L617.5,259.6 L618.5,259.8 L619.5,260.1 L620.5,260.6 L621.5,261.0 L622.5,261.4 L623.5,261.8 L624.5,262.3 L625.5,262.7 L626.5,263.1 L627.5,263.5 L628.5,263.8 L629.5,264.0 L630.5,264.1 L631.5,264.3 L632.5,264.4 L633.5,264.6 L634.5,264.7 L635.5,264.9 L636.5,265.0 L637.5,265.2 L638.5,265.3 L639.5,265.5 L640.5,265.6 L641.5,265.8 L642.5,265.9 L643.5,266.1 L644.5,266.3 L645.5,266.5 L646.5,266.6 L647.5,266.8 L648.5,267.0 L649.5,267.2 L650.5,267.4 L651.5,267.6 L652.5,267.7 L653.5,267.9 L654.5,268.1 L655.5,268.3 L656.5,268.5 L657.5,268.7 L658.5,269.1 L659.5,269.7 L660.5,270.3 L661.5,270.9 L662.5,271.6 L663.5,272.2 L664.5,272.8 L665.5,273.4 L666.5,274.1 L667.5,274.9 L668.5,276.4 L669.5,278.3 L670.5,280.5 L671.5,282.7 L672.5,284.8 L673.5,286.5 L674.5,287.9 L675.5,289.2 L676.5,290.5 L677.5,291.8 L678.5,293.1 L679.5,294.4 L680.5,295.2 L681.5,295.5 L682.5,295.3 L683.5,294.9 L684.5,294.0 L685.5,292.7 L686.5,291.1 L687.5,289.6 L688.5,288.3 L689.5,287.2 L690.5,286.2 L691.5,285.1 L692.5,284.1 L693.5,283.1 L694.5,282.0 L695.5,281.5 L696.5,281.4 L697.5,281.7 L698.5,282.1 L699.5,282.5 L700.5,282.8 L701.5,283.2 L702.5,283.6 L703.5,284.2 L704.5,284.8 L705.5,285.5 L706.5,286.2 L707.5,287.0 L708.5,287.7 L709.5,288.3 L710.5,288.9 L711.5,289.3 L712.5,289.7 L713.5,290.1 L714.5,290.4 L715.5,290.8 L716.5,291.2 L717.5,291.6 L718.5,291.9 L719.5,292.3 L720.5,292.7 L721.5,293.0 L722.5,293.4 L723.5,293.7 L724.5,294.1 L725.5,294.4 L726.5,294.8 L727.5,295.1 L728.5,295.5 L729.5,295.9 L730.5,296.4 L731.5,297.0 L732.5,297.7 L733.5,298.3 L734.5,299.0 L735.5,299.7 L736.5,300.3 L737.5,300.8 L738.5,301.0 L739.5,301.0 L740.5,301.0 L741.5,301.0 L742.5,301.0 L743.5,301.0 L744.5,300.9 L745.5,300.5 L746.5,299.8 L747.5,299.0 L748.5,298.2 L749.5,297.4 L750.5,296.6 L751.5,295.8 L752.5,295.2 L753.5,294.9 L754.5,294.8 L755.5,294.6 L756.5,294.5 L757.5,294.4 L758.5,294.2 L759.5,294.1 L760.5,294.0 L761.5,293.9 L762.5,293.9 L763.5,294.2 L764.5,294.6 L765.5,295.0 L766.5,295.4 L767.5,295.8 L768.5,296.2 L769.5,296.7 L770.5,297.1 L771.5,297.5 L772.5,297.9 L773.5,298.3 L774.5,298.8 L775.5,299.2 L776.5,299.6 L777.5,299.7 L778.5,299.5 L779.5,299.0 L780.5,298.5 L781.5,298.0 L782.5,297.5 L783.5,297.0 L784.5,296.5 L785.5,296.0 L786.5,295.5 L787.5,295.1 L788.5,294.8 L789.5,294.7 L790.5,294.5 L791.5,294.3 L792.5,294.2 L793.5,294.0 L794.5,293.9 L795.5,293.9 L796.5,293.9 L797.5,294.1 L798.5,294.2 L799.5,294.3 L800.5,294.4 L801.5,294.6 L802.5,294.7 L803.5,294.8 L804.5,295.0 L805.5,295.2 L806.5,295.5 L807.5,295.9 L808.5,296.3 L809.5,296.6 L810.5,297.0 L811.5,297.3 L812.5,297.7 L813.5,298.1 L814.5,298.4 L815.5,298.8 L816.5,299.1 L817.5,299.5 L818.5,299.7 L819.5,300.0 L820.5,300.2 L821.5,300.5 L822.5,300.7 L823.5,300.9 L824.5,301.2 L825.5,301.4 L826.5,301.7 L827.5,301.9 L828.5,302.1 L829.5,302.4 L830.5,302.6 L831.5,302.8 L832.5,302.9 L833.5,303.1 L834.5,303.2 L835.5,303.4 L836.5,303.6 L837.5,303.8 L838.5,303.9 L839.5,304.1 L840.5,304.2 L841.5,304.4 L842.5,304.6 L843.5,304.8 L844.5,304.9 L845.5,305.2 L846.5,305.4 L847.5,305.8 L848.5,306.1 L849.5,306.3 L850.5,306.6 L851.5,306.9 L852.5,307.2 L853.5,307.6 L854.5,307.8 L855.5,308.1 L856.5,308.4 L857.5,308.8 L858.5,309.1 L859.5,309.2 L860.5,309.1 L861.5,308.8 L862.5,308.4 L863.5,307.9 L864.5,307.5 L865.5,307.0 L866.5,306.6 L867.5,306.1 L868.5,305.7 L869.5,305.2 L870.5,304.8 L871.5,304.4 L872.5,304.0 L873.5,303.6 L874.5,303.2 L875.5,302.8 L876.5,302.4 L877.5,302.3 L878.5,302.4 L879.5,302.8 L880.5,303.2 L881.5,303.6 L882.5,304.0 L883.5,304.4 L884.5,304.7 L885.5,304.9 L886.5,305.0 L887.5,305.0 L888.5,305.0 L889.5,305.0 L890.5,305.0 L891.5,305.0 L892.5,305.0 L893.5,305.0 L894.5,305.0 L895.5,305.0 L896.5,305.0 L897.5,305.0 L898.5,305.0 L899.5,305.0 L900.5,305.2 L901.5,305.4 L902.5,305.6 L903.5,305.9 L904.5,306.1 L905.5,306.4 L906.5,306.6 L907.5,306.9 L908.5,307.1 L909.5,307.3 L910.5,307.3 L911.5,307.1 L912.5,306.8 L913.5,306.4 L914.5,306.1 L915.5,305.9 L916.5,305.6 L917.5,305.2 L918.5,304.9 L919.5,304.6 L920.5,304.4 L921.5,304.1 L922.5,304.0 L923.5,304.2 L924.5,304.8 L925.5,305.2 L926.5,305.8 L927.5,306.2 L928.5,306.8 L929.5,307.3 L930.5,307.8 L931.5,308.3 L932.5,308.9 L933.5,309.4 L934.5,310.0 L935.5,310.5 L936.5,311.1 L937.5,311.6 L938.5,312.2 L939.5,312.6 L940.5,312.8 L941.5,312.7 L942.5,312.5 L943.5,312.3 L944.5,312.1 L945.5,311.9 L946.5,311.7 L947.5,311.5 L948.5,311.3 L949.5,311.2 L950.5,311.3 L951.5,311.6 L952.5,312.0 L953.5,312.4 L954.5,312.8 L955.5,313.0 L956.5,313.2 L957.5,313.4 L958.5,313.6 L959.5,313.8 L960.5,313.9 L961.5,314.1 L962.5,314.2 L963.5,314.4 L964.5,314.6 L965.5,314.8 L966.5,314.9 L967.5,315.1 L968.5,315.2 L969.5,315.4 L970.5,315.5 L971.5,315.5 L972.5,315.4 L973.5,315.4 L974.5,315.4 L975.5,315.3 L976.5,315.3 L977.5,315.3 L978.5,315.2 L979.5,315.2 L980.5,315.2 L981.5,315.2 L982.5,315.1 L983.5,315.1 L984.5,315.1 L985.5,315.0 L986.5,315.0" fill="none" stroke="#f4f4f4" stroke-width="1.1" stroke-linejoin="round"/>
<text x="3" y="43.3" font-size="6.2" fill="#d4d4e0" textLength="37" lengthAdjust="spacingAndGlyphs" >単純移動平均</text>
<text x="43" y="43.3" font-size="6.2" fill="#f0f0f0" textLength="19" lengthAdjust="spacingAndGlyphs" >SMA(5)</text>
<text x="65.6" y="43.3" font-size="6.2" fill="#18e878" textLength="23.1" lengthAdjust="spacingAndGlyphs" >SMA(10)</text>
<text x="92.2" y="43.3" font-size="6.2" fill="#2a70ff" textLength="22.2" lengthAdjust="spacingAndGlyphs" >SMA(20)</text>
<text x="118" y="43.3" font-size="6.2" fill="#a828f0" textLength="23.2" lengthAdjust="spacingAndGlyphs" >SMA(50)</text>
<text x="145" y="43.3" font-size="6.2" fill="#ff6a18" textLength="26.2" lengthAdjust="spacingAndGlyphs" >SMA(100)</text>
<text x="174.2" y="43.3" font-size="6.2" fill="#ff50d0" textLength="26.5" lengthAdjust="spacingAndGlyphs" >SMA(200)</text>
<text x="205" y="43.3" font-size="6.2" fill="#e8e8e8" textLength="41.2" lengthAdjust="spacingAndGlyphs" >ボリンジャーバンド</text>
<text x="249.5" y="43.3" font-size="6.2" fill="#a8a8a8" textLength="40.5" lengthAdjust="spacingAndGlyphs" >上限3(12,3.00)</text>
<text x="294.2" y="43.3" font-size="6.2" fill="#a8a8a8" textLength="40.3" lengthAdjust="spacingAndGlyphs" >上限4(12,2.00)</text>
<text x="339.2" y="43.3" font-size="6.2" fill="#a8a8a8" textLength="40" lengthAdjust="spacingAndGlyphs" >上限5(12,1.00)</text>
<text x="383" y="43.3" font-size="6.2" fill="#a8a8a8" textLength="23.2" lengthAdjust="spacingAndGlyphs" >中央(12)</text>
<text x="410.5" y="43.3" font-size="6.2" fill="#a8a8a8" textLength="40.2" lengthAdjust="spacingAndGlyphs" >下限5(12,1.00)</text>
<text x="455.5" y="43.3" font-size="6.2" fill="#a8a8a8" textLength="40" lengthAdjust="spacingAndGlyphs" >下限4(12,2.00)</text>
<text x="500.3" y="43.3" font-size="6.2" fill="#a8a8a8" textLength="40.2" lengthAdjust="spacingAndGlyphs" >下限3(12,3.00)</text>
<path d="M237.4,185.6 L238.6,183.4 L246,183.4" stroke="#d81b57" stroke-width="0.8" fill="none"/>
<text x="246.6" y="185.4" font-size="6.4" fill="#d81b57" textLength="36.4" lengthAdjust="spacingAndGlyphs" >最高値:5,290</text>
<path d="M5,421 L6.5,423.6 L12,423.6" stroke="#18b4ac" stroke-width="0.8" fill="none"/>
<text x="12.2" y="425.3" font-size="6.4" fill="#18b4ac" textLength="35.4" lengthAdjust="spacingAndGlyphs" >最安値:4,590</text>
<rect x="63.9" y="165" width="2.4" height="99" fill="#b4b4b4"/><path d="M62.4,263 L67.8,263 L65.1,266.6 Z" fill="#b4b4b4"/>
<rect x="72.6" y="155.5" width="2.4" height="96.5" fill="#b4b4b4"/><path d="M71.1,251.5 L76.5,251.5 L73.8,255 Z" fill="#b4b4b4"/>
<rect x="0" y="120.6" width="71.6" height="45.2" fill="#ffffff"/>
<rect x="72.4" y="109.8" width="72" height="46.1" fill="#ffffff"/>
<text x="6" y="134.8" font-size="8.6" fill="#222" textLength="27" lengthAdjust="spacingAndGlyphs" font-weight="bold" font-family="DejaVu Sans, Noto Sans CJK JP, sans-serif" >09:21</text>
<text x="6" y="151.8" font-size="8.6" fill="#222" textLength="27" lengthAdjust="spacingAndGlyphs" font-weight="bold" font-family="DejaVu Sans, Noto Sans CJK JP, sans-serif" >5,030</text>
<text x="42.5" y="152" font-size="8.6" fill="#222" textLength="17.5" lengthAdjust="spacingAndGlyphs" font-weight="900" font-family="DejaVu Sans, Noto Sans CJK JP, sans-serif" >買い</text>
<text x="77.9" y="124.2" font-size="8.6" fill="#222" textLength="27" lengthAdjust="spacingAndGlyphs" font-weight="bold" font-family="DejaVu Sans, Noto Sans CJK JP, sans-serif" >09:24</text>
<text x="77.9" y="141.4" font-size="8.6" fill="#222" textLength="27" lengthAdjust="spacingAndGlyphs" font-weight="bold" font-family="DejaVu Sans, Noto Sans CJK JP, sans-serif" >5,050</text>
<text x="113.8" y="141.6" font-size="8.6" fill="#222" textLength="17.5" lengthAdjust="spacingAndGlyphs" font-weight="900" font-family="DejaVu Sans, Noto Sans CJK JP, sans-serif" >売り</text>
<rect x="994.6" y="310.8" width="29.4" height="8.6" fill="#ffffff"/>
<text x="1002.8" y="317.6" font-size="6.4" fill="#4a4a4a" textLength="14.8" lengthAdjust="spacingAndGlyphs" >4,900</text>
<rect x="1.2" y="431.6" width="993.4" height="0.9" fill="#424242"/>
<path d="M2.5,441 H994" stroke="#272727" stroke-width="0.7" stroke-dasharray="1.1,1.1"/>
<rect x="31.5" y="435.9" width="2.2" height="18.5" fill="#e8175d"/>
<rect x="34.5" y="447.2" width="2.2" height="7.2" fill="#1ccbc4"/>
<rect x="37.5" y="444.4" width="2.2" height="10.0" fill="#e8175d"/>
<rect x="40.5" y="450.1" width="2.2" height="4.3" fill="#e8175d"/>
<rect x="43.5" y="450.6" width="2.2" height="3.8" fill="#e8175d"/>
<rect x="46.4" y="449.3" width="2.2" height="5.1" fill="#1ccbc4"/>
<rect x="49.4" y="450.9" width="2.2" height="3.5" fill="#e8175d"/>
<rect x="52.4" y="449.7" width="2.2" height="4.7" fill="#e8175d"/>
<rect x="55.4" y="450.2" width="2.2" height="4.2" fill="#1ccbc4"/>
<rect x="58.4" y="451.1" width="2.2" height="3.3" fill="#e8175d"/>
<rect x="61.4" y="450.0" width="2.2" height="4.4" fill="#1ccbc4"/>
<rect x="64.3" y="451.3" width="2.2" height="3.1" fill="#e8175d"/>
<rect x="67.3" y="450.3" width="2.2" height="4.1" fill="#e8175d"/>
<rect x="70.3" y="451.3" width="2.2" height="3.1" fill="#e8175d"/>
<rect x="73.3" y="451.3" width="2.2" height="3.1" fill="#e8175d"/>
<rect x="76.3" y="450.5" width="2.2" height="3.9" fill="#1ccbc4"/>
<rect x="79.3" y="449.5" width="2.2" height="4.9" fill="#e8175d"/>
<rect x="82.2" y="451.3" width="2.2" height="3.1" fill="#1ccbc4"/>
<rect x="85.2" y="451.1" width="2.2" height="3.3" fill="#1ccbc4"/>
<rect x="88.2" y="450.2" width="2.2" height="4.2" fill="#1ccbc4"/>
<rect x="91.2" y="449.5" width="2.2" height="4.9" fill="#e8175d"/>
<rect x="94.2" y="450.4" width="2.2" height="4.0" fill="#e8175d"/>
<rect x="97.2" y="450.9" width="2.2" height="3.5" fill="#1ccbc4"/>
<rect x="100.1" y="449.6" width="2.2" height="4.8" fill="#e8175d"/>
<rect x="103.1" y="451.7" width="2.2" height="2.7" fill="#1ccbc4"/>
<rect x="106.1" y="450.0" width="2.2" height="4.4" fill="#e8175d"/>
<rect x="109.1" y="451.3" width="2.2" height="3.1" fill="#e8175d"/>
<rect x="112.1" y="451.6" width="2.2" height="2.8" fill="#e8175d"/>
<rect x="115.1" y="451.7" width="2.2" height="2.7" fill="#e8175d"/>
<rect x="118.0" y="451.3" width="2.2" height="3.1" fill="#1ccbc4"/>
<rect x="121.0" y="450.3" width="2.2" height="4.1" fill="#e8175d"/>
<rect x="124.0" y="451.7" width="2.2" height="2.7" fill="#e8175d"/>
<rect x="127.0" y="450.9" width="2.2" height="3.5" fill="#e8175d"/>
<rect x="130.0" y="450.8" width="2.2" height="3.6" fill="#e8175d"/>
<rect x="133.0" y="451.4" width="2.2" height="3.0" fill="#e8175d"/>
<rect x="135.9" y="451.1" width="2.2" height="3.3" fill="#e8175d"/>
<rect x="138.9" y="452.0" width="2.2" height="2.4" fill="#e8175d"/>
<rect x="141.9" y="452.1" width="2.2" height="2.3" fill="#e8175d"/>
<rect x="144.9" y="451.8" width="2.2" height="2.6" fill="#1ccbc4"/>
<rect x="147.9" y="451.0" width="2.2" height="3.4" fill="#1ccbc4"/>
<rect x="150.9" y="451.5" width="2.2" height="2.9" fill="#e8175d"/>
<rect x="153.8" y="451.7" width="2.2" height="2.7" fill="#1ccbc4"/>
<rect x="156.8" y="451.2" width="2.2" height="3.2" fill="#e8175d"/>
<rect x="159.8" y="451.5" width="2.2" height="2.9" fill="#e8175d"/>
<rect x="162.8" y="451.8" width="2.2" height="2.6" fill="#e8175d"/>
<rect x="165.8" y="451.0" width="2.2" height="3.4" fill="#e8175d"/>
<rect x="168.7" y="451.2" width="2.2" height="3.2" fill="#e8175d"/>
<rect x="171.7" y="452.0" width="2.2" height="2.4" fill="#e8175d"/>
<rect x="174.7" y="451.4" width="2.2" height="3.0" fill="#1ccbc4"/>
<rect x="177.7" y="451.6" width="2.2" height="2.8" fill="#e8175d"/>
<rect x="180.7" y="451.0" width="2.2" height="3.4" fill="#1ccbc4"/>
<rect x="183.7" y="451.3" width="2.2" height="3.1" fill="#1ccbc4"/>
<rect x="186.6" y="452.0" width="2.2" height="2.4" fill="#e8175d"/>
<rect x="189.6" y="450.9" width="2.2" height="3.5" fill="#e8175d"/>
<rect x="192.6" y="452.3" width="2.2" height="2.1" fill="#1ccbc4"/>
<rect x="195.6" y="451.9" width="2.2" height="2.5" fill="#e8175d"/>
<rect x="198.6" y="451.4" width="2.2" height="3.0" fill="#e8175d"/>
<rect x="201.6" y="452.3" width="2.2" height="2.1" fill="#e8175d"/>
<rect x="204.5" y="451.8" width="2.2" height="2.6" fill="#e8175d"/>
<rect x="207.5" y="452.6" width="2.2" height="1.8" fill="#e8175d"/>
<rect x="210.5" y="451.6" width="2.2" height="2.8" fill="#e8175d"/>
<rect x="213.5" y="451.5" width="2.2" height="2.9" fill="#1ccbc4"/>
<rect x="216.5" y="451.8" width="2.2" height="2.6" fill="#e8175d"/>
<rect x="219.5" y="451.4" width="2.2" height="3.0" fill="#e8175d"/>
<rect x="222.4" y="452.2" width="2.2" height="2.2" fill="#e8175d"/>
<rect x="225.4" y="451.7" width="2.2" height="2.7" fill="#1ccbc4"/>
<rect x="228.4" y="451.9" width="2.2" height="2.5" fill="#e8175d"/>
<rect x="231.4" y="451.9" width="2.2" height="2.5" fill="#e8175d"/>
<rect x="234.4" y="452.1" width="2.2" height="2.3" fill="#1ccbc4"/>
<rect x="237.4" y="451.6" width="2.2" height="2.8" fill="#1ccbc4"/>
<rect x="240.3" y="451.4" width="2.2" height="3.0" fill="#e8175d"/>
<rect x="243.3" y="452.1" width="2.2" height="2.3" fill="#e8175d"/>
<rect x="246.3" y="451.9" width="2.2" height="2.5" fill="#e8175d"/>
<rect x="249.3" y="452.7" width="2.2" height="1.7" fill="#1ccbc4"/>
<rect x="252.3" y="451.9" width="2.2" height="2.5" fill="#e8175d"/>
<rect x="255.3" y="451.9" width="2.2" height="2.5" fill="#e8175d"/>
<rect x="258.2" y="451.5" width="2.2" height="2.9" fill="#e8175d"/>
<rect x="261.2" y="451.7" width="2.2" height="2.7" fill="#e8175d"/>
<rect x="264.2" y="452.5" width="2.2" height="1.9" fill="#e8175d"/>
<rect x="267.2" y="452.4" width="2.2" height="2.0" fill="#e8175d"/>
<rect x="270.2" y="452.0" width="2.2" height="2.4" fill="#e8175d"/>
<rect x="273.2" y="452.9" width="2.2" height="1.5" fill="#e8175d"/>
<rect x="276.1" y="452.3" width="2.2" height="2.1" fill="#1ccbc4"/>
<rect x="279.1" y="452.7" width="2.2" height="1.7" fill="#e8175d"/>
<rect x="282.1" y="452.8" width="2.2" height="1.6" fill="#1ccbc4"/>
<rect x="285.1" y="452.9" width="2.2" height="1.5" fill="#e8175d"/>
<rect x="288.1" y="452.0" width="2.2" height="2.4" fill="#e8175d"/>
<rect x="291.1" y="452.8" width="2.2" height="1.6" fill="#1ccbc4"/>
<rect x="294.0" y="452.6" width="2.2" height="1.8" fill="#1ccbc4"/>
<rect x="297.0" y="452.5" width="2.2" height="1.9" fill="#1ccbc4"/>
<rect x="300.0" y="451.9" width="2.2" height="2.5" fill="#1ccbc4"/>
<rect x="303.0" y="452.9" width="2.2" height="1.5" fill="#e8175d"/>
<rect x="306.0" y="452.4" width="2.2" height="2.0" fill="#1ccbc4"/>
<rect x="308.9" y="452.3" width="2.2" height="2.1" fill="#1ccbc4"/>
<rect x="311.9" y="451.9" width="2.2" height="2.5" fill="#e8175d"/>
<rect x="314.9" y="452.0" width="2.2" height="2.4" fill="#1ccbc4"/>
<rect x="317.9" y="452.0" width="2.2" height="2.4" fill="#e8175d"/>
<rect x="320.9" y="452.7" width="2.2" height="1.7" fill="#1ccbc4"/>
<rect x="323.9" y="452.5" width="2.2" height="1.9" fill="#e8175d"/>
<rect x="326.8" y="452.6" width="2.2" height="1.8" fill="#1ccbc4"/>
<rect x="329.8" y="452.0" width="2.2" height="2.4" fill="#1ccbc4"/>
<rect x="332.8" y="451.9" width="2.2" height="2.5" fill="#1ccbc4"/>
<rect x="335.8" y="452.9" width="2.2" height="1.5" fill="#1ccbc4"/>
<rect x="338.8" y="452.9" width="2.2" height="1.5" fill="#1ccbc4"/>
<rect x="341.8" y="452.8" width="2.2" height="1.6" fill="#1ccbc4"/>
<rect x="344.7" y="452.8" width="2.2" height="1.6" fill="#e8175d"/>
<rect x="347.7" y="452.5" width="2.2" height="1.9" fill="#1ccbc4"/>
<rect x="350.7" y="452.4" width="2.2" height="2.0" fill="#e8175d"/>
<rect x="353.7" y="452.8" width="2.2" height="1.6" fill="#e8175d"/>
<rect x="356.7" y="453.1" width="2.2" height="1.3" fill="#e8175d"/>
<rect x="359.7" y="452.6" width="2.2" height="1.8" fill="#1ccbc4"/>
<rect x="362.6" y="452.7" width="2.2" height="1.7" fill="#e8175d"/>
<rect x="365.6" y="452.5" width="2.2" height="1.9" fill="#e8175d"/>
<rect x="368.6" y="452.1" width="2.2" height="2.3" fill="#e8175d"/>
<rect x="371.6" y="452.4" width="2.2" height="2.0" fill="#e8175d"/>
<rect x="374.6" y="452.6" width="2.2" height="1.8" fill="#e8175d"/>
<rect x="377.6" y="452.5" width="2.2" height="1.9" fill="#e8175d"/>
<rect x="380.5" y="452.4" width="2.2" height="2.0" fill="#e8175d"/>
<rect x="383.5" y="453.1" width="2.2" height="1.3" fill="#1ccbc4"/>
<rect x="386.5" y="452.2" width="2.2" height="2.2" fill="#1ccbc4"/>
<rect x="389.5" y="452.3" width="2.2" height="2.1" fill="#1ccbc4"/>
<rect x="392.5" y="452.2" width="2.2" height="2.2" fill="#e8175d"/>
<rect x="395.5" y="452.3" width="2.2" height="2.1" fill="#1ccbc4"/>
<rect x="398.4" y="452.8" width="2.2" height="1.6" fill="#e8175d"/>
<rect x="401.4" y="452.8" width="2.2" height="1.6" fill="#1ccbc4"/>
<rect x="404.4" y="453.1" width="2.2" height="1.3" fill="#1ccbc4"/>
<rect x="407.4" y="452.5" width="2.2" height="1.9" fill="#e8175d"/>
<rect x="410.4" y="453.1" width="2.2" height="1.3" fill="#1ccbc4"/>
<rect x="413.4" y="453.1" width="2.2" height="1.3" fill="#e8175d"/>
<rect x="416.3" y="453.0" width="2.2" height="1.4" fill="#e8175d"/>
<rect x="419.3" y="453.0" width="2.2" height="1.4" fill="#1ccbc4"/>
<rect x="422.3" y="452.9" width="2.2" height="1.5" fill="#e8175d"/>
<rect x="425.3" y="453.2" width="2.2" height="1.2" fill="#1ccbc4"/>
<rect x="428.3" y="453.2" width="2.2" height="1.2" fill="#1ccbc4"/>
<rect x="431.3" y="453.1" width="2.2" height="1.3" fill="#e8175d"/>
<rect x="434.2" y="453.1" width="2.2" height="1.3" fill="#e8175d"/>
<rect x="437.2" y="452.9" width="2.2" height="1.5" fill="#e8175d"/>
<rect x="440.2" y="453.2" width="2.2" height="1.2" fill="#1ccbc4"/>
<rect x="443.2" y="452.3" width="2.2" height="2.1" fill="#e8175d"/>
<rect x="446.2" y="452.6" width="2.2" height="1.8" fill="#1ccbc4"/>
<rect x="449.1" y="447.4" width="2.2" height="7.0" fill="#e8175d"/>
<rect x="452.1" y="453.1" width="2.2" height="1.3" fill="#1ccbc4"/>
<rect x="455.1" y="453.0" width="2.2" height="1.4" fill="#e8175d"/>
<rect x="458.1" y="452.9" width="2.2" height="1.5" fill="#1ccbc4"/>
<rect x="461.1" y="452.9" width="2.2" height="1.5" fill="#e8175d"/>
<rect x="464.1" y="453.1" width="2.2" height="1.3" fill="#e8175d"/>
<rect x="467.0" y="452.4" width="2.2" height="2.0" fill="#1ccbc4"/>
<rect x="470.0" y="452.3" width="2.2" height="2.1" fill="#e8175d"/>
<rect x="473.0" y="452.8" width="2.2" height="1.6" fill="#1ccbc4"/>
<rect x="476.0" y="452.8" width="2.2" height="1.6" fill="#e8175d"/>
<rect x="479.0" y="453.2" width="2.2" height="1.2" fill="#1ccbc4"/>
<rect x="482.0" y="453.2" width="2.2" height="1.2" fill="#e8175d"/>
<rect x="484.9" y="452.9" width="2.2" height="1.5" fill="#e8175d"/>
<rect x="487.9" y="453.0" width="2.2" height="1.4" fill="#1ccbc4"/>
<rect x="490.9" y="452.5" width="2.2" height="1.9" fill="#e8175d"/>
<rect x="493.9" y="453.1" width="2.2" height="1.3" fill="#e8175d"/>
<rect x="496.9" y="453.3" width="2.2" height="1.1" fill="#e8175d"/>
<rect x="499.9" y="452.4" width="2.2" height="2.0" fill="#e8175d"/>
<rect x="502.8" y="452.8" width="2.2" height="1.6" fill="#1ccbc4"/>
<rect x="505.8" y="453.1" width="2.2" height="1.3" fill="#e8175d"/>
<rect x="508.8" y="452.8" width="2.2" height="1.6" fill="#e8175d"/>
<rect x="511.8" y="453.3" width="2.2" height="1.1" fill="#e8175d"/>
<rect x="514.8" y="452.8" width="2.2" height="1.6" fill="#1ccbc4"/>
<rect x="517.8" y="452.4" width="2.2" height="2.0" fill="#e8175d"/>
<rect x="520.7" y="452.5" width="2.2" height="1.9" fill="#e8175d"/>
<rect x="523.7" y="452.6" width="2.2" height="1.8" fill="#e8175d"/>
<rect x="526.7" y="453.0" width="2.2" height="1.4" fill="#e8175d"/>
<rect x="529.7" y="452.9" width="2.2" height="1.5" fill="#e8175d"/>
<rect x="532.7" y="453.1" width="2.2" height="1.3" fill="#1ccbc4"/>
<rect x="535.7" y="452.6" width="2.2" height="1.8" fill="#e8175d"/>
<rect x="538.6" y="452.8" width="2.2" height="1.6" fill="#e8175d"/>
<rect x="541.6" y="452.6" width="2.2" height="1.8" fill="#e8175d"/>
<rect x="544.6" y="453.0" width="2.2" height="1.4" fill="#e8175d"/>
<rect x="547.6" y="453.1" width="2.2" height="1.3" fill="#e8175d"/>
<rect x="550.6" y="452.5" width="2.2" height="1.9" fill="#e8175d"/>
<rect x="553.6" y="452.4" width="2.2" height="2.0" fill="#e8175d"/>
<rect x="556.5" y="452.5" width="2.2" height="1.9" fill="#e8175d"/>
<rect x="559.5" y="452.6" width="2.2" height="1.8" fill="#e8175d"/>
<rect x="562.5" y="452.6" width="2.2" height="1.8" fill="#1ccbc4"/>
<rect x="565.5" y="452.6" width="2.2" height="1.8" fill="#e8175d"/>
<rect x="568.5" y="453.1" width="2.2" height="1.3" fill="#1ccbc4"/>
<rect x="571.5" y="452.8" width="2.2" height="1.6" fill="#1ccbc4"/>
<rect x="574.4" y="453.0" width="2.2" height="1.4" fill="#e8175d"/>
<rect x="577.4" y="453.3" width="2.2" height="1.1" fill="#1ccbc4"/>
<rect x="580.4" y="453.3" width="2.2" height="1.1" fill="#e8175d"/>
<rect x="583.4" y="453.1" width="2.2" height="1.3" fill="#e8175d"/>
<rect x="586.4" y="453.1" width="2.2" height="1.3" fill="#e8175d"/>
<rect x="589.4" y="452.7" width="2.2" height="1.7" fill="#e8175d"/>
<rect x="592.3" y="452.4" width="2.2" height="2.0" fill="#e8175d"/>
<rect x="595.3" y="452.9" width="2.2" height="1.5" fill="#e8175d"/>
<rect x="598.3" y="452.5" width="2.2" height="1.9" fill="#1ccbc4"/>
<rect x="601.3" y="452.4" width="2.2" height="2.0" fill="#e8175d"/>
<rect x="604.3" y="452.5" width="2.2" height="1.9" fill="#1ccbc4"/>
<rect x="607.2" y="453.0" width="2.2" height="1.4" fill="#e8175d"/>
<rect x="610.2" y="453.1" width="2.2" height="1.3" fill="#e8175d"/>
<rect x="613.2" y="453.1" width="2.2" height="1.3" fill="#e8175d"/>
<rect x="616.2" y="453.2" width="2.2" height="1.2" fill="#e8175d"/>
<rect x="619.2" y="453.1" width="2.2" height="1.3" fill="#1ccbc4"/>
<rect x="622.2" y="452.8" width="2.2" height="1.6" fill="#1ccbc4"/>
<rect x="625.1" y="452.5" width="2.2" height="1.9" fill="#e8175d"/>
<rect x="628.1" y="452.6" width="2.2" height="1.8" fill="#e8175d"/>
<rect x="631.1" y="452.9" width="2.2" height="1.5" fill="#e8175d"/>
<rect x="634.1" y="452.7" width="2.2" height="1.7" fill="#e8175d"/>
<rect x="637.1" y="452.6" width="2.2" height="1.8" fill="#e8175d"/>
<rect x="640.1" y="453.3" width="2.2" height="1.1" fill="#e8175d"/>
<rect x="643.0" y="452.7" width="2.2" height="1.7" fill="#1ccbc4"/>
<rect x="646.0" y="452.5" width="2.2" height="1.9" fill="#e8175d"/>
<rect x="649.0" y="452.6" width="2.2" height="1.8" fill="#e8175d"/>
<rect x="652.0" y="452.4" width="2.2" height="2.0" fill="#e8175d"/>
<rect x="655.0" y="452.5" width="2.2" height="1.9" fill="#e8175d"/>
<rect x="658.0" y="452.6" width="2.2" height="1.8" fill="#e8175d"/>
<rect x="660.9" y="451.3" width="2.2" height="3.1" fill="#e8175d"/>
<rect x="663.9" y="451.3" width="2.2" height="3.1" fill="#1ccbc4"/>
<rect x="666.9" y="448.9" width="2.2" height="5.5" fill="#1ccbc4"/>
<rect x="669.9" y="450.0" width="2.2" height="4.4" fill="#1ccbc4"/>
<rect x="672.9" y="451.9" width="2.2" height="2.5" fill="#1ccbc4"/>
<rect x="675.9" y="452.3" width="2.2" height="2.1" fill="#1ccbc4"/>
<rect x="678.8" y="452.0" width="2.2" height="2.4" fill="#e8175d"/>
<rect x="681.8" y="452.4" width="2.2" height="2.0" fill="#e8175d"/>
<rect x="684.8" y="453.1" width="2.2" height="1.3" fill="#e8175d"/>
<rect x="687.8" y="453.2" width="2.2" height="1.2" fill="#e8175d"/>
<rect x="690.8" y="453.2" width="2.2" height="1.2" fill="#e8175d"/>
<rect x="693.8" y="452.5" width="2.2" height="1.9" fill="#e8175d"/>
<rect x="696.7" y="452.6" width="2.2" height="1.8" fill="#1ccbc4"/>
<rect x="699.7" y="453.2" width="2.2" height="1.2" fill="#1ccbc4"/>
<rect x="702.7" y="452.6" width="2.2" height="1.8" fill="#1ccbc4"/>
<rect x="705.7" y="452.5" width="2.2" height="1.9" fill="#1ccbc4"/>
<rect x="708.7" y="452.8" width="2.2" height="1.6" fill="#1ccbc4"/>
<rect x="711.7" y="453.0" width="2.2" height="1.4" fill="#e8175d"/>
<rect x="714.6" y="452.9" width="2.2" height="1.5" fill="#e8175d"/>
<rect x="717.6" y="453.2" width="2.2" height="1.2" fill="#1ccbc4"/>
<rect x="720.6" y="453.3" width="2.2" height="1.1" fill="#1ccbc4"/>
<rect x="723.6" y="452.5" width="2.2" height="1.9" fill="#e8175d"/>
<rect x="726.6" y="452.8" width="2.2" height="1.6" fill="#1ccbc4"/>
<rect x="729.6" y="452.9" width="2.2" height="1.5" fill="#1ccbc4"/>
<rect x="732.5" y="452.5" width="2.2" height="1.9" fill="#1ccbc4"/>
<rect x="735.5" y="453.0" width="2.2" height="1.4" fill="#e8175d"/>
<rect x="738.5" y="452.6" width="2.2" height="1.8" fill="#1ccbc4"/>
<rect x="741.5" y="452.6" width="2.2" height="1.8" fill="#e8175d"/>
<rect x="744.5" y="453.2" width="2.2" height="1.2" fill="#e8175d"/>
<rect x="747.4" y="453.1" width="2.2" height="1.3" fill="#e8175d"/>
<rect x="750.4" y="453.1" width="2.2" height="1.3" fill="#e8175d"/>
<rect x="753.4" y="453.2" width="2.2" height="1.2" fill="#e8175d"/>
<rect x="756.4" y="452.8" width="2.2" height="1.6" fill="#e8175d"/>
<rect x="759.4" y="453.1" width="2.2" height="1.3" fill="#1ccbc4"/>
<rect x="762.4" y="453.0" width="2.2" height="1.4" fill="#e8175d"/>
<rect x="765.3" y="453.3" width="2.2" height="1.1" fill="#1ccbc4"/>
<rect x="768.3" y="452.6" width="2.2" height="1.8" fill="#1ccbc4"/>
<rect x="771.3" y="453.1" width="2.2" height="1.3" fill="#e8175d"/>
<rect x="774.3" y="453.0" width="2.2" height="1.4" fill="#e8175d"/>
<rect x="777.3" y="452.9" width="2.2" height="1.5" fill="#e8175d"/>
<rect x="780.3" y="452.6" width="2.2" height="1.8" fill="#e8175d"/>
<rect x="783.2" y="453.0" width="2.2" height="1.4" fill="#1ccbc4"/>
<rect x="786.2" y="452.6" width="2.2" height="1.8" fill="#e8175d"/>
<rect x="789.2" y="452.9" width="2.2" height="1.5" fill="#e8175d"/>
<rect x="792.2" y="452.9" width="2.2" height="1.5" fill="#1ccbc4"/>
<rect x="795.2" y="452.9" width="2.2" height="1.5" fill="#1ccbc4"/>
<rect x="798.2" y="453.4" width="2.2" height="1.0" fill="#e8175d"/>
<rect x="801.1" y="453.0" width="2.2" height="1.4" fill="#1ccbc4"/>
<rect x="804.1" y="453.2" width="2.2" height="1.2" fill="#e8175d"/>
<rect x="807.1" y="453.4" width="2.2" height="1.0" fill="#1ccbc4"/>
<rect x="810.1" y="452.7" width="2.2" height="1.7" fill="#e8175d"/>
<rect x="813.1" y="453.2" width="2.2" height="1.2" fill="#1ccbc4"/>
<rect x="816.1" y="453.0" width="2.2" height="1.4" fill="#1ccbc4"/>
<rect x="819.0" y="452.7" width="2.2" height="1.7" fill="#e8175d"/>
<rect x="822.0" y="452.9" width="2.2" height="1.5" fill="#e8175d"/>
<rect x="825.0" y="453.1" width="2.2" height="1.3" fill="#1ccbc4"/>
<rect x="828.0" y="452.9" width="2.2" height="1.5" fill="#e8175d"/>
<rect x="831.0" y="452.9" width="2.2" height="1.5" fill="#1ccbc4"/>
<rect x="834.0" y="452.7" width="2.2" height="1.7" fill="#e8175d"/>
<rect x="836.9" y="453.3" width="2.2" height="1.1" fill="#1ccbc4"/>
<rect x="839.9" y="452.9" width="2.2" height="1.5" fill="#1ccbc4"/>
<rect x="842.9" y="453.2" width="2.2" height="1.2" fill="#e8175d"/>
<rect x="845.9" y="453.1" width="2.2" height="1.3" fill="#e8175d"/>
<rect x="848.9" y="452.7" width="2.2" height="1.7" fill="#e8175d"/>
<rect x="851.9" y="452.9" width="2.2" height="1.5" fill="#1ccbc4"/>
<rect x="854.8" y="452.9" width="2.2" height="1.5" fill="#e8175d"/>
<rect x="857.8" y="452.7" width="2.2" height="1.7" fill="#1ccbc4"/>
<rect x="860.8" y="452.6" width="2.2" height="1.8" fill="#e8175d"/>
<rect x="863.8" y="453.0" width="2.2" height="1.4" fill="#e8175d"/>
<rect x="866.8" y="452.8" width="2.2" height="1.6" fill="#e8175d"/>
<rect x="869.8" y="452.9" width="2.2" height="1.5" fill="#e8175d"/>
<rect x="872.7" y="452.9" width="2.2" height="1.5" fill="#e8175d"/>
<rect x="875.7" y="452.8" width="2.2" height="1.6" fill="#1ccbc4"/>
<rect x="878.7" y="453.0" width="2.2" height="1.4" fill="#1ccbc4"/>
<rect x="881.7" y="452.9" width="2.2" height="1.5" fill="#e8175d"/>
<rect x="884.7" y="453.0" width="2.2" height="1.4" fill="#e8175d"/>
<rect x="887.7" y="452.6" width="2.2" height="1.8" fill="#1ccbc4"/>
<rect x="890.6" y="452.8" width="2.2" height="1.6" fill="#e8175d"/>
<rect x="893.6" y="452.6" width="2.2" height="1.8" fill="#1ccbc4"/>
<rect x="896.6" y="452.6" width="2.2" height="1.8" fill="#e8175d"/>
<rect x="899.6" y="453.2" width="2.2" height="1.2" fill="#1ccbc4"/>
<rect x="902.6" y="452.9" width="2.2" height="1.5" fill="#1ccbc4"/>
<rect x="905.5" y="452.6" width="2.2" height="1.8" fill="#e8175d"/>
<rect x="908.5" y="452.6" width="2.2" height="1.8" fill="#e8175d"/>
<rect x="911.5" y="453.3" width="2.2" height="1.1" fill="#e8175d"/>
<rect x="914.5" y="453.3" width="2.2" height="1.1" fill="#e8175d"/>
<rect x="917.5" y="453.0" width="2.2" height="1.4" fill="#e8175d"/>
<rect x="920.5" y="453.3" width="2.2" height="1.1" fill="#1ccbc4"/>
<rect x="923.4" y="453.2" width="2.2" height="1.2" fill="#1ccbc4"/>
<rect x="926.4" y="453.3" width="2.2" height="1.1" fill="#1ccbc4"/>
<rect x="929.4" y="452.8" width="2.2" height="1.6" fill="#1ccbc4"/>
<rect x="932.4" y="452.7" width="2.2" height="1.7" fill="#e8175d"/>
<rect x="935.4" y="452.6" width="2.2" height="1.8" fill="#1ccbc4"/>
<rect x="938.4" y="453.2" width="2.2" height="1.2" fill="#1ccbc4"/>
<rect x="941.3" y="452.8" width="2.2" height="1.6" fill="#e8175d"/>
<rect x="944.3" y="452.8" width="2.2" height="1.6" fill="#e8175d"/>
<rect x="947.3" y="453.3" width="2.2" height="1.1" fill="#1ccbc4"/>
<rect x="950.3" y="452.6" width="2.2" height="1.8" fill="#1ccbc4"/>
<rect x="953.3" y="452.5" width="2.2" height="1.9" fill="#e8175d"/>
<rect x="956.3" y="453.2" width="2.2" height="1.2" fill="#e8175d"/>
<rect x="959.2" y="452.5" width="2.2" height="1.9" fill="#1ccbc4"/>
<rect x="962.2" y="453.0" width="2.2" height="1.4" fill="#1ccbc4"/>
<rect x="965.2" y="453.0" width="2.2" height="1.4" fill="#e8175d"/>
<rect x="968.2" y="452.5" width="2.2" height="1.9" fill="#e8175d"/>
<rect x="971.2" y="452.7" width="2.2" height="1.7" fill="#e8175d"/>
<rect x="986.1" y="446.1" width="2.2" height="8.3" fill="#e8175d"/>
<rect x="1.2" y="454.4" width="993.4" height="0.9" fill="#444444"/>
<text x="3.2" y="440.6" font-size="6.2" fill="#d8d8d8" textLength="18.4" lengthAdjust="spacingAndGlyphs" >出来高</text>
<text x="998" y="443.4" font-size="6.7" fill="#d4d4dc" textLength="19.6" lengthAdjust="spacingAndGlyphs" >500000</text>
<rect x="2.2" y="461.5" width="986.3" height="1" fill="#707070"/>
<rect x="2.2" y="466.1" width="986.3" height="1" fill="#707070"/>
<rect x="2.2" y="470.3" width="986.3" height="1" fill="#707070"/>
<path d="M32.3,461.5 L35.3,461.0 L38.3,460.5 L41.3,460.1 L44.3,459.8 L47.2,459.6 L50.2,459.5 L53.2,459.3 L56.2,459.4 L59.2,459.3 L62.2,459.5 L65.1,459.3 L68.1,459.2 L71.1,459.2 L74.1,459.1 L77.1,459.2 L80.1,459.2 L83.0,459.3 L86.0,459.5 L89.0,459.9 L92.0,460.3 L95.0,460.3 L98.0,460.7 L100.9,461.4 L103.9,462.5 L106.9,463.3 L109.9,464.3 L112.9,464.5 L115.9,464.4 L118.8,464.6 L121.8,464.3 L124.8,464.3 L127.8,463.3 L130.8,462.2 L133.8,461.2 L136.7,459.9 L139.7,459.8 L142.7,459.1 L145.7,458.6 L148.7,458.3 L151.7,458.1 L154.6,458.1 L157.6,458.0 L160.6,458.2 L163.6,458.2 L166.6,458.4 L169.5,458.6 L172.5,458.6 L175.5,458.6 L178.5,458.6 L181.5,458.8 L184.5,459.5 L187.4,460.1 L190.4,460.2 L193.4,461.0 L196.4,461.8 L199.4,462.8 L202.4,463.4 L205.3,462.1 L208.3,462.2 L211.3,462.2 L214.3,461.1 L217.3,461.1 L220.3,461.0 L223.2,461.0 L226.2,460.7 L229.2,460.5 L232.2,460.3 L235.2,459.6 L238.2,459.3 L241.1,458.7 L244.1,458.5 L247.1,458.6 L250.1,459.3 L253.1,459.9 L256.1,460.9 L259.0,462.0 L262.0,462.7 L265.0,463.4 L268.0,464.3 L271.0,465.2 L274.0,465.2 L276.9,466.3 L279.9,467.2 L282.9,468.2 L285.9,467.2 L288.9,466.3 L291.9,466.3 L294.8,466.6 L297.8,467.8 L300.8,469.6 L303.8,469.7 L306.8,469.9 L309.7,470.1 L312.7,471.2 L315.7,472.1 L318.7,472.9 L321.7,473.6 L324.7,474.0 L327.6,474.3 L330.6,474.6 L333.6,474.8 L336.6,474.8 L339.6,474.9 L342.6,475.0 L345.5,475.0 L348.5,475.1 L351.5,475.0 L354.5,475.0 L357.5,474.7 L360.5,474.4 L363.4,474.1 L366.4,473.4 L369.4,472.6 L372.4,471.8 L375.4,470.5 L378.4,469.1 L381.3,467.4 L384.3,465.9 L387.3,464.6 L390.3,463.7 L393.3,462.9 L396.3,463.4 L399.2,463.3 L402.2,465.0 L405.2,467.1 L408.2,468.4 L411.2,470.1 L414.2,471.5 L417.1,472.2 L420.1,472.4 L423.1,472.6 L426.1,473.0 L429.1,472.9 L432.1,472.6 L435.0,472.1 L438.0,471.3 L441.0,470.7 L444.0,470.1 L447.0,470.1 L449.9,469.8 L452.9,470.0 L455.9,470.1 L458.9,470.6 L461.9,470.6 L464.9,471.4 L467.8,472.6 L470.8,473.2 L473.8,474.0 L476.8,474.7 L479.8,474.8 L482.8,474.8 L485.7,474.6 L488.7,474.7 L491.7,474.5 L494.7,474.1 L497.7,473.6 L500.7,472.8 L503.6,472.1 L506.6,471.1 L509.6,469.9 L512.6,468.6 L515.6,467.5 L518.6,466.3 L521.5,464.9 L524.5,463.4 L527.5,461.7 L530.5,461.6 L533.5,462.5 L536.5,463.1 L539.4,463.8 L542.4,464.7 L545.4,465.7 L548.4,465.9 L551.4,467.1 L554.4,467.4 L557.3,467.8 L560.3,467.3 L563.3,466.2 L566.3,465.8 L569.3,464.7 L572.3,464.8 L575.2,463.4 L578.2,464.9 L581.2,466.3 L584.2,466.0 L587.2,465.8 L590.2,464.8 L593.1,463.8 L596.1,463.6 L599.1,462.9 L602.1,462.2 L605.1,461.8 L608.0,461.6 L611.0,461.2 L614.0,461.0 L617.0,460.8 L620.0,461.1 L623.0,461.7 L625.9,462.7 L628.9,463.1 L631.9,464.0 L634.9,465.5 L637.9,466.6 L640.9,468.3 L643.8,470.7 L646.8,472.4 L649.8,473.8 L652.8,474.2 L655.8,474.2 L658.8,474.0 L661.7,474.0 L664.7,474.1 L667.7,474.2 L670.7,474.3 L673.7,474.3 L676.7,474.3 L679.6,474.3 L682.6,474.2 L685.6,474.2 L688.6,474.0 L691.6,473.6 L694.6,473.2 L697.5,472.6 L700.5,472.0 L703.5,471.4 L706.5,471.0 L709.5,470.6 L712.5,470.0 L715.4,469.4 L718.4,468.8 L721.4,468.4 L724.4,467.7 L727.4,467.2 L730.4,467.5 L733.3,469.0 L736.3,470.7 L739.3,472.6 L742.3,474.3 L745.3,474.8 L748.2,474.4 L751.2,473.8 L754.2,473.0 L757.2,471.7 L760.2,470.7 L763.2,469.5 L766.1,469.0 L769.1,468.6 L772.1,468.4 L775.1,468.0 L778.1,466.8 L781.1,465.3 L784.0,465.1 L787.0,463.7 L790.0,462.6 L793.0,462.4 L796.0,463.4 L799.0,463.9 L801.9,465.2 L804.9,466.3 L807.9,467.9 L810.9,467.8 L813.9,467.8 L816.9,468.2 L819.8,467.8 L822.8,467.6 L825.8,468.0 L828.8,469.3 L831.8,471.1 L834.8,472.8 L837.7,474.0 L840.7,474.5 L843.7,474.6 L846.7,475.0 L849.7,474.9 L852.7,474.9 L855.6,474.9 L858.6,475.0 L861.6,474.8 L864.6,474.0 L867.6,472.9 L870.6,471.5 L873.5,469.2 L876.5,467.9 L879.5,467.1 L882.5,466.1 L885.5,464.3 L888.5,463.6 L891.4,462.0 L894.4,462.4 L897.4,461.6 L900.4,461.8 L903.4,463.6 L906.3,464.9 L909.3,465.3 L912.3,465.8 L915.3,466.4 L918.3,466.5 L921.3,468.0 L924.2,470.1 L927.2,470.6 L930.2,471.0 L933.2,471.3 L936.2,471.3 L939.2,471.6 L942.1,472.2 L945.1,472.1 L948.1,472.2 L951.1,472.6 L954.1,472.6 L957.1,472.8 L960.0,473.0 L963.0,473.3 L966.0,473.8 L969.0,474.0 L972.0,473.9 L975.0,474.0 L977.9,473.3 L980.9,472.5 L983.9,472.0 L986.9,471.6" fill="none" stroke="#1f62d8" stroke-width="0.9"/>
<path d="M38.3,459.4 L41.3,459.6 L44.3,459.7 L47.2,461.7 L50.2,463.9 L53.2,465.2 L56.2,468.8 L59.2,466.5 L62.2,462.7 L65.1,462.2 L68.1,460.8 L71.1,458.4 L74.1,458.4 L77.1,459.9 L80.1,459.8 L83.0,461.7 L86.0,464.7 L89.0,469.4 L92.0,471.6 L95.0,470.8 L98.0,471.2 L100.9,469.3 L103.9,473.4 L106.9,471.6 L109.9,469.1 L112.9,464.3 L115.9,462.1 L118.8,460.7 L121.8,458.5 L124.8,458.4 L127.8,458.0 L130.8,458.0 L133.8,458.1 L136.7,458.1 L139.7,458.0 L142.7,457.8 L145.7,458.0 L148.7,458.4 L151.7,458.6 L154.6,459.8 L157.6,461.0 L160.6,462.7 L163.6,464.3 L166.6,466.2 L169.5,462.2 L172.5,461.1 L175.5,461.1 L178.5,458.1 L181.5,459.0 L184.5,463.6 L187.4,466.5 L190.4,466.6 L193.4,469.3 L196.4,471.9 L199.4,470.6 L202.4,468.1 L205.3,463.2 L208.3,460.5 L211.3,460.5 L214.3,460.2 L217.3,458.1 L220.3,458.0 L223.2,458.0 L226.2,458.2 L229.2,458.7 L232.2,458.9 L235.2,460.1 L238.2,463.4 L241.1,464.0 L244.1,464.2 L247.1,463.6 L250.1,465.4 L253.1,468.1 L256.1,469.8 L259.0,469.6 L262.0,468.3 L265.0,470.1 L268.0,467.5 L271.0,463.7 L274.0,458.4 L276.9,459.0 L279.9,460.0 L282.9,464.7 L285.9,466.2 L288.9,464.4 L291.9,465.1 L294.8,468.6 L297.8,471.2 L300.8,471.6 L303.8,473.0 L306.8,474.0 L309.7,474.9 L312.7,475.0 L315.7,474.9 L318.7,474.1 L321.7,473.5 L324.7,472.7 L327.6,472.8 L330.6,472.8 L333.6,472.8 L336.6,474.4 L339.6,474.6 L342.6,475.2 L345.5,474.9 L348.5,474.8 L351.5,474.4 L354.5,473.6 L357.5,470.0 L360.5,466.8 L363.4,463.3 L366.4,460.3 L369.4,459.9 L372.4,458.5 L375.4,458.4 L378.4,458.4 L381.3,458.5 L384.3,459.8 L387.3,463.9 L390.3,469.1 L393.3,471.7 L396.3,473.5 L399.2,474.1 L402.2,474.5 L405.2,474.6 L408.2,474.2 L411.2,474.1 L414.2,473.6 L417.1,469.7 L420.1,467.0 L423.1,464.1 L426.1,460.7 L429.1,461.3 L432.1,463.7 L435.0,464.2 L438.0,466.5 L441.0,471.2 L444.0,470.4 L447.0,471.7 L449.9,471.6 L452.9,472.2 L455.9,473.5 L458.9,474.3 L461.9,474.1 L464.9,473.3 L467.8,473.4 L470.8,473.3 L473.8,473.7 L476.8,473.6 L479.8,474.6 L482.8,474.0 L485.7,472.0 L488.7,471.8 L491.7,467.6 L494.7,464.3 L497.7,461.0 L500.7,459.8 L503.6,459.8 L506.6,459.7 L509.6,459.6 L512.6,459.0 L515.6,462.1 L518.6,464.7 L521.5,467.4 L524.5,470.0 L527.5,469.0 L530.5,471.0 L533.5,471.3 L536.5,468.6 L539.4,464.7 L542.4,464.1 L545.4,463.4 L548.4,462.8 L551.4,462.1 L554.4,461.4 L557.3,460.8 L560.3,460.8 L563.3,461.4 L566.3,460.4 L569.3,461.8 L572.3,466.1 L575.2,466.7 L578.2,469.8 L581.2,471.8 L584.2,471.2 L587.2,468.1 L590.2,465.4 L593.1,460.8 L596.1,458.9 L599.1,459.1 L602.1,459.0 L605.1,460.8 L608.0,463.2 L611.0,465.2 L614.0,467.6 L617.0,469.8 L620.0,469.1 L623.0,469.1 L625.9,470.6 L628.9,471.3 L631.9,472.6 L634.9,472.7 L637.9,471.3 L640.9,469.1 L643.8,469.1 L646.8,469.0 L649.8,471.0 L652.8,472.0 L655.8,472.0 L658.8,471.0 L661.7,469.0 L664.7,469.1 L667.7,469.1 L670.7,471.4 L673.7,473.1 L676.7,474.2 L679.6,474.8 L682.6,473.6 L685.6,470.6 L688.6,466.5 L691.6,461.3 L694.6,459.1 L697.5,458.8 L700.5,460.2 L703.5,463.2 L706.5,467.3 L709.5,472.6 L712.5,474.4 L715.4,474.8 L718.4,474.9 L721.4,474.9 L724.4,474.5 L727.4,474.3 L730.4,474.3 L733.3,474.3 L736.3,474.5 L739.3,474.5 L742.3,473.6 L745.3,471.9 L748.2,467.5 L751.2,462.9 L754.2,459.9 L757.2,458.1 L760.2,458.6 L763.2,459.3 L766.1,462.9 L769.1,468.1 L772.1,471.7 L775.1,472.9 L778.1,472.6 L781.1,469.9 L784.0,467.1 L787.0,463.1 L790.0,459.0 L793.0,458.6 L796.0,460.2 L799.0,461.3 L801.9,464.3 L804.9,468.0 L807.9,469.6 L810.9,473.5 L813.9,474.1 L816.9,474.1 L819.8,474.1 L822.8,474.3 L825.8,474.3 L828.8,474.3 L831.8,474.3 L834.8,474.0 L837.7,473.7 L840.7,473.7 L843.7,474.1 L846.7,473.3 L849.7,472.0 L852.7,472.4 L855.6,472.4 L858.6,473.8 L861.6,471.9 L864.6,466.6 L867.6,463.9 L870.6,461.8 L873.5,459.7 L876.5,459.1 L879.5,460.9 L882.5,463.8 L885.5,466.0 L888.5,470.8 L891.4,468.7 L894.4,470.1 L897.4,469.3 L900.4,469.3 L903.4,470.3 L906.3,472.5 L909.3,471.9 L912.3,469.0 L915.3,466.9 L918.3,461.6 L921.3,460.9 L924.2,462.8 L927.2,465.8 L930.2,470.6 L933.2,473.1 L936.2,474.3 L939.2,475.0 L942.1,474.1 L945.1,470.0 L948.1,467.8 L951.1,468.5 L954.1,468.0 L957.1,467.9 L960.0,468.4 L963.0,470.8 L966.0,474.1 L969.0,473.2 L972.0,471.3 L975.0,471.3 L977.9,468.9 L980.9,464.9 L983.9,462.3 L986.9,461.7" fill="none" stroke="#a89618" stroke-width="0.9"/>
<rect x="1.2" y="475.9" width="993.4" height="0.9" fill="#444444"/>
<text x="3" y="462.8" font-size="7" fill="#ffffff" textLength="9.6" lengthAdjust="spacingAndGlyphs" font-family="Liberation Serif, serif" >RCI</text>
<text x="16" y="462.8" font-size="7" fill="#e6d428" textLength="21" lengthAdjust="spacingAndGlyphs" font-family="Liberation Serif, serif" >RCI1(9)</text>
<text x="40" y="462.8" font-size="7" fill="#3a7cff" textLength="25" lengthAdjust="spacingAndGlyphs" font-family="Liberation Serif, serif" >RCI2(21)</text>
<text x="68" y="462.8" font-size="7" fill="#ff6420" textLength="22.5" lengthAdjust="spacingAndGlyphs" font-family="Liberation Serif, serif" >RCI3(52)</text>
<text x="93" y="462.8" font-size="7" fill="#20c0a0" textLength="21" lengthAdjust="spacingAndGlyphs" font-family="Liberation Serif, serif" >RCI4(0)</text>
<text x="998" y="469.2" font-size="6.7" fill="#d4d4dc" textLength="3.4" lengthAdjust="spacingAndGlyphs" >0</text>
<path d="M3,484 L40,484 L44,480.5 L50,479.3 L100,479.6 L130,480.6 L160,481.2 L200,482 L256,483 L330,483.2 L335,482.6 L352,482.6 L356,483.2 L372,483.3 L376,482.6 L380,483.2 L430,483.6 L450,483.8 L560,483.9 L666,483.9 L668,483.3 L680,483.3 L682,482.9 L697,482.9 L699,483.8 L795,483.8 L797,484.2 L864,484.3 L866,483.9 L972,484.1 L975,484.9 L987,485" fill="none" stroke="#a89618" stroke-width="0.9"/>
<text x="3" y="484.2" font-size="7" fill="#ffffff" textLength="10.4" lengthAdjust="spacingAndGlyphs" font-family="Liberation Serif, serif" >ATR</text>
<text x="17" y="484.2" font-size="7" fill="#e6d428" textLength="23" lengthAdjust="spacingAndGlyphs" font-family="Liberation Serif, serif" >ATR(14)</text>
<clipPath id="c50"><rect x="996" y="476.9" width="28" height="10"/></clipPath>
<g clip-path="url(#c50)">
<text x="998" y="481.4" font-size="6.7" fill="#d4d4dc" textLength="6.6" lengthAdjust="spacingAndGlyphs" >50</text>
</g>
<rect x="1.2" y="486.9" width="993.4" height="0.9" fill="#424242"/>
<rect x="90.1" y="487" width="0.8" height="1.8" fill="#9a9a9a"/>
<text x="92.1" y="495.6" font-size="6.4" fill="#c8c8c8" textLength="15.6" lengthAdjust="spacingAndGlyphs" >09:30</text>
<rect x="180.1" y="487" width="0.8" height="1.8" fill="#9a9a9a"/>
<text x="182.1" y="495.6" font-size="6.4" fill="#c8c8c8" textLength="15.6" lengthAdjust="spacingAndGlyphs" >10:00</text>
<rect x="268.6" y="487" width="0.8" height="1.8" fill="#9a9a9a"/>
<text x="270.6" y="495.6" font-size="6.4" fill="#c8c8c8" textLength="15.6" lengthAdjust="spacingAndGlyphs" >10:30</text>
<rect x="357.6" y="487" width="0.8" height="1.8" fill="#9a9a9a"/>
<text x="359.6" y="495.6" font-size="6.4" fill="#c8c8c8" textLength="15.6" lengthAdjust="spacingAndGlyphs" >11:00</text>
<rect x="448.1" y="487" width="0.8" height="1.8" fill="#9a9a9a"/>
<text x="450.1" y="495.6" font-size="6.4" fill="#c8c8c8" textLength="15.6" lengthAdjust="spacingAndGlyphs" >11:30</text>
<rect x="539.1" y="487" width="0.8" height="1.8" fill="#9a9a9a"/>
<text x="541.1" y="495.6" font-size="6.4" fill="#c8c8c8" textLength="15.6" lengthAdjust="spacingAndGlyphs" >13:00</text>
<rect x="628.6" y="487" width="0.8" height="1.8" fill="#9a9a9a"/>
<text x="630.6" y="495.6" font-size="6.4" fill="#c8c8c8" textLength="15.6" lengthAdjust="spacingAndGlyphs" >13:30</text>
<rect x="717.6" y="487" width="0.8" height="1.8" fill="#9a9a9a"/>
<text x="719.6" y="495.6" font-size="6.4" fill="#c8c8c8" textLength="15.6" lengthAdjust="spacingAndGlyphs" >14:00</text>
<rect x="806.6" y="487" width="0.8" height="1.8" fill="#9a9a9a"/>
<text x="808.6" y="495.6" font-size="6.4" fill="#c8c8c8" textLength="15.6" lengthAdjust="spacingAndGlyphs" >14:30</text>
<rect x="895.6" y="487" width="0.8" height="1.8" fill="#9a9a9a"/>
<text x="897.6" y="495.6" font-size="6.4" fill="#c8c8c8" textLength="15.6" lengthAdjust="spacingAndGlyphs" >15:00</text>
<rect x="985.1" y="487" width="0.8" height="1.8" fill="#9a9a9a"/>
<rect x="450.1" y="487" width="0.8" height="1.8" fill="#9a9a9a"/>
<text x="4.2" y="495.6" font-size="6.6" fill="#f0f0f0" textLength="17.6" lengthAdjust="spacingAndGlyphs" font-weight="bold" >10/17</text>
</svg>
</body></html>
